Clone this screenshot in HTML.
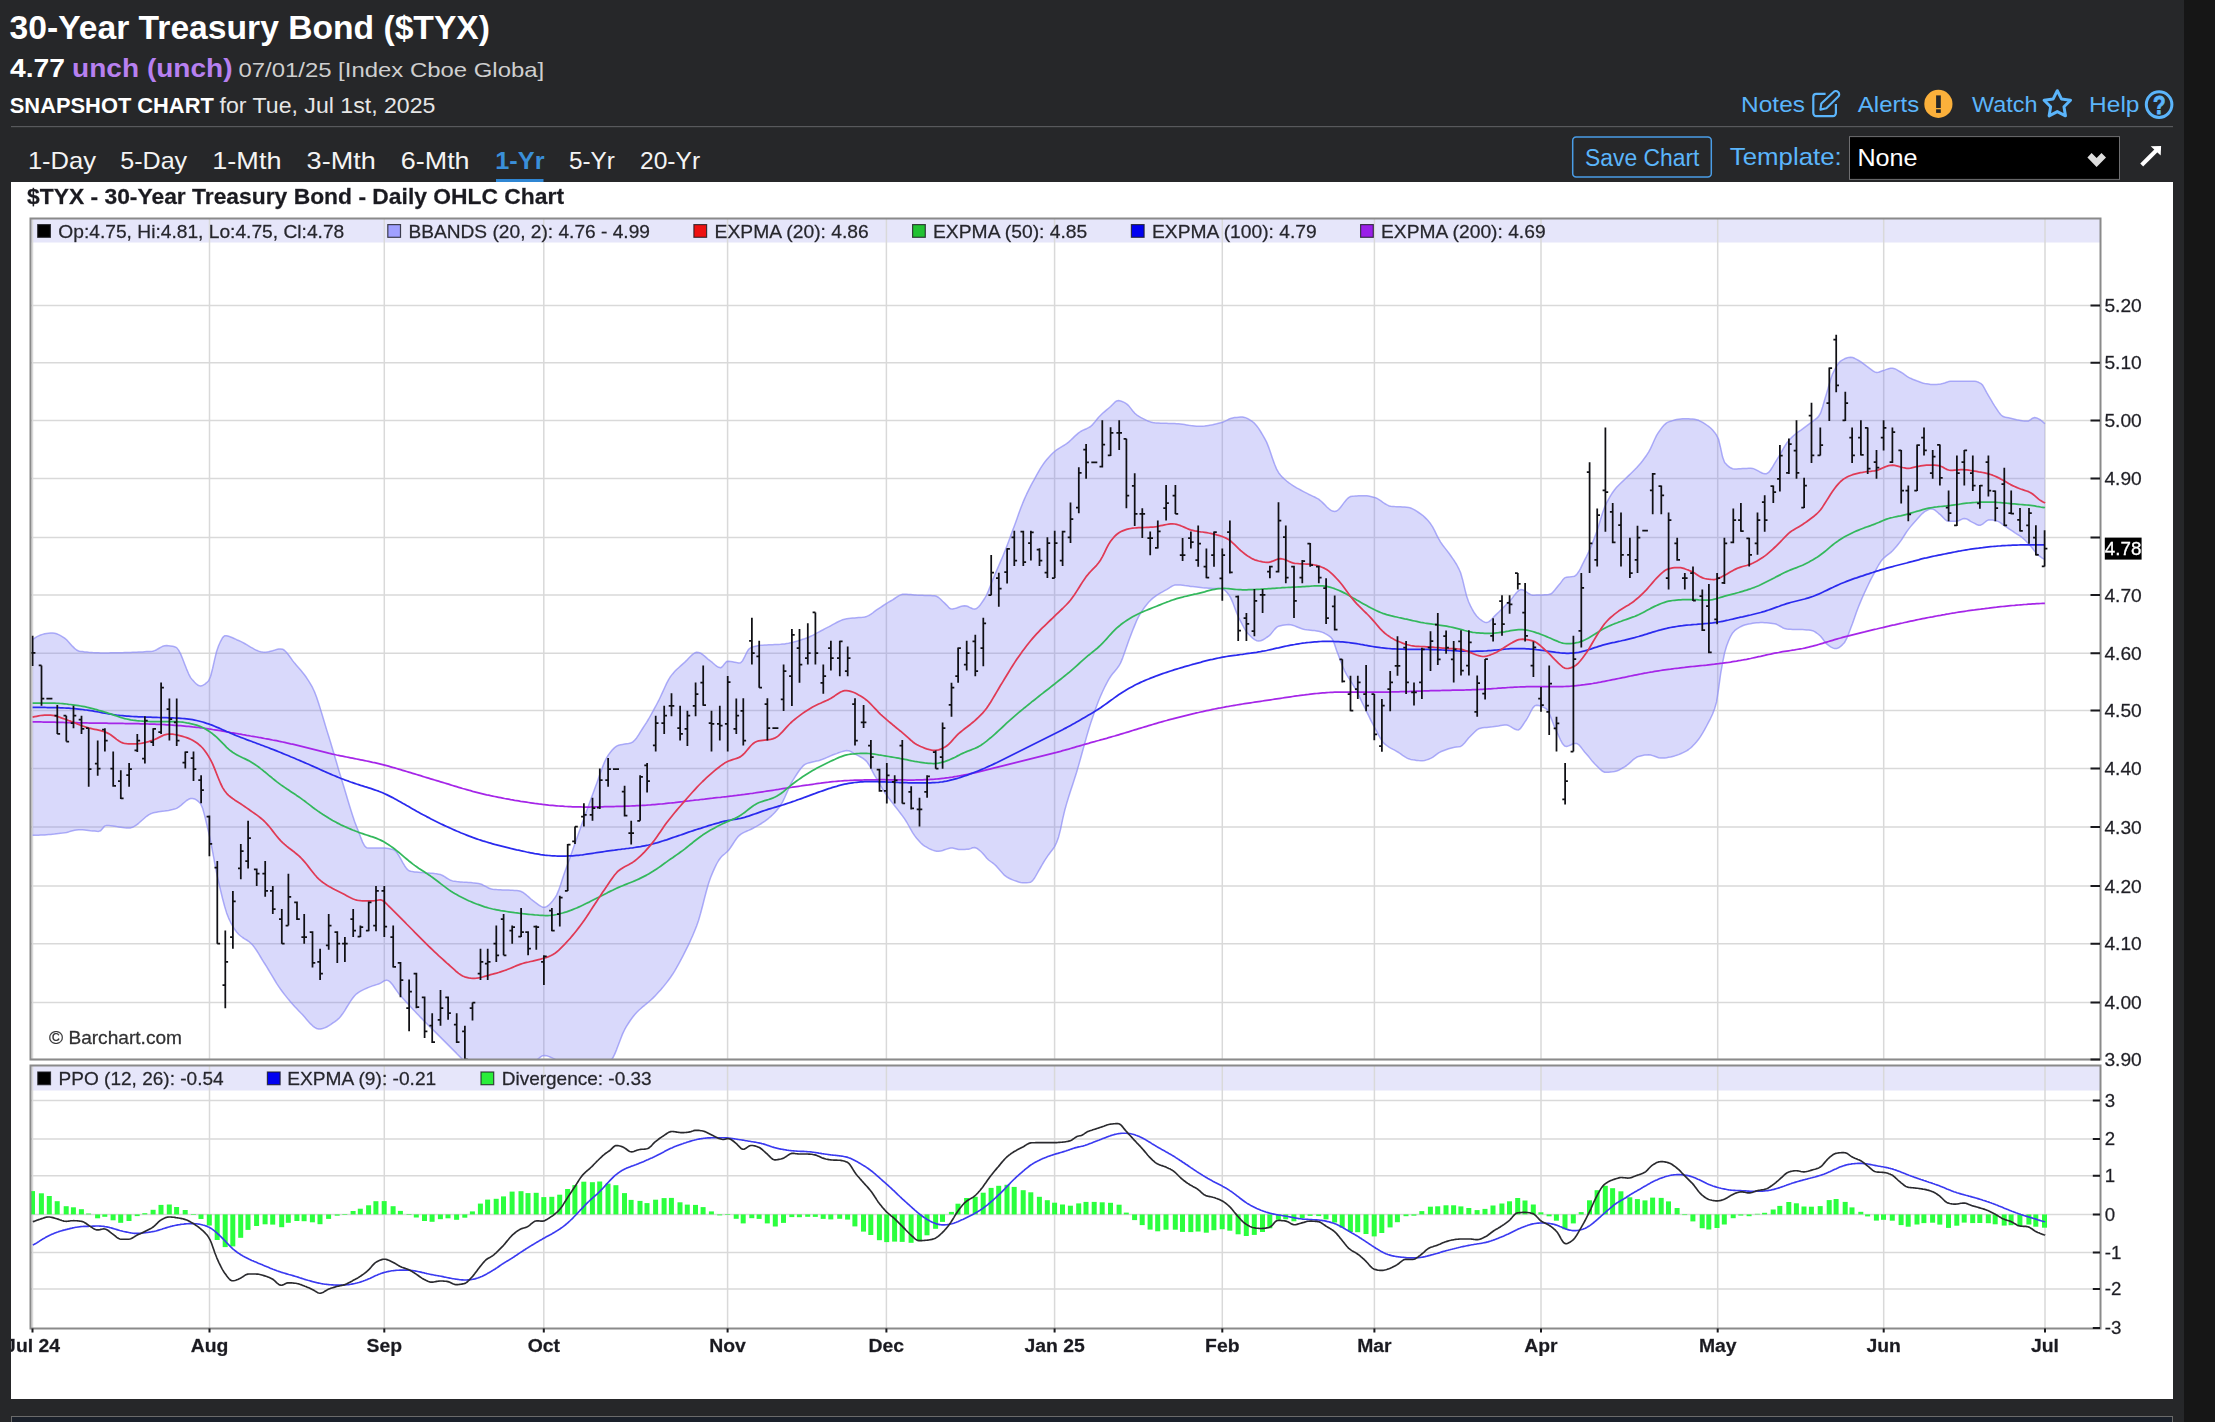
<!DOCTYPE html>
<html lang="en">
<head>
<meta charset="utf-8">
<title>30-Year Treasury Bond ($TYX) Snapshot Chart</title>
<style>
html,body{margin:0;padding:0}
body{width:2215px;height:1422px;overflow:hidden;position:relative;background:#262729;font-family:"Liberation Sans",sans-serif;color:#fff}
.strip{position:absolute;left:2184px;top:0;width:31px;height:1422px;background:#161616}
#chart{position:absolute;left:11px;top:182px;width:2162px;height:1217px;background:#fff;overflow:hidden}
.foot{position:absolute;left:11px;top:1416px;width:2162px;height:10px;background:#1a202a;border:1px solid #6b6b6b;box-sizing:border-box}
</style>
</head>
<body>
<div class="strip"></div>
<svg width="2215" height="182" viewBox="0 0 2215 182" style="position:absolute;left:0;top:0" font-family="Liberation Sans, sans-serif">
<text x="9.6" y="39.2" font-size="33.0" fill="#ffffff" font-weight="bold" textLength="480.4" lengthAdjust="spacingAndGlyphs">30-Year Treasury Bond ($TYX)</text>
<text x="10.0" y="77.0" font-size="25.7" fill="#ffffff" font-weight="bold" textLength="55.1" lengthAdjust="spacingAndGlyphs">4.77</text>
<text x="72.1" y="77.0" font-size="25.7" fill="#b780f0" font-weight="bold" textLength="160.5" lengthAdjust="spacingAndGlyphs">unch (unch)</text>
<text x="238.4" y="77.0" font-size="21.0" fill="#cfcfcf" textLength="305.8" lengthAdjust="spacingAndGlyphs">07/01/25 [Index Cboe Globa]</text>
<text x="9.8" y="112.5" font-size="21.3" fill="#ffffff" font-weight="bold" textLength="204.0" lengthAdjust="spacingAndGlyphs">SNAPSHOT CHART</text>
<text x="219.6" y="112.5" font-size="21.3" fill="#e6e6e6" textLength="215.8" lengthAdjust="spacingAndGlyphs">for Tue, Jul 1st, 2025</text>
<text x="27.9" y="169.1" font-size="23.4" fill="#f4f4f4" textLength="68.2" lengthAdjust="spacingAndGlyphs">1-Day</text>
<text x="120.2" y="169.1" font-size="23.4" fill="#f4f4f4" textLength="67.0" lengthAdjust="spacingAndGlyphs">5-Day</text>
<text x="212.3" y="169.1" font-size="23.4" fill="#f4f4f4" textLength="69.2" lengthAdjust="spacingAndGlyphs">1-Mth</text>
<text x="306.6" y="169.1" font-size="23.4" fill="#f4f4f4" textLength="69.2" lengthAdjust="spacingAndGlyphs">3-Mth</text>
<text x="400.8" y="169.1" font-size="23.4" fill="#f4f4f4" textLength="68.8" lengthAdjust="spacingAndGlyphs">6-Mth</text>
<text x="495.3" y="169.1" font-size="23.4" fill="#3a8fd9" font-weight="bold" textLength="49.2" lengthAdjust="spacingAndGlyphs">1-Yr</text>
<text x="568.9" y="169.1" font-size="23.4" fill="#f4f4f4" textLength="45.9" lengthAdjust="spacingAndGlyphs">5-Yr</text>
<text x="640.0" y="169.1" font-size="23.4" fill="#f4f4f4" textLength="60.1" lengthAdjust="spacingAndGlyphs">20-Yr</text>
<rect x="496" y="179" width="47.5" height="3" fill="#2f86d3"/>
<text x="1741.1" y="112.2" font-size="22.6" fill="#5bb5fb" textLength="63.9" lengthAdjust="spacingAndGlyphs">Notes</text>
<text x="1857.8" y="112.2" font-size="22.6" fill="#5bb5fb" textLength="61.4" lengthAdjust="spacingAndGlyphs">Alerts</text>
<text x="1972.0" y="112.2" font-size="22.6" fill="#5bb5fb" textLength="65.4" lengthAdjust="spacingAndGlyphs">Watch</text>
<text x="2089.1" y="112.2" font-size="22.6" fill="#5bb5fb" textLength="50.4" lengthAdjust="spacingAndGlyphs">Help</text>
<text x="1585.0" y="165.6" font-size="23.0" fill="#5bb5fb" textLength="114.4" lengthAdjust="spacingAndGlyphs">Save Chart</text>
<text x="1729.8" y="165.0" font-size="24.6" fill="#5bb5fb" textLength="111.9" lengthAdjust="spacingAndGlyphs">Template:</text>
<rect x="11" y="126" width="2162" height="1.2" fill="#58595c"/>
<rect x="1572.7" y="136.9" width="138.6" height="40" rx="3.5" fill="none" stroke="#4a9de6" stroke-width="1.5"/>
<rect x="1849.5" y="136.6" width="270" height="42.8" fill="#000" stroke="#6e6e70" stroke-width="1"/>
<text x="1857.4" y="166.4" font-size="23.5" fill="#ffffff" textLength="60.2" lengthAdjust="spacingAndGlyphs">None</text>
<path d="M2087.4 157.6 L2091.6 153.1 L2096.6 158.1 L2101.5 153.1 L2106 157.4 L2096.6 167 Z" fill="#dddddd"/>
<path d="M2141.7 165 L2156.5 150.2" stroke="#fff" stroke-width="4.1" fill="none" stroke-linecap="butt"/>
<path d="M2150.7 146.3 L2161.1 145.9 L2160.7 155.4 Z" fill="#fff" stroke="none"/>
<path d="M1825.6 93.9 H1816.3 a3 3 0 0 0 -3 3 V113.1 a3 3 0 0 0 3 3 H1832.9 a3 3 0 0 0 3 -3 V103.9" fill="none" stroke="#5bb5fb" stroke-width="2.2"/>
<path d="M1821.3 103.6 L1833.6 91.9 a3.1 3.1 0 0 1 4.4 0 l0.3 0.3 a3.1 3.1 0 0 1 0 4.4 L1826.4 108.3 L1820.4 109.6 Z" fill="none" stroke="#5bb5fb" stroke-width="2.1" stroke-linejoin="round"/>
<circle cx="1938.4" cy="103.9" r="14.1" fill="#fbb03b"/>
<rect x="1936.1" y="95.4" width="4.7" height="12.6" fill="#262729"/><rect x="1936.1" y="109.3" width="4.7" height="3.6" fill="#262729"/>
<path d="M2057.30 90.70 L2061.41 98.94 L2070.52 100.30 L2063.96 106.76 L2065.47 115.85 L2057.30 111.60 L2049.13 115.85 L2050.64 106.76 L2044.08 100.30 L2053.19 98.94Z" fill="none" stroke="#5bb5fb" stroke-width="3" stroke-linejoin="round"/>
<circle cx="2159.1" cy="104.6" r="12.8" fill="none" stroke="#5bb5fb" stroke-width="3"/>
<text x="2152.9" y="113.6" font-size="25.5" font-weight="bold" fill="#5bb5fb" stroke="#5bb5fb" stroke-width="0.9" stroke-linejoin="round" textLength="12.6" lengthAdjust="spacingAndGlyphs">?</text>
</svg>
<div id="chart">
<svg width="2162" height="1217" viewBox="0 0 2162 1217" style="position:absolute;left:0;top:0;filter:blur(0.6px)">
<rect x="19.5" y="36.5" width="2070.0" height="24.0" fill="#e6e6fa"/>
<rect x="19.5" y="883.5" width="2070.0" height="25.0" fill="#e6e6fa"/>
<path d="M19.5 123.4 H2089.5M19.5 180.8 H2089.5M19.5 238.5 H2089.5M19.5 296.4 H2089.5M19.5 355.4 H2089.5M19.5 413.0 H2089.5M19.5 471.2 H2089.5M19.5 528.6 H2089.5M19.5 586.5 H2089.5M19.5 645.0 H2089.5M19.5 704.0 H2089.5M19.5 761.7 H2089.5M19.5 820.4 H2089.5M19.5 877.5 H2089.5M21.5 36.5 V877.5M21.5 883.5 V1146.5M198.5 36.5 V877.5M198.5 883.5 V1146.5M373.3 36.5 V877.5M373.3 883.5 V1146.5M532.8 36.5 V877.5M532.8 883.5 V1146.5M716.6 36.5 V877.5M716.6 883.5 V1146.5M875.4 36.5 V877.5M875.4 883.5 V1146.5M1043.6 36.5 V877.5M1043.6 883.5 V1146.5M1211.3 36.5 V877.5M1211.3 883.5 V1146.5M1363.4 36.5 V877.5M1363.4 883.5 V1146.5M1530.0 36.5 V877.5M1530.0 883.5 V1146.5M1706.7 36.5 V877.5M1706.7 883.5 V1146.5M1872.7 36.5 V877.5M1872.7 883.5 V1146.5M2034.0 36.5 V877.5M2034.0 883.5 V1146.5M19.5 918.6 H2089.5M19.5 957.0 H2089.5M19.5 993.7 H2089.5M19.5 1032.4 H2089.5M19.5 1070.4 H2089.5M19.5 1107.0 H2089.5" stroke="#d9d9d9" stroke-width="1.5" fill="none"/>
<clipPath id="c1"><rect x="19.5" y="36.5" width="2070.0" height="841.0"/></clipPath>
<g clip-path="url(#c1)">
<path d="M21.6 457.7 L23.6 456.2 L25.6 454.9 L27.6 453.9 L29.6 453.0 L31.6 452.4 L33.6 451.8 L35.6 451.5 L37.6 451.2 L39.6 451.1 L41.6 451.1 L43.6 451.2 L45.6 451.8 L47.6 452.6 L49.6 453.7 L51.6 454.8 L53.6 456.1 L55.6 457.8 L57.6 459.9 L59.6 462.2 L61.6 464.4 L63.6 466.4 L65.6 468.0 L67.6 469.0 L69.6 469.4 L71.6 469.6 L73.6 469.9 L75.6 470.1 L77.6 470.3 L79.6 470.4 L81.6 470.6 L83.6 470.7 L85.6 470.8 L87.6 470.8 L89.6 470.9 L91.6 470.9 L93.6 470.9 L95.6 470.9 L97.6 470.9 L99.6 470.8 L101.6 470.8 L103.6 470.8 L105.6 470.8 L107.6 470.7 L109.6 470.7 L111.6 470.7 L113.6 470.6 L115.6 470.5 L117.6 470.5 L119.6 470.4 L121.6 470.3 L123.6 470.3 L125.6 470.2 L127.6 470.1 L129.6 470.0 L131.6 469.9 L133.6 469.7 L135.6 469.6 L137.6 469.5 L139.6 469.4 L141.6 469.2 L143.6 468.6 L145.6 467.7 L147.6 466.5 L149.6 465.3 L151.6 464.3 L153.6 463.7 L155.6 463.6 L157.6 463.8 L159.6 464.0 L161.6 464.3 L163.6 464.8 L165.6 465.6 L167.6 468.1 L169.6 471.9 L171.6 476.7 L173.6 481.9 L175.6 487.1 L177.6 491.8 L179.6 495.6 L181.6 498.1 L183.6 500.3 L185.6 502.2 L187.6 503.6 L189.6 503.9 L191.6 503.4 L193.6 502.3 L195.6 500.7 L197.6 498.8 L199.6 494.2 L201.6 486.5 L203.6 477.6 L205.6 469.4 L207.6 463.7 L209.6 459.3 L211.6 455.6 L213.6 453.7 L215.6 453.8 L217.6 454.3 L219.6 455.0 L221.6 455.8 L223.6 456.7 L225.6 457.7 L227.6 458.5 L229.6 459.4 L231.6 460.4 L233.6 461.5 L235.6 462.7 L237.6 463.9 L239.6 465.1 L241.6 466.2 L243.6 467.3 L245.6 468.3 L247.6 469.1 L249.6 469.7 L251.6 470.1 L253.6 470.2 L255.6 470.1 L257.6 469.7 L259.6 469.2 L261.6 468.7 L263.6 468.1 L265.6 467.5 L267.6 467.1 L269.6 466.9 L271.6 467.2 L273.6 468.5 L275.6 470.5 L277.6 473.0 L279.6 475.8 L281.6 478.6 L283.6 481.1 L285.6 483.4 L287.6 485.7 L289.6 488.0 L291.6 490.5 L293.6 493.0 L295.6 495.8 L297.6 498.8 L299.6 502.1 L301.6 505.7 L303.6 510.0 L305.6 515.2 L307.6 521.2 L309.6 527.6 L311.6 534.2 L313.6 541.0 L315.6 547.6 L317.6 554.0 L319.6 560.5 L321.6 567.2 L323.6 574.0 L325.6 580.8 L327.6 587.6 L329.6 594.3 L331.6 600.8 L333.6 607.3 L335.6 614.0 L337.6 620.7 L339.6 627.2 L341.6 633.5 L343.6 639.4 L345.6 644.7 L347.6 649.7 L349.6 655.1 L351.6 660.1 L353.6 663.9 L355.6 665.8 L357.6 665.9 L359.6 665.9 L361.6 665.9 L363.6 665.9 L365.6 665.9 L367.6 665.9 L369.6 665.9 L371.6 666.0 L373.6 666.1 L375.6 666.3 L377.6 666.6 L379.6 667.0 L381.6 667.4 L383.6 668.2 L385.6 670.2 L387.6 673.1 L389.6 676.6 L391.6 680.3 L393.6 683.7 L395.6 686.6 L397.6 688.5 L399.6 689.2 L401.6 689.6 L403.6 689.9 L405.6 690.1 L407.6 690.3 L409.6 690.5 L411.6 690.6 L413.6 690.8 L415.6 690.9 L417.6 691.0 L419.6 691.2 L421.6 691.3 L423.6 691.6 L425.6 691.8 L427.6 692.2 L429.6 692.6 L431.6 693.5 L433.6 694.7 L435.6 696.0 L437.6 697.2 L439.6 698.3 L441.6 698.9 L443.6 699.2 L445.6 699.5 L447.6 699.7 L449.6 699.9 L451.6 700.1 L453.6 700.2 L455.6 700.3 L457.6 700.4 L459.6 700.6 L461.6 700.8 L463.6 700.9 L465.6 701.2 L467.6 701.5 L469.6 701.9 L471.6 702.8 L473.6 703.8 L475.6 704.9 L477.6 706.0 L479.6 706.8 L481.6 707.2 L483.6 707.4 L485.6 707.6 L487.6 707.7 L489.6 707.8 L491.6 707.9 L493.6 708.0 L495.6 708.1 L497.6 708.1 L499.6 708.2 L501.6 708.3 L503.6 708.4 L505.6 708.6 L507.6 708.8 L509.6 709.3 L511.6 710.2 L513.6 711.6 L515.6 713.2 L517.6 714.9 L519.6 716.7 L521.6 718.4 L523.6 719.9 L525.6 721.3 L527.6 722.8 L529.6 724.2 L531.6 725.2 L533.6 725.3 L535.6 724.6 L537.6 723.2 L539.6 721.3 L541.6 718.9 L543.6 716.3 L545.6 713.1 L547.6 708.4 L549.6 702.7 L551.6 696.5 L553.6 690.5 L555.6 685.0 L557.6 679.5 L559.6 673.9 L561.6 668.2 L563.6 662.6 L565.6 656.9 L567.6 651.3 L569.6 645.7 L571.6 640.1 L573.6 634.6 L575.6 629.0 L577.6 623.4 L579.6 617.9 L581.6 612.5 L583.6 607.1 L585.6 601.7 L587.6 596.0 L589.6 590.3 L591.6 584.9 L593.6 579.9 L595.6 575.8 L597.6 572.6 L599.6 570.0 L601.6 567.6 L603.6 565.6 L605.6 564.1 L607.6 563.2 L609.6 562.7 L611.6 562.4 L613.6 562.1 L615.6 561.8 L617.6 561.5 L619.6 561.0 L621.6 560.1 L623.6 558.3 L625.6 555.9 L627.6 552.9 L629.6 549.7 L631.6 546.5 L633.6 543.4 L635.6 540.3 L637.6 537.0 L639.6 533.5 L641.6 529.9 L643.6 526.2 L645.6 522.5 L647.6 518.7 L649.6 514.5 L651.6 510.1 L653.6 505.7 L655.6 501.4 L657.6 497.6 L659.6 494.4 L661.6 491.9 L663.6 489.6 L665.6 487.5 L667.6 485.7 L669.6 483.9 L671.6 482.1 L673.6 480.4 L675.6 478.4 L677.6 476.2 L679.6 474.2 L681.6 472.4 L683.6 471.0 L685.6 470.3 L687.6 470.4 L689.6 471.2 L691.6 472.5 L693.6 474.1 L695.6 475.9 L697.6 477.7 L699.6 479.2 L701.6 480.7 L703.6 482.5 L705.6 484.1 L707.6 485.3 L709.6 485.8 L711.6 484.4 L713.6 481.8 L715.6 479.6 L717.6 479.2 L719.6 479.4 L721.6 479.8 L723.6 480.2 L725.6 480.6 L727.6 480.9 L729.6 480.8 L731.6 478.7 L733.6 474.9 L735.6 470.7 L737.6 467.3 L739.6 465.8 L741.6 465.0 L743.6 464.4 L745.6 463.9 L747.6 463.6 L749.6 463.3 L751.6 463.2 L753.6 463.0 L755.6 462.9 L757.6 462.8 L759.6 462.8 L761.6 462.7 L763.6 462.6 L765.6 462.5 L767.6 462.4 L769.6 462.3 L771.6 462.1 L773.6 461.9 L775.6 461.6 L777.6 461.3 L779.6 460.8 L781.6 460.4 L783.6 459.8 L785.6 459.3 L787.6 458.6 L789.6 458.0 L791.6 457.3 L793.6 456.7 L795.6 456.0 L797.6 455.2 L799.6 454.3 L801.6 453.4 L803.6 452.3 L805.6 451.2 L807.6 450.1 L809.6 449.0 L811.6 448.0 L813.6 446.9 L815.6 445.9 L817.6 444.9 L819.6 443.8 L821.6 442.7 L823.6 441.6 L825.6 440.5 L827.6 439.5 L829.6 438.6 L831.6 437.8 L833.6 437.2 L835.6 436.8 L837.6 436.5 L839.6 436.3 L841.6 436.1 L843.6 436.0 L845.6 435.8 L847.6 435.6 L849.6 435.4 L851.6 435.2 L853.6 434.9 L855.6 434.4 L857.6 433.6 L859.6 432.4 L861.6 431.0 L863.6 429.4 L865.6 427.9 L867.6 426.6 L869.6 425.3 L871.6 424.0 L873.6 422.7 L875.6 421.4 L877.6 420.2 L879.6 419.0 L881.6 417.8 L883.6 416.5 L885.6 415.2 L887.6 413.9 L889.6 412.9 L891.6 412.3 L893.6 412.2 L895.6 412.3 L897.6 412.4 L899.6 412.5 L901.6 412.7 L903.6 412.9 L905.6 413.1 L907.6 413.2 L909.6 413.3 L911.6 413.3 L913.6 413.4 L915.6 413.4 L917.6 413.5 L919.6 413.6 L921.6 413.7 L923.6 413.8 L925.6 414.3 L927.6 415.5 L929.6 417.3 L931.6 419.3 L933.6 421.1 L935.6 423.1 L937.6 425.3 L939.6 426.8 L941.6 427.0 L943.6 426.6 L945.6 426.0 L947.6 425.2 L949.6 424.5 L951.6 424.0 L953.6 423.8 L955.6 424.0 L957.6 424.8 L959.6 425.8 L961.6 426.7 L963.6 427.1 L965.6 426.5 L967.6 424.8 L969.6 422.4 L971.6 419.5 L973.6 416.5 L975.6 413.0 L977.6 408.4 L979.6 403.4 L981.6 398.1 L983.6 393.2 L985.6 388.6 L987.6 384.0 L989.6 379.4 L991.6 374.7 L993.6 369.9 L995.6 364.7 L997.6 359.4 L999.6 354.0 L1001.6 348.5 L1003.6 343.2 L1005.6 337.7 L1007.6 332.1 L1009.6 326.6 L1011.6 321.4 L1013.6 316.6 L1015.6 312.2 L1017.6 308.1 L1019.6 304.2 L1021.6 300.4 L1023.6 296.8 L1025.6 293.1 L1027.6 289.6 L1029.6 286.2 L1031.6 283.1 L1033.6 280.3 L1035.6 277.8 L1037.6 275.4 L1039.6 273.2 L1041.6 271.3 L1043.6 269.5 L1045.6 267.9 L1047.6 266.6 L1049.6 265.4 L1051.6 264.2 L1053.6 263.0 L1055.6 261.6 L1057.6 260.1 L1059.6 258.3 L1061.6 256.4 L1063.6 254.4 L1065.6 252.6 L1067.6 250.9 L1069.6 249.5 L1071.6 248.4 L1073.6 247.5 L1075.6 246.7 L1077.6 245.7 L1079.6 244.5 L1081.6 242.6 L1083.6 240.3 L1085.6 237.7 L1087.6 235.2 L1089.6 233.2 L1091.6 231.3 L1093.6 229.6 L1095.6 227.9 L1097.6 226.2 L1099.6 224.5 L1101.6 222.5 L1103.6 220.4 L1105.6 218.9 L1107.6 218.5 L1109.6 218.9 L1111.6 219.7 L1113.6 220.7 L1115.6 221.9 L1117.6 223.6 L1119.6 226.1 L1121.6 228.7 L1123.6 231.1 L1125.6 232.8 L1127.6 234.1 L1129.6 235.3 L1131.6 236.4 L1133.6 237.4 L1135.6 238.4 L1137.6 239.2 L1139.6 239.9 L1141.6 240.4 L1143.6 240.8 L1145.6 241.0 L1147.6 241.1 L1149.6 241.2 L1151.6 241.2 L1153.6 241.3 L1155.6 241.3 L1157.6 241.4 L1159.6 241.4 L1161.6 241.5 L1163.6 241.6 L1165.6 241.7 L1167.6 241.8 L1169.6 242.0 L1171.6 242.3 L1173.6 242.6 L1175.6 242.9 L1177.6 243.3 L1179.6 243.6 L1181.6 243.8 L1183.6 244.0 L1185.6 244.2 L1187.6 244.3 L1189.6 244.3 L1191.6 244.2 L1193.6 244.0 L1195.6 243.7 L1197.6 243.4 L1199.6 243.1 L1201.6 242.7 L1203.6 242.2 L1205.6 241.8 L1207.6 241.3 L1209.6 240.8 L1211.6 240.2 L1213.6 239.4 L1215.6 238.4 L1217.6 237.3 L1219.6 236.5 L1221.6 236.0 L1223.6 235.6 L1225.6 235.4 L1227.6 235.2 L1229.6 235.1 L1231.6 235.0 L1233.6 235.4 L1235.6 236.1 L1237.6 237.2 L1239.6 238.4 L1241.6 239.7 L1243.6 241.4 L1245.6 243.7 L1247.6 246.4 L1249.6 249.5 L1251.6 252.8 L1253.6 256.3 L1255.6 260.1 L1257.6 265.1 L1259.6 270.8 L1261.6 276.7 L1263.6 282.3 L1265.6 287.1 L1267.6 290.7 L1269.6 293.2 L1271.6 295.4 L1273.6 297.3 L1275.6 299.0 L1277.6 300.6 L1279.6 302.0 L1281.6 303.4 L1283.6 304.6 L1285.6 305.8 L1287.6 306.9 L1289.6 308.0 L1291.6 309.1 L1293.6 310.2 L1295.6 311.2 L1297.6 312.2 L1299.6 313.1 L1301.6 314.1 L1303.6 315.0 L1305.6 316.1 L1307.6 317.2 L1309.6 318.8 L1311.6 320.6 L1313.6 322.6 L1315.6 324.7 L1317.6 326.5 L1319.6 328.1 L1321.6 329.1 L1323.6 329.5 L1325.6 329.0 L1327.6 327.5 L1329.6 325.3 L1331.6 322.6 L1333.6 319.9 L1335.6 317.5 L1337.6 315.6 L1339.6 314.5 L1341.6 314.2 L1343.6 314.1 L1345.6 313.9 L1347.6 313.8 L1349.6 313.7 L1351.6 313.7 L1353.6 313.7 L1355.6 313.8 L1357.6 314.1 L1359.6 314.4 L1361.6 314.9 L1363.6 315.4 L1365.6 316.2 L1367.6 317.3 L1369.6 318.6 L1371.6 320.1 L1373.6 321.5 L1375.6 322.7 L1377.6 323.7 L1379.6 324.2 L1381.6 324.4 L1383.6 324.6 L1385.6 324.7 L1387.6 324.7 L1389.6 324.8 L1391.6 324.9 L1393.6 325.0 L1395.6 325.2 L1397.6 325.4 L1399.6 326.0 L1401.6 326.9 L1403.6 327.9 L1405.6 329.2 L1407.6 330.5 L1409.6 331.8 L1411.6 333.3 L1413.6 335.1 L1415.6 337.1 L1417.6 339.3 L1419.6 341.8 L1421.6 344.9 L1423.6 348.7 L1425.6 352.8 L1427.6 356.7 L1429.6 360.1 L1431.6 363.0 L1433.6 365.6 L1435.6 368.1 L1437.6 370.7 L1439.6 373.5 L1441.6 376.4 L1443.6 379.3 L1445.6 382.5 L1447.6 386.3 L1449.6 390.8 L1451.6 397.7 L1453.6 406.1 L1455.6 414.0 L1457.6 419.8 L1459.6 424.1 L1461.6 428.0 L1463.6 431.3 L1465.6 434.0 L1467.6 436.0 L1469.6 437.7 L1471.6 439.2 L1473.6 440.2 L1475.6 440.6 L1477.6 439.9 L1479.6 438.4 L1481.6 436.3 L1483.6 434.1 L1485.6 432.1 L1487.6 430.3 L1489.6 428.3 L1491.6 426.3 L1493.6 424.2 L1495.6 422.2 L1497.6 420.1 L1499.6 418.1 L1501.6 415.6 L1503.6 412.9 L1505.6 410.5 L1507.6 408.6 L1509.6 407.6 L1511.6 407.8 L1513.6 408.7 L1515.6 410.1 L1517.6 411.5 L1519.6 412.6 L1521.6 413.2 L1523.6 413.2 L1525.6 413.1 L1527.6 413.1 L1529.6 413.0 L1531.6 412.9 L1533.6 412.8 L1535.6 412.7 L1537.6 412.6 L1539.6 412.1 L1541.6 410.6 L1543.6 408.3 L1545.6 405.7 L1547.6 403.2 L1549.6 400.9 L1551.6 398.1 L1553.6 395.9 L1555.6 395.2 L1557.6 394.9 L1559.6 394.8 L1561.6 394.6 L1563.6 394.2 L1565.6 392.6 L1567.6 389.8 L1569.6 386.3 L1571.6 382.2 L1573.6 378.2 L1575.6 374.3 L1577.6 370.1 L1579.6 365.5 L1581.6 360.6 L1583.6 355.5 L1585.6 350.1 L1587.6 343.9 L1589.6 337.2 L1591.6 330.8 L1593.6 325.3 L1595.6 320.9 L1597.6 317.1 L1599.6 313.6 L1601.6 310.5 L1603.6 307.7 L1605.6 305.3 L1607.6 303.2 L1609.6 301.2 L1611.6 299.4 L1613.6 297.5 L1615.6 295.5 L1617.6 293.6 L1619.6 291.7 L1621.6 289.8 L1623.6 287.8 L1625.6 285.7 L1627.6 283.5 L1629.6 281.2 L1631.6 278.7 L1633.6 276.0 L1635.6 273.2 L1637.6 270.1 L1639.6 266.4 L1641.6 262.0 L1643.6 257.5 L1645.6 253.4 L1647.6 250.2 L1649.6 247.4 L1651.6 244.8 L1653.6 242.6 L1655.6 240.9 L1657.6 239.9 L1659.6 239.2 L1661.6 238.6 L1663.6 238.0 L1665.6 237.6 L1667.6 237.2 L1669.6 236.9 L1671.6 236.7 L1673.6 236.7 L1675.6 236.7 L1677.6 236.8 L1679.6 236.9 L1681.6 237.1 L1683.6 237.3 L1685.6 237.7 L1687.6 238.3 L1689.6 239.3 L1691.6 240.4 L1693.6 241.6 L1695.6 243.0 L1697.6 244.4 L1699.6 246.0 L1701.6 248.0 L1703.6 250.4 L1705.6 253.3 L1707.6 257.4 L1709.6 265.8 L1711.6 275.1 L1713.6 280.5 L1715.6 282.6 L1717.6 284.5 L1719.6 285.8 L1721.6 286.7 L1723.6 286.9 L1725.6 286.9 L1727.6 286.8 L1729.6 286.7 L1731.6 286.6 L1733.6 286.5 L1735.6 286.4 L1737.6 286.3 L1739.6 286.2 L1741.6 286.4 L1743.6 287.1 L1745.6 288.1 L1747.6 289.2 L1749.6 290.3 L1751.6 291.2 L1753.6 291.8 L1755.6 291.7 L1757.6 290.4 L1759.6 288.0 L1761.6 284.8 L1763.6 281.4 L1765.6 278.1 L1767.6 275.0 L1769.6 271.6 L1771.6 267.9 L1773.6 264.4 L1775.6 261.3 L1777.6 258.8 L1779.6 256.6 L1781.6 254.5 L1783.6 252.7 L1785.6 251.0 L1787.6 249.6 L1789.6 248.3 L1791.6 246.9 L1793.6 245.4 L1795.6 243.9 L1797.6 242.3 L1799.6 240.8 L1801.6 239.3 L1803.6 237.9 L1805.6 236.4 L1807.6 234.4 L1809.6 231.0 L1811.6 225.0 L1813.6 218.0 L1815.6 211.4 L1817.6 204.5 L1819.6 197.5 L1821.6 191.8 L1823.6 187.8 L1825.6 184.2 L1827.6 181.2 L1829.6 179.1 L1831.6 177.9 L1833.6 176.8 L1835.6 176.0 L1837.6 175.4 L1839.6 175.2 L1841.6 175.5 L1843.6 176.3 L1845.6 177.4 L1847.6 178.5 L1849.6 179.7 L1851.6 181.1 L1853.6 182.6 L1855.6 184.2 L1857.6 185.6 L1859.6 187.1 L1861.6 188.6 L1863.6 189.9 L1865.6 190.5 L1867.6 190.3 L1869.6 189.5 L1871.6 188.7 L1873.6 188.1 L1875.6 187.4 L1877.6 186.7 L1879.6 186.2 L1881.6 186.2 L1883.6 186.7 L1885.6 187.7 L1887.6 188.8 L1889.6 190.0 L1891.6 191.2 L1893.6 192.7 L1895.6 194.1 L1897.6 195.3 L1899.6 196.3 L1901.6 197.2 L1903.6 198.0 L1905.6 198.8 L1907.6 199.5 L1909.6 200.3 L1911.6 201.0 L1913.6 201.5 L1915.6 201.8 L1917.6 202.1 L1919.6 202.4 L1921.6 202.5 L1923.6 202.6 L1925.6 202.5 L1927.6 202.2 L1929.6 201.9 L1931.6 201.5 L1933.6 201.0 L1935.6 200.3 L1937.6 199.6 L1939.6 199.3 L1941.6 199.3 L1943.6 199.3 L1945.6 199.3 L1947.6 199.3 L1949.6 199.3 L1951.6 199.3 L1953.6 199.3 L1955.6 199.3 L1957.6 199.3 L1959.6 199.3 L1961.6 199.3 L1963.6 199.3 L1965.6 199.6 L1967.6 200.3 L1969.6 201.3 L1971.6 203.1 L1973.6 206.7 L1975.6 210.4 L1977.6 213.8 L1979.6 217.2 L1981.6 220.6 L1983.6 223.8 L1985.6 226.8 L1987.6 229.9 L1989.6 232.5 L1991.6 234.2 L1993.6 235.0 L1995.6 235.4 L1997.6 235.8 L1999.6 236.2 L2001.6 236.7 L2003.6 237.2 L2005.6 237.7 L2007.6 238.1 L2009.6 238.4 L2011.6 238.7 L2013.6 238.9 L2015.6 239.1 L2017.6 238.9 L2019.6 237.7 L2021.6 236.2 L2023.6 235.5 L2025.6 235.9 L2027.6 236.9 L2029.6 238.0 L2031.6 239.6 L2033.6 241.5 L2033.9 241.8 L2033.9 377.6 L2033.6 377.4 L2031.6 376.3 L2029.6 374.9 L2027.6 373.3 L2025.6 371.4 L2023.6 369.1 L2021.6 366.5 L2019.6 364.1 L2017.6 361.9 L2015.6 359.8 L2013.6 357.8 L2011.6 356.0 L2009.6 354.4 L2007.6 353.1 L2005.6 351.8 L2003.6 350.6 L2001.6 349.2 L1999.6 347.9 L1997.6 346.6 L1995.6 345.2 L1993.6 343.9 L1991.6 342.3 L1989.6 340.8 L1987.6 339.6 L1985.6 338.9 L1983.6 338.5 L1981.6 338.1 L1979.6 337.9 L1977.6 337.9 L1975.6 338.9 L1973.6 340.5 L1971.6 342.1 L1969.6 343.2 L1967.6 343.2 L1965.6 342.5 L1963.6 341.4 L1961.6 340.4 L1959.6 339.3 L1957.6 338.0 L1955.6 336.9 L1953.6 336.4 L1951.6 336.8 L1949.6 337.8 L1947.6 338.7 L1945.6 339.2 L1943.6 339.2 L1941.6 339.2 L1939.6 339.2 L1937.6 339.2 L1935.6 338.7 L1933.6 337.1 L1931.6 334.9 L1929.6 332.9 L1927.6 331.3 L1925.6 329.5 L1923.6 327.9 L1921.6 327.0 L1919.6 326.9 L1917.6 327.6 L1915.6 328.6 L1913.6 329.7 L1911.6 331.3 L1909.6 333.3 L1907.6 335.6 L1905.6 337.8 L1903.6 340.0 L1901.6 342.2 L1899.6 344.6 L1897.6 347.1 L1895.6 349.9 L1893.6 353.0 L1891.6 356.2 L1889.6 359.1 L1887.6 361.7 L1885.6 364.2 L1883.6 366.5 L1881.6 368.7 L1879.6 370.6 L1877.6 372.2 L1875.6 373.7 L1873.6 375.3 L1871.6 377.3 L1869.6 379.8 L1867.6 383.0 L1865.6 386.6 L1863.6 390.4 L1861.6 394.1 L1859.6 397.9 L1857.6 402.0 L1855.6 406.2 L1853.6 410.5 L1851.6 415.0 L1849.6 419.6 L1847.6 424.5 L1845.6 429.7 L1843.6 435.5 L1841.6 441.3 L1839.6 446.6 L1837.6 451.8 L1835.6 456.7 L1833.6 460.4 L1831.6 462.6 L1829.6 464.4 L1827.6 465.8 L1825.6 466.6 L1823.6 466.6 L1821.6 465.9 L1819.6 464.8 L1817.6 463.4 L1815.6 461.9 L1813.6 459.6 L1811.6 456.8 L1809.6 454.3 L1807.6 452.5 L1805.6 451.0 L1803.6 449.7 L1801.6 448.7 L1799.6 448.3 L1797.6 448.0 L1795.6 447.9 L1793.6 447.7 L1791.6 447.6 L1789.6 447.5 L1787.6 447.5 L1785.6 447.4 L1783.6 447.4 L1781.6 447.4 L1779.6 447.3 L1777.6 447.3 L1775.6 447.1 L1773.6 446.6 L1771.6 445.7 L1769.6 444.5 L1767.6 443.3 L1765.6 442.3 L1763.6 441.7 L1761.6 441.4 L1759.6 441.2 L1757.6 441.0 L1755.6 440.8 L1753.6 440.7 L1751.6 440.6 L1749.6 440.6 L1747.6 440.7 L1745.6 440.8 L1743.6 441.0 L1741.6 441.3 L1739.6 441.7 L1737.6 442.0 L1735.6 442.5 L1733.6 443.0 L1731.6 443.8 L1729.6 444.7 L1727.6 445.8 L1725.6 447.1 L1723.6 448.7 L1721.6 450.9 L1719.6 454.3 L1717.6 458.7 L1715.6 464.0 L1713.6 470.9 L1711.6 480.6 L1709.6 491.8 L1707.6 506.7 L1705.6 519.9 L1703.6 526.8 L1701.6 532.0 L1699.6 536.3 L1697.6 540.1 L1695.6 544.0 L1693.6 547.7 L1691.6 551.2 L1689.6 554.4 L1687.6 557.2 L1685.6 559.7 L1683.6 562.0 L1681.6 564.1 L1679.6 566.0 L1677.6 567.5 L1675.6 568.8 L1673.6 569.9 L1671.6 570.9 L1669.6 571.8 L1667.6 572.6 L1665.6 573.3 L1663.6 573.9 L1661.6 574.4 L1659.6 574.9 L1657.6 575.3 L1655.6 575.7 L1653.6 575.9 L1651.6 576.1 L1649.6 576.0 L1647.6 575.7 L1645.6 575.0 L1643.6 574.3 L1641.6 573.6 L1639.6 573.0 L1637.6 572.8 L1635.6 572.9 L1633.6 573.1 L1631.6 573.5 L1629.6 573.9 L1627.6 574.4 L1625.6 575.3 L1623.6 576.6 L1621.6 578.2 L1619.6 580.1 L1617.6 581.9 L1615.6 583.5 L1613.6 584.8 L1611.6 586.0 L1609.6 587.2 L1607.6 588.3 L1605.6 589.0 L1603.6 589.5 L1601.6 589.8 L1599.6 590.0 L1597.6 590.2 L1595.6 590.3 L1593.6 590.2 L1591.6 589.3 L1589.6 587.7 L1587.6 585.8 L1585.6 583.7 L1583.6 581.8 L1581.6 579.6 L1579.6 577.1 L1577.6 574.6 L1575.6 572.2 L1573.6 570.0 L1571.6 567.4 L1569.6 564.8 L1567.6 562.6 L1565.6 561.4 L1563.6 561.4 L1561.6 562.0 L1559.6 563.0 L1557.6 563.9 L1555.6 564.5 L1553.6 564.1 L1551.6 561.8 L1549.6 558.1 L1547.6 553.7 L1545.6 549.4 L1543.6 545.3 L1541.6 540.1 L1539.6 534.8 L1537.6 530.1 L1535.6 527.0 L1533.6 525.8 L1531.6 524.8 L1529.6 524.0 L1527.6 523.5 L1525.6 523.2 L1523.6 523.9 L1521.6 526.3 L1519.6 530.0 L1517.6 534.0 L1515.6 537.5 L1513.6 540.4 L1511.6 543.5 L1509.6 546.3 L1507.6 547.9 L1505.6 547.8 L1503.6 547.0 L1501.6 545.9 L1499.6 544.6 L1497.6 543.6 L1495.6 543.1 L1493.6 543.1 L1491.6 543.3 L1489.6 543.5 L1487.6 543.9 L1485.6 544.2 L1483.6 544.5 L1481.6 544.8 L1479.6 545.0 L1477.6 545.2 L1475.6 545.4 L1473.6 545.6 L1471.6 545.8 L1469.6 546.2 L1467.6 546.8 L1465.6 548.1 L1463.6 550.0 L1461.6 552.0 L1459.6 554.0 L1457.6 556.0 L1455.6 558.5 L1453.6 561.0 L1451.6 563.1 L1449.6 564.4 L1447.6 564.7 L1445.6 564.9 L1443.6 565.3 L1441.6 565.7 L1439.6 566.2 L1437.6 566.8 L1435.6 567.5 L1433.6 568.2 L1431.6 569.0 L1429.6 569.8 L1427.6 570.9 L1425.6 572.3 L1423.6 573.9 L1421.6 575.4 L1419.6 576.4 L1417.6 577.2 L1415.6 577.9 L1413.6 578.5 L1411.6 578.8 L1409.6 578.7 L1407.6 578.6 L1405.6 578.4 L1403.6 578.1 L1401.6 577.8 L1399.6 577.4 L1397.6 576.8 L1395.6 575.8 L1393.6 574.6 L1391.6 573.3 L1389.6 571.9 L1387.6 570.5 L1385.6 569.3 L1383.6 568.2 L1381.6 567.2 L1379.6 566.1 L1377.6 564.9 L1375.6 563.5 L1373.6 561.9 L1371.6 559.7 L1369.6 556.6 L1367.6 553.1 L1365.6 549.2 L1363.6 545.5 L1361.6 541.7 L1359.6 537.8 L1357.6 533.7 L1355.6 529.6 L1353.6 525.5 L1351.6 521.5 L1349.6 517.3 L1347.6 513.2 L1345.6 509.3 L1343.6 505.5 L1341.6 502.1 L1339.6 498.9 L1337.6 495.9 L1335.6 492.6 L1333.6 488.8 L1331.6 484.3 L1329.6 479.1 L1327.6 473.8 L1325.6 468.4 L1323.6 462.4 L1321.6 457.5 L1319.6 455.1 L1317.6 453.6 L1315.6 452.3 L1313.6 451.3 L1311.6 450.4 L1309.6 449.8 L1307.6 449.3 L1305.6 448.9 L1303.6 448.6 L1301.6 448.4 L1299.6 448.2 L1297.6 448.0 L1295.6 447.8 L1293.6 447.5 L1291.6 447.0 L1289.6 446.3 L1287.6 445.5 L1285.6 444.7 L1283.6 443.9 L1281.6 443.2 L1279.6 442.8 L1277.6 442.6 L1275.6 442.7 L1273.6 442.9 L1271.6 443.2 L1269.6 443.7 L1267.6 444.2 L1265.6 445.4 L1263.6 447.4 L1261.6 449.9 L1259.6 452.4 L1257.6 454.2 L1255.6 455.5 L1253.6 456.9 L1251.6 458.0 L1249.6 458.8 L1247.6 459.1 L1245.6 458.7 L1243.6 457.6 L1241.6 456.1 L1239.6 454.2 L1237.6 452.3 L1235.6 449.9 L1233.6 446.8 L1231.6 443.2 L1229.6 439.4 L1227.6 435.5 L1225.6 430.8 L1223.6 425.5 L1221.6 420.1 L1219.6 415.6 L1217.6 412.4 L1215.6 410.0 L1213.6 408.0 L1211.6 406.9 L1209.6 406.7 L1207.6 406.6 L1205.6 406.5 L1203.6 406.5 L1201.6 406.4 L1199.6 406.3 L1197.6 406.2 L1195.6 406.0 L1193.6 405.9 L1191.6 405.7 L1189.6 405.4 L1187.6 405.2 L1185.6 405.0 L1183.6 404.8 L1181.6 404.6 L1179.6 404.4 L1177.6 404.1 L1175.6 403.8 L1173.6 403.6 L1171.6 403.3 L1169.6 403.1 L1167.6 403.0 L1165.6 402.9 L1163.6 403.1 L1161.6 403.9 L1159.6 405.0 L1157.6 406.4 L1155.6 407.6 L1153.6 408.7 L1151.6 409.8 L1149.6 410.9 L1147.6 412.1 L1145.6 413.4 L1143.6 414.8 L1141.6 416.4 L1139.6 418.3 L1137.6 420.3 L1135.6 422.7 L1133.6 425.3 L1131.6 428.1 L1129.6 431.2 L1127.6 434.6 L1125.6 438.8 L1123.6 443.6 L1121.6 448.6 L1119.6 453.8 L1117.6 458.9 L1115.6 464.7 L1113.6 470.6 L1111.6 476.1 L1109.6 480.9 L1107.6 484.3 L1105.6 487.1 L1103.6 489.4 L1101.6 491.8 L1099.6 494.5 L1097.6 497.7 L1095.6 501.3 L1093.6 505.3 L1091.6 509.5 L1089.6 514.0 L1087.6 518.8 L1085.6 524.0 L1083.6 529.5 L1081.6 535.4 L1079.6 541.4 L1077.6 547.8 L1075.6 554.6 L1073.6 561.8 L1071.6 569.0 L1069.6 576.3 L1067.6 583.4 L1065.6 590.3 L1063.6 596.6 L1061.6 602.7 L1059.6 608.8 L1057.6 615.0 L1055.6 621.6 L1053.6 628.8 L1051.6 637.4 L1049.6 647.1 L1047.6 654.9 L1045.6 660.5 L1043.6 664.6 L1041.6 667.5 L1039.6 670.0 L1037.6 672.7 L1035.6 675.7 L1033.6 678.7 L1031.6 682.0 L1029.6 685.5 L1027.6 688.9 L1025.6 692.5 L1023.6 696.0 L1021.6 698.6 L1019.6 700.3 L1017.6 700.6 L1015.6 700.7 L1013.6 700.8 L1011.6 700.8 L1009.6 700.5 L1007.6 700.0 L1005.6 699.3 L1003.6 698.6 L1001.6 697.9 L999.6 697.0 L997.6 696.0 L995.6 694.8 L993.6 693.4 L991.6 691.3 L989.6 689.1 L987.6 686.7 L985.6 684.4 L983.6 682.5 L981.6 680.9 L979.6 679.5 L977.6 678.0 L975.6 676.0 L973.6 673.6 L971.6 671.2 L969.6 669.3 L967.6 667.6 L965.6 666.2 L963.6 665.5 L961.6 665.8 L959.6 666.6 L957.6 667.2 L955.6 667.3 L953.6 667.5 L951.6 667.6 L949.6 667.6 L947.6 667.5 L945.6 667.0 L943.6 666.5 L941.6 666.1 L939.6 666.1 L937.6 666.5 L935.6 667.1 L933.6 667.8 L931.6 668.5 L929.6 669.1 L927.6 669.3 L925.6 669.2 L923.6 668.8 L921.6 668.1 L919.6 667.3 L917.6 666.3 L915.6 665.2 L913.6 664.1 L911.6 662.6 L909.6 660.7 L907.6 658.5 L905.6 656.2 L903.6 653.6 L901.6 650.6 L899.6 647.1 L897.6 643.5 L895.6 640.0 L893.6 636.9 L891.6 634.1 L889.6 631.5 L887.6 628.9 L885.6 626.3 L883.6 623.7 L881.6 621.1 L879.6 618.5 L877.6 615.9 L875.6 613.1 L873.6 610.2 L871.6 607.0 L869.6 603.6 L867.6 600.2 L865.6 596.7 L863.6 593.3 L861.6 589.6 L859.6 585.7 L857.6 582.2 L855.6 579.4 L853.6 577.6 L851.6 576.2 L849.6 575.0 L847.6 573.9 L845.6 572.9 L843.6 571.8 L841.6 570.6 L839.6 569.4 L837.6 568.7 L835.6 568.6 L833.6 568.9 L831.6 569.4 L829.6 570.1 L827.6 570.8 L825.6 571.6 L823.6 572.3 L821.6 573.0 L819.6 573.9 L817.6 574.8 L815.6 575.6 L813.6 576.5 L811.6 577.3 L809.6 578.0 L807.6 578.7 L805.6 579.1 L803.6 579.6 L801.6 579.9 L799.6 580.4 L797.6 580.9 L795.6 581.6 L793.6 582.6 L791.6 584.4 L789.6 586.7 L787.6 589.5 L785.6 592.5 L783.6 595.6 L781.6 598.8 L779.6 602.4 L777.6 606.6 L775.6 611.2 L773.6 615.7 L771.6 619.9 L769.6 623.4 L767.6 626.1 L765.6 628.5 L763.6 630.7 L761.6 632.7 L759.6 634.6 L757.6 636.3 L755.6 637.8 L753.6 639.3 L751.6 640.7 L749.6 642.0 L747.6 643.2 L745.6 644.3 L743.6 645.4 L741.6 646.5 L739.6 647.5 L737.6 648.4 L735.6 649.2 L733.6 650.1 L731.6 651.2 L729.6 652.4 L727.6 654.1 L725.6 656.5 L723.6 659.4 L721.6 662.5 L719.6 665.5 L717.6 668.2 L715.6 670.3 L713.6 672.0 L711.6 673.6 L709.6 675.7 L707.6 678.5 L705.6 682.0 L703.6 686.1 L701.6 690.6 L699.6 695.5 L697.6 701.3 L695.6 708.2 L693.6 715.8 L691.6 723.7 L689.6 731.3 L687.6 738.2 L685.6 743.9 L683.6 749.0 L681.6 753.8 L679.6 758.3 L677.6 762.6 L675.6 766.7 L673.6 770.7 L671.6 774.6 L669.6 778.4 L667.6 782.1 L665.6 785.7 L663.6 789.1 L661.6 792.3 L659.6 795.2 L657.6 798.0 L655.6 800.6 L653.6 803.1 L651.6 805.6 L649.6 807.9 L647.6 810.1 L645.6 812.3 L643.6 814.4 L641.6 816.4 L639.6 818.2 L637.6 820.0 L635.6 821.6 L633.6 823.3 L631.6 824.9 L629.6 826.7 L627.6 828.5 L625.6 830.5 L623.6 832.7 L621.6 835.2 L619.6 838.0 L617.6 841.0 L615.6 844.2 L613.6 847.7 L611.6 851.9 L609.6 856.9 L607.6 862.2 L605.6 867.6 L603.6 872.4 L601.6 876.3 L599.6 879.1 L597.6 881.5 L595.6 883.8 L593.6 886.0 L591.6 888.0 L589.6 889.8 L587.6 891.4 L585.6 892.6 L583.6 893.4 L581.6 893.9 L579.6 893.9 L577.6 893.8 L575.6 893.5 L573.6 893.1 L571.6 892.7 L569.6 892.1 L567.6 891.4 L565.6 890.7 L563.6 889.9 L561.6 889.1 L559.6 888.3 L557.6 887.4 L555.6 886.3 L553.6 884.9 L551.6 883.1 L549.6 881.4 L547.6 879.7 L545.6 878.2 L543.6 877.1 L541.6 876.1 L539.6 875.2 L537.6 874.4 L535.6 873.8 L533.6 873.5 L531.6 873.7 L529.6 874.9 L527.6 876.6 L525.6 878.3 L523.6 879.5 L521.6 880.7 L519.6 881.8 L517.6 882.9 L515.6 884.0 L513.6 885.0 L511.6 885.9 L509.6 886.7 L507.6 887.4 L505.6 888.1 L503.6 888.7 L501.6 889.3 L499.6 890.0 L497.6 890.6 L495.6 891.1 L493.6 891.7 L491.6 892.2 L489.6 892.6 L487.6 893.0 L485.6 893.4 L483.6 893.6 L481.6 893.8 L479.6 893.9 L477.6 893.9 L475.6 893.7 L473.6 893.2 L471.6 892.4 L469.6 891.4 L467.6 890.2 L465.6 888.9 L463.6 887.4 L461.6 885.9 L459.6 884.3 L457.6 882.8 L455.6 881.2 L453.6 879.6 L451.6 877.7 L449.6 875.6 L447.6 873.5 L445.6 871.4 L443.6 869.4 L441.6 867.4 L439.6 865.4 L437.6 863.4 L435.6 861.4 L433.6 859.4 L431.6 857.4 L429.6 855.4 L427.6 853.4 L425.6 851.4 L423.6 849.4 L421.6 847.4 L419.6 845.4 L417.6 843.5 L415.6 841.5 L413.6 839.5 L411.6 837.4 L409.6 835.4 L407.6 833.3 L405.6 831.2 L403.6 829.1 L401.6 826.9 L399.6 824.8 L397.6 822.6 L395.6 820.4 L393.6 818.2 L391.6 816.0 L389.6 813.8 L387.6 811.4 L385.6 808.6 L383.6 805.7 L381.6 802.8 L379.6 800.4 L377.6 798.7 L375.6 798.1 L373.6 798.7 L371.6 799.9 L369.6 801.1 L367.6 802.0 L365.6 802.6 L363.6 803.3 L361.6 803.9 L359.6 804.6 L357.6 805.4 L355.6 806.3 L353.6 807.1 L351.6 808.1 L349.6 809.2 L347.6 810.4 L345.6 811.8 L343.6 813.7 L341.6 816.2 L339.6 819.1 L337.6 822.3 L335.6 825.5 L333.6 828.8 L331.6 831.8 L329.6 834.5 L327.6 836.7 L325.6 838.3 L323.6 839.8 L321.6 841.2 L319.6 842.6 L317.6 843.8 L315.6 845.0 L313.6 845.9 L311.6 846.5 L309.6 846.9 L307.6 847.0 L305.6 846.5 L303.6 845.4 L301.6 843.8 L299.6 841.9 L297.6 839.7 L295.6 837.4 L293.6 835.1 L291.6 832.8 L289.6 830.8 L287.6 828.7 L285.6 826.6 L283.6 824.5 L281.6 822.2 L279.6 819.9 L277.6 817.6 L275.6 815.1 L273.6 812.6 L271.6 810.0 L269.6 807.3 L267.6 804.4 L265.6 801.3 L263.6 798.0 L261.6 794.7 L259.6 791.3 L257.6 788.0 L255.6 784.7 L253.6 781.5 L251.6 778.3 L249.6 775.0 L247.6 771.7 L245.6 768.5 L243.6 765.6 L241.6 763.0 L239.6 761.0 L237.6 759.3 L235.6 758.0 L233.6 756.8 L231.6 755.5 L229.6 754.0 L227.6 752.3 L225.6 750.0 L223.6 747.3 L221.6 744.0 L219.6 740.3 L217.6 736.1 L215.6 730.9 L213.6 724.3 L211.6 716.7 L209.6 708.5 L207.6 700.0 L205.6 690.8 L203.6 680.4 L201.6 669.6 L199.6 659.2 L197.6 650.0 L195.6 641.7 L193.6 633.4 L191.6 626.3 L189.6 621.8 L187.6 619.7 L185.6 618.1 L183.6 616.9 L181.6 616.4 L179.6 616.5 L177.6 617.3 L175.6 618.5 L173.6 620.2 L171.6 621.9 L169.6 623.7 L167.6 625.2 L165.6 626.4 L163.6 627.1 L161.6 627.6 L159.6 628.0 L157.6 628.4 L155.6 628.7 L153.6 629.0 L151.6 629.2 L149.6 629.5 L147.6 629.8 L145.6 630.2 L143.6 630.6 L141.6 631.1 L139.6 631.8 L137.6 632.9 L135.6 634.3 L133.6 636.0 L131.6 637.7 L129.6 639.5 L127.6 641.3 L125.6 642.9 L123.6 644.2 L121.6 645.3 L119.6 645.9 L117.6 646.1 L115.6 646.0 L113.6 645.8 L111.6 645.5 L109.6 645.2 L107.6 644.9 L105.6 644.6 L103.6 644.2 L101.6 643.9 L99.6 643.7 L97.6 643.5 L95.6 643.4 L93.6 644.1 L91.6 646.5 L89.6 648.8 L87.6 649.4 L85.6 649.3 L83.6 649.1 L81.6 648.9 L79.6 648.7 L77.6 648.4 L75.6 648.2 L73.6 648.0 L71.6 647.8 L69.6 647.7 L67.6 647.7 L65.6 647.9 L63.6 648.3 L61.6 648.8 L59.6 649.3 L57.6 649.9 L55.6 650.4 L53.6 650.8 L51.6 651.1 L49.6 651.3 L47.6 651.5 L45.6 651.7 L43.6 652.0 L41.6 652.2 L39.6 652.4 L37.6 652.5 L35.6 652.7 L33.6 652.9 L31.6 653.0 L29.6 653.1 L27.6 653.2 L25.6 653.3 L23.6 653.3 L21.6 653.3Z" fill="#7878f0" fill-opacity="0.28" stroke="none"/>
<path d="M21.6 457.7 L23.6 456.2 L25.6 454.9 L27.6 453.9 L29.6 453.0 L31.6 452.4 L33.6 451.8 L35.6 451.5 L37.6 451.2 L39.6 451.1 L41.6 451.1 L43.6 451.2 L45.6 451.8 L47.6 452.6 L49.6 453.7 L51.6 454.8 L53.6 456.1 L55.6 457.8 L57.6 459.9 L59.6 462.2 L61.6 464.4 L63.6 466.4 L65.6 468.0 L67.6 469.0 L69.6 469.4 L71.6 469.6 L73.6 469.9 L75.6 470.1 L77.6 470.3 L79.6 470.4 L81.6 470.6 L83.6 470.7 L85.6 470.8 L87.6 470.8 L89.6 470.9 L91.6 470.9 L93.6 470.9 L95.6 470.9 L97.6 470.9 L99.6 470.8 L101.6 470.8 L103.6 470.8 L105.6 470.8 L107.6 470.7 L109.6 470.7 L111.6 470.7 L113.6 470.6 L115.6 470.5 L117.6 470.5 L119.6 470.4 L121.6 470.3 L123.6 470.3 L125.6 470.2 L127.6 470.1 L129.6 470.0 L131.6 469.9 L133.6 469.7 L135.6 469.6 L137.6 469.5 L139.6 469.4 L141.6 469.2 L143.6 468.6 L145.6 467.7 L147.6 466.5 L149.6 465.3 L151.6 464.3 L153.6 463.7 L155.6 463.6 L157.6 463.8 L159.6 464.0 L161.6 464.3 L163.6 464.8 L165.6 465.6 L167.6 468.1 L169.6 471.9 L171.6 476.7 L173.6 481.9 L175.6 487.1 L177.6 491.8 L179.6 495.6 L181.6 498.1 L183.6 500.3 L185.6 502.2 L187.6 503.6 L189.6 503.9 L191.6 503.4 L193.6 502.3 L195.6 500.7 L197.6 498.8 L199.6 494.2 L201.6 486.5 L203.6 477.6 L205.6 469.4 L207.6 463.7 L209.6 459.3 L211.6 455.6 L213.6 453.7 L215.6 453.8 L217.6 454.3 L219.6 455.0 L221.6 455.8 L223.6 456.7 L225.6 457.7 L227.6 458.5 L229.6 459.4 L231.6 460.4 L233.6 461.5 L235.6 462.7 L237.6 463.9 L239.6 465.1 L241.6 466.2 L243.6 467.3 L245.6 468.3 L247.6 469.1 L249.6 469.7 L251.6 470.1 L253.6 470.2 L255.6 470.1 L257.6 469.7 L259.6 469.2 L261.6 468.7 L263.6 468.1 L265.6 467.5 L267.6 467.1 L269.6 466.9 L271.6 467.2 L273.6 468.5 L275.6 470.5 L277.6 473.0 L279.6 475.8 L281.6 478.6 L283.6 481.1 L285.6 483.4 L287.6 485.7 L289.6 488.0 L291.6 490.5 L293.6 493.0 L295.6 495.8 L297.6 498.8 L299.6 502.1 L301.6 505.7 L303.6 510.0 L305.6 515.2 L307.6 521.2 L309.6 527.6 L311.6 534.2 L313.6 541.0 L315.6 547.6 L317.6 554.0 L319.6 560.5 L321.6 567.2 L323.6 574.0 L325.6 580.8 L327.6 587.6 L329.6 594.3 L331.6 600.8 L333.6 607.3 L335.6 614.0 L337.6 620.7 L339.6 627.2 L341.6 633.5 L343.6 639.4 L345.6 644.7 L347.6 649.7 L349.6 655.1 L351.6 660.1 L353.6 663.9 L355.6 665.8 L357.6 665.9 L359.6 665.9 L361.6 665.9 L363.6 665.9 L365.6 665.9 L367.6 665.9 L369.6 665.9 L371.6 666.0 L373.6 666.1 L375.6 666.3 L377.6 666.6 L379.6 667.0 L381.6 667.4 L383.6 668.2 L385.6 670.2 L387.6 673.1 L389.6 676.6 L391.6 680.3 L393.6 683.7 L395.6 686.6 L397.6 688.5 L399.6 689.2 L401.6 689.6 L403.6 689.9 L405.6 690.1 L407.6 690.3 L409.6 690.5 L411.6 690.6 L413.6 690.8 L415.6 690.9 L417.6 691.0 L419.6 691.2 L421.6 691.3 L423.6 691.6 L425.6 691.8 L427.6 692.2 L429.6 692.6 L431.6 693.5 L433.6 694.7 L435.6 696.0 L437.6 697.2 L439.6 698.3 L441.6 698.9 L443.6 699.2 L445.6 699.5 L447.6 699.7 L449.6 699.9 L451.6 700.1 L453.6 700.2 L455.6 700.3 L457.6 700.4 L459.6 700.6 L461.6 700.8 L463.6 700.9 L465.6 701.2 L467.6 701.5 L469.6 701.9 L471.6 702.8 L473.6 703.8 L475.6 704.9 L477.6 706.0 L479.6 706.8 L481.6 707.2 L483.6 707.4 L485.6 707.6 L487.6 707.7 L489.6 707.8 L491.6 707.9 L493.6 708.0 L495.6 708.1 L497.6 708.1 L499.6 708.2 L501.6 708.3 L503.6 708.4 L505.6 708.6 L507.6 708.8 L509.6 709.3 L511.6 710.2 L513.6 711.6 L515.6 713.2 L517.6 714.9 L519.6 716.7 L521.6 718.4 L523.6 719.9 L525.6 721.3 L527.6 722.8 L529.6 724.2 L531.6 725.2 L533.6 725.3 L535.6 724.6 L537.6 723.2 L539.6 721.3 L541.6 718.9 L543.6 716.3 L545.6 713.1 L547.6 708.4 L549.6 702.7 L551.6 696.5 L553.6 690.5 L555.6 685.0 L557.6 679.5 L559.6 673.9 L561.6 668.2 L563.6 662.6 L565.6 656.9 L567.6 651.3 L569.6 645.7 L571.6 640.1 L573.6 634.6 L575.6 629.0 L577.6 623.4 L579.6 617.9 L581.6 612.5 L583.6 607.1 L585.6 601.7 L587.6 596.0 L589.6 590.3 L591.6 584.9 L593.6 579.9 L595.6 575.8 L597.6 572.6 L599.6 570.0 L601.6 567.6 L603.6 565.6 L605.6 564.1 L607.6 563.2 L609.6 562.7 L611.6 562.4 L613.6 562.1 L615.6 561.8 L617.6 561.5 L619.6 561.0 L621.6 560.1 L623.6 558.3 L625.6 555.9 L627.6 552.9 L629.6 549.7 L631.6 546.5 L633.6 543.4 L635.6 540.3 L637.6 537.0 L639.6 533.5 L641.6 529.9 L643.6 526.2 L645.6 522.5 L647.6 518.7 L649.6 514.5 L651.6 510.1 L653.6 505.7 L655.6 501.4 L657.6 497.6 L659.6 494.4 L661.6 491.9 L663.6 489.6 L665.6 487.5 L667.6 485.7 L669.6 483.9 L671.6 482.1 L673.6 480.4 L675.6 478.4 L677.6 476.2 L679.6 474.2 L681.6 472.4 L683.6 471.0 L685.6 470.3 L687.6 470.4 L689.6 471.2 L691.6 472.5 L693.6 474.1 L695.6 475.9 L697.6 477.7 L699.6 479.2 L701.6 480.7 L703.6 482.5 L705.6 484.1 L707.6 485.3 L709.6 485.8 L711.6 484.4 L713.6 481.8 L715.6 479.6 L717.6 479.2 L719.6 479.4 L721.6 479.8 L723.6 480.2 L725.6 480.6 L727.6 480.9 L729.6 480.8 L731.6 478.7 L733.6 474.9 L735.6 470.7 L737.6 467.3 L739.6 465.8 L741.6 465.0 L743.6 464.4 L745.6 463.9 L747.6 463.6 L749.6 463.3 L751.6 463.2 L753.6 463.0 L755.6 462.9 L757.6 462.8 L759.6 462.8 L761.6 462.7 L763.6 462.6 L765.6 462.5 L767.6 462.4 L769.6 462.3 L771.6 462.1 L773.6 461.9 L775.6 461.6 L777.6 461.3 L779.6 460.8 L781.6 460.4 L783.6 459.8 L785.6 459.3 L787.6 458.6 L789.6 458.0 L791.6 457.3 L793.6 456.7 L795.6 456.0 L797.6 455.2 L799.6 454.3 L801.6 453.4 L803.6 452.3 L805.6 451.2 L807.6 450.1 L809.6 449.0 L811.6 448.0 L813.6 446.9 L815.6 445.9 L817.6 444.9 L819.6 443.8 L821.6 442.7 L823.6 441.6 L825.6 440.5 L827.6 439.5 L829.6 438.6 L831.6 437.8 L833.6 437.2 L835.6 436.8 L837.6 436.5 L839.6 436.3 L841.6 436.1 L843.6 436.0 L845.6 435.8 L847.6 435.6 L849.6 435.4 L851.6 435.2 L853.6 434.9 L855.6 434.4 L857.6 433.6 L859.6 432.4 L861.6 431.0 L863.6 429.4 L865.6 427.9 L867.6 426.6 L869.6 425.3 L871.6 424.0 L873.6 422.7 L875.6 421.4 L877.6 420.2 L879.6 419.0 L881.6 417.8 L883.6 416.5 L885.6 415.2 L887.6 413.9 L889.6 412.9 L891.6 412.3 L893.6 412.2 L895.6 412.3 L897.6 412.4 L899.6 412.5 L901.6 412.7 L903.6 412.9 L905.6 413.1 L907.6 413.2 L909.6 413.3 L911.6 413.3 L913.6 413.4 L915.6 413.4 L917.6 413.5 L919.6 413.6 L921.6 413.7 L923.6 413.8 L925.6 414.3 L927.6 415.5 L929.6 417.3 L931.6 419.3 L933.6 421.1 L935.6 423.1 L937.6 425.3 L939.6 426.8 L941.6 427.0 L943.6 426.6 L945.6 426.0 L947.6 425.2 L949.6 424.5 L951.6 424.0 L953.6 423.8 L955.6 424.0 L957.6 424.8 L959.6 425.8 L961.6 426.7 L963.6 427.1 L965.6 426.5 L967.6 424.8 L969.6 422.4 L971.6 419.5 L973.6 416.5 L975.6 413.0 L977.6 408.4 L979.6 403.4 L981.6 398.1 L983.6 393.2 L985.6 388.6 L987.6 384.0 L989.6 379.4 L991.6 374.7 L993.6 369.9 L995.6 364.7 L997.6 359.4 L999.6 354.0 L1001.6 348.5 L1003.6 343.2 L1005.6 337.7 L1007.6 332.1 L1009.6 326.6 L1011.6 321.4 L1013.6 316.6 L1015.6 312.2 L1017.6 308.1 L1019.6 304.2 L1021.6 300.4 L1023.6 296.8 L1025.6 293.1 L1027.6 289.6 L1029.6 286.2 L1031.6 283.1 L1033.6 280.3 L1035.6 277.8 L1037.6 275.4 L1039.6 273.2 L1041.6 271.3 L1043.6 269.5 L1045.6 267.9 L1047.6 266.6 L1049.6 265.4 L1051.6 264.2 L1053.6 263.0 L1055.6 261.6 L1057.6 260.1 L1059.6 258.3 L1061.6 256.4 L1063.6 254.4 L1065.6 252.6 L1067.6 250.9 L1069.6 249.5 L1071.6 248.4 L1073.6 247.5 L1075.6 246.7 L1077.6 245.7 L1079.6 244.5 L1081.6 242.6 L1083.6 240.3 L1085.6 237.7 L1087.6 235.2 L1089.6 233.2 L1091.6 231.3 L1093.6 229.6 L1095.6 227.9 L1097.6 226.2 L1099.6 224.5 L1101.6 222.5 L1103.6 220.4 L1105.6 218.9 L1107.6 218.5 L1109.6 218.9 L1111.6 219.7 L1113.6 220.7 L1115.6 221.9 L1117.6 223.6 L1119.6 226.1 L1121.6 228.7 L1123.6 231.1 L1125.6 232.8 L1127.6 234.1 L1129.6 235.3 L1131.6 236.4 L1133.6 237.4 L1135.6 238.4 L1137.6 239.2 L1139.6 239.9 L1141.6 240.4 L1143.6 240.8 L1145.6 241.0 L1147.6 241.1 L1149.6 241.2 L1151.6 241.2 L1153.6 241.3 L1155.6 241.3 L1157.6 241.4 L1159.6 241.4 L1161.6 241.5 L1163.6 241.6 L1165.6 241.7 L1167.6 241.8 L1169.6 242.0 L1171.6 242.3 L1173.6 242.6 L1175.6 242.9 L1177.6 243.3 L1179.6 243.6 L1181.6 243.8 L1183.6 244.0 L1185.6 244.2 L1187.6 244.3 L1189.6 244.3 L1191.6 244.2 L1193.6 244.0 L1195.6 243.7 L1197.6 243.4 L1199.6 243.1 L1201.6 242.7 L1203.6 242.2 L1205.6 241.8 L1207.6 241.3 L1209.6 240.8 L1211.6 240.2 L1213.6 239.4 L1215.6 238.4 L1217.6 237.3 L1219.6 236.5 L1221.6 236.0 L1223.6 235.6 L1225.6 235.4 L1227.6 235.2 L1229.6 235.1 L1231.6 235.0 L1233.6 235.4 L1235.6 236.1 L1237.6 237.2 L1239.6 238.4 L1241.6 239.7 L1243.6 241.4 L1245.6 243.7 L1247.6 246.4 L1249.6 249.5 L1251.6 252.8 L1253.6 256.3 L1255.6 260.1 L1257.6 265.1 L1259.6 270.8 L1261.6 276.7 L1263.6 282.3 L1265.6 287.1 L1267.6 290.7 L1269.6 293.2 L1271.6 295.4 L1273.6 297.3 L1275.6 299.0 L1277.6 300.6 L1279.6 302.0 L1281.6 303.4 L1283.6 304.6 L1285.6 305.8 L1287.6 306.9 L1289.6 308.0 L1291.6 309.1 L1293.6 310.2 L1295.6 311.2 L1297.6 312.2 L1299.6 313.1 L1301.6 314.1 L1303.6 315.0 L1305.6 316.1 L1307.6 317.2 L1309.6 318.8 L1311.6 320.6 L1313.6 322.6 L1315.6 324.7 L1317.6 326.5 L1319.6 328.1 L1321.6 329.1 L1323.6 329.5 L1325.6 329.0 L1327.6 327.5 L1329.6 325.3 L1331.6 322.6 L1333.6 319.9 L1335.6 317.5 L1337.6 315.6 L1339.6 314.5 L1341.6 314.2 L1343.6 314.1 L1345.6 313.9 L1347.6 313.8 L1349.6 313.7 L1351.6 313.7 L1353.6 313.7 L1355.6 313.8 L1357.6 314.1 L1359.6 314.4 L1361.6 314.9 L1363.6 315.4 L1365.6 316.2 L1367.6 317.3 L1369.6 318.6 L1371.6 320.1 L1373.6 321.5 L1375.6 322.7 L1377.6 323.7 L1379.6 324.2 L1381.6 324.4 L1383.6 324.6 L1385.6 324.7 L1387.6 324.7 L1389.6 324.8 L1391.6 324.9 L1393.6 325.0 L1395.6 325.2 L1397.6 325.4 L1399.6 326.0 L1401.6 326.9 L1403.6 327.9 L1405.6 329.2 L1407.6 330.5 L1409.6 331.8 L1411.6 333.3 L1413.6 335.1 L1415.6 337.1 L1417.6 339.3 L1419.6 341.8 L1421.6 344.9 L1423.6 348.7 L1425.6 352.8 L1427.6 356.7 L1429.6 360.1 L1431.6 363.0 L1433.6 365.6 L1435.6 368.1 L1437.6 370.7 L1439.6 373.5 L1441.6 376.4 L1443.6 379.3 L1445.6 382.5 L1447.6 386.3 L1449.6 390.8 L1451.6 397.7 L1453.6 406.1 L1455.6 414.0 L1457.6 419.8 L1459.6 424.1 L1461.6 428.0 L1463.6 431.3 L1465.6 434.0 L1467.6 436.0 L1469.6 437.7 L1471.6 439.2 L1473.6 440.2 L1475.6 440.6 L1477.6 439.9 L1479.6 438.4 L1481.6 436.3 L1483.6 434.1 L1485.6 432.1 L1487.6 430.3 L1489.6 428.3 L1491.6 426.3 L1493.6 424.2 L1495.6 422.2 L1497.6 420.1 L1499.6 418.1 L1501.6 415.6 L1503.6 412.9 L1505.6 410.5 L1507.6 408.6 L1509.6 407.6 L1511.6 407.8 L1513.6 408.7 L1515.6 410.1 L1517.6 411.5 L1519.6 412.6 L1521.6 413.2 L1523.6 413.2 L1525.6 413.1 L1527.6 413.1 L1529.6 413.0 L1531.6 412.9 L1533.6 412.8 L1535.6 412.7 L1537.6 412.6 L1539.6 412.1 L1541.6 410.6 L1543.6 408.3 L1545.6 405.7 L1547.6 403.2 L1549.6 400.9 L1551.6 398.1 L1553.6 395.9 L1555.6 395.2 L1557.6 394.9 L1559.6 394.8 L1561.6 394.6 L1563.6 394.2 L1565.6 392.6 L1567.6 389.8 L1569.6 386.3 L1571.6 382.2 L1573.6 378.2 L1575.6 374.3 L1577.6 370.1 L1579.6 365.5 L1581.6 360.6 L1583.6 355.5 L1585.6 350.1 L1587.6 343.9 L1589.6 337.2 L1591.6 330.8 L1593.6 325.3 L1595.6 320.9 L1597.6 317.1 L1599.6 313.6 L1601.6 310.5 L1603.6 307.7 L1605.6 305.3 L1607.6 303.2 L1609.6 301.2 L1611.6 299.4 L1613.6 297.5 L1615.6 295.5 L1617.6 293.6 L1619.6 291.7 L1621.6 289.8 L1623.6 287.8 L1625.6 285.7 L1627.6 283.5 L1629.6 281.2 L1631.6 278.7 L1633.6 276.0 L1635.6 273.2 L1637.6 270.1 L1639.6 266.4 L1641.6 262.0 L1643.6 257.5 L1645.6 253.4 L1647.6 250.2 L1649.6 247.4 L1651.6 244.8 L1653.6 242.6 L1655.6 240.9 L1657.6 239.9 L1659.6 239.2 L1661.6 238.6 L1663.6 238.0 L1665.6 237.6 L1667.6 237.2 L1669.6 236.9 L1671.6 236.7 L1673.6 236.7 L1675.6 236.7 L1677.6 236.8 L1679.6 236.9 L1681.6 237.1 L1683.6 237.3 L1685.6 237.7 L1687.6 238.3 L1689.6 239.3 L1691.6 240.4 L1693.6 241.6 L1695.6 243.0 L1697.6 244.4 L1699.6 246.0 L1701.6 248.0 L1703.6 250.4 L1705.6 253.3 L1707.6 257.4 L1709.6 265.8 L1711.6 275.1 L1713.6 280.5 L1715.6 282.6 L1717.6 284.5 L1719.6 285.8 L1721.6 286.7 L1723.6 286.9 L1725.6 286.9 L1727.6 286.8 L1729.6 286.7 L1731.6 286.6 L1733.6 286.5 L1735.6 286.4 L1737.6 286.3 L1739.6 286.2 L1741.6 286.4 L1743.6 287.1 L1745.6 288.1 L1747.6 289.2 L1749.6 290.3 L1751.6 291.2 L1753.6 291.8 L1755.6 291.7 L1757.6 290.4 L1759.6 288.0 L1761.6 284.8 L1763.6 281.4 L1765.6 278.1 L1767.6 275.0 L1769.6 271.6 L1771.6 267.9 L1773.6 264.4 L1775.6 261.3 L1777.6 258.8 L1779.6 256.6 L1781.6 254.5 L1783.6 252.7 L1785.6 251.0 L1787.6 249.6 L1789.6 248.3 L1791.6 246.9 L1793.6 245.4 L1795.6 243.9 L1797.6 242.3 L1799.6 240.8 L1801.6 239.3 L1803.6 237.9 L1805.6 236.4 L1807.6 234.4 L1809.6 231.0 L1811.6 225.0 L1813.6 218.0 L1815.6 211.4 L1817.6 204.5 L1819.6 197.5 L1821.6 191.8 L1823.6 187.8 L1825.6 184.2 L1827.6 181.2 L1829.6 179.1 L1831.6 177.9 L1833.6 176.8 L1835.6 176.0 L1837.6 175.4 L1839.6 175.2 L1841.6 175.5 L1843.6 176.3 L1845.6 177.4 L1847.6 178.5 L1849.6 179.7 L1851.6 181.1 L1853.6 182.6 L1855.6 184.2 L1857.6 185.6 L1859.6 187.1 L1861.6 188.6 L1863.6 189.9 L1865.6 190.5 L1867.6 190.3 L1869.6 189.5 L1871.6 188.7 L1873.6 188.1 L1875.6 187.4 L1877.6 186.7 L1879.6 186.2 L1881.6 186.2 L1883.6 186.7 L1885.6 187.7 L1887.6 188.8 L1889.6 190.0 L1891.6 191.2 L1893.6 192.7 L1895.6 194.1 L1897.6 195.3 L1899.6 196.3 L1901.6 197.2 L1903.6 198.0 L1905.6 198.8 L1907.6 199.5 L1909.6 200.3 L1911.6 201.0 L1913.6 201.5 L1915.6 201.8 L1917.6 202.1 L1919.6 202.4 L1921.6 202.5 L1923.6 202.6 L1925.6 202.5 L1927.6 202.2 L1929.6 201.9 L1931.6 201.5 L1933.6 201.0 L1935.6 200.3 L1937.6 199.6 L1939.6 199.3 L1941.6 199.3 L1943.6 199.3 L1945.6 199.3 L1947.6 199.3 L1949.6 199.3 L1951.6 199.3 L1953.6 199.3 L1955.6 199.3 L1957.6 199.3 L1959.6 199.3 L1961.6 199.3 L1963.6 199.3 L1965.6 199.6 L1967.6 200.3 L1969.6 201.3 L1971.6 203.1 L1973.6 206.7 L1975.6 210.4 L1977.6 213.8 L1979.6 217.2 L1981.6 220.6 L1983.6 223.8 L1985.6 226.8 L1987.6 229.9 L1989.6 232.5 L1991.6 234.2 L1993.6 235.0 L1995.6 235.4 L1997.6 235.8 L1999.6 236.2 L2001.6 236.7 L2003.6 237.2 L2005.6 237.7 L2007.6 238.1 L2009.6 238.4 L2011.6 238.7 L2013.6 238.9 L2015.6 239.1 L2017.6 238.9 L2019.6 237.7 L2021.6 236.2 L2023.6 235.5 L2025.6 235.9 L2027.6 236.9 L2029.6 238.0 L2031.6 239.6 L2033.6 241.5 L2033.9 241.8" fill="none" stroke="#8c8cf5" stroke-opacity="0.7" stroke-width="1.5" stroke-linejoin="round"/>
<path d="M21.6 653.3 L23.6 653.3 L25.6 653.3 L27.6 653.2 L29.6 653.1 L31.6 653.0 L33.6 652.9 L35.6 652.7 L37.6 652.5 L39.6 652.4 L41.6 652.2 L43.6 652.0 L45.6 651.7 L47.6 651.5 L49.6 651.3 L51.6 651.1 L53.6 650.8 L55.6 650.4 L57.6 649.9 L59.6 649.3 L61.6 648.8 L63.6 648.3 L65.6 647.9 L67.6 647.7 L69.6 647.7 L71.6 647.8 L73.6 648.0 L75.6 648.2 L77.6 648.4 L79.6 648.7 L81.6 648.9 L83.6 649.1 L85.6 649.3 L87.6 649.4 L89.6 648.8 L91.6 646.5 L93.6 644.1 L95.6 643.4 L97.6 643.5 L99.6 643.7 L101.6 643.9 L103.6 644.2 L105.6 644.6 L107.6 644.9 L109.6 645.2 L111.6 645.5 L113.6 645.8 L115.6 646.0 L117.6 646.1 L119.6 645.9 L121.6 645.3 L123.6 644.2 L125.6 642.9 L127.6 641.3 L129.6 639.5 L131.6 637.7 L133.6 636.0 L135.6 634.3 L137.6 632.9 L139.6 631.8 L141.6 631.1 L143.6 630.6 L145.6 630.2 L147.6 629.8 L149.6 629.5 L151.6 629.2 L153.6 629.0 L155.6 628.7 L157.6 628.4 L159.6 628.0 L161.6 627.6 L163.6 627.1 L165.6 626.4 L167.6 625.2 L169.6 623.7 L171.6 621.9 L173.6 620.2 L175.6 618.5 L177.6 617.3 L179.6 616.5 L181.6 616.4 L183.6 616.9 L185.6 618.1 L187.6 619.7 L189.6 621.8 L191.6 626.3 L193.6 633.4 L195.6 641.7 L197.6 650.0 L199.6 659.2 L201.6 669.6 L203.6 680.4 L205.6 690.8 L207.6 700.0 L209.6 708.5 L211.6 716.7 L213.6 724.3 L215.6 730.9 L217.6 736.1 L219.6 740.3 L221.6 744.0 L223.6 747.3 L225.6 750.0 L227.6 752.3 L229.6 754.0 L231.6 755.5 L233.6 756.8 L235.6 758.0 L237.6 759.3 L239.6 761.0 L241.6 763.0 L243.6 765.6 L245.6 768.5 L247.6 771.7 L249.6 775.0 L251.6 778.3 L253.6 781.5 L255.6 784.7 L257.6 788.0 L259.6 791.3 L261.6 794.7 L263.6 798.0 L265.6 801.3 L267.6 804.4 L269.6 807.3 L271.6 810.0 L273.6 812.6 L275.6 815.1 L277.6 817.6 L279.6 819.9 L281.6 822.2 L283.6 824.5 L285.6 826.6 L287.6 828.7 L289.6 830.8 L291.6 832.8 L293.6 835.1 L295.6 837.4 L297.6 839.7 L299.6 841.9 L301.6 843.8 L303.6 845.4 L305.6 846.5 L307.6 847.0 L309.6 846.9 L311.6 846.5 L313.6 845.9 L315.6 845.0 L317.6 843.8 L319.6 842.6 L321.6 841.2 L323.6 839.8 L325.6 838.3 L327.6 836.7 L329.6 834.5 L331.6 831.8 L333.6 828.8 L335.6 825.5 L337.6 822.3 L339.6 819.1 L341.6 816.2 L343.6 813.7 L345.6 811.8 L347.6 810.4 L349.6 809.2 L351.6 808.1 L353.6 807.1 L355.6 806.3 L357.6 805.4 L359.6 804.6 L361.6 803.9 L363.6 803.3 L365.6 802.6 L367.6 802.0 L369.6 801.1 L371.6 799.9 L373.6 798.7 L375.6 798.1 L377.6 798.7 L379.6 800.4 L381.6 802.8 L383.6 805.7 L385.6 808.6 L387.6 811.4 L389.6 813.8 L391.6 816.0 L393.6 818.2 L395.6 820.4 L397.6 822.6 L399.6 824.8 L401.6 826.9 L403.6 829.1 L405.6 831.2 L407.6 833.3 L409.6 835.4 L411.6 837.4 L413.6 839.5 L415.6 841.5 L417.6 843.5 L419.6 845.4 L421.6 847.4 L423.6 849.4 L425.6 851.4 L427.6 853.4 L429.6 855.4 L431.6 857.4 L433.6 859.4 L435.6 861.4 L437.6 863.4 L439.6 865.4 L441.6 867.4 L443.6 869.4 L445.6 871.4 L447.6 873.5 L449.6 875.6 L451.6 877.7 L453.6 879.6 L455.6 881.2 L457.6 882.8 L459.6 884.3 L461.6 885.9 L463.6 887.4 L465.6 888.9 L467.6 890.2 L469.6 891.4 L471.6 892.4 L473.6 893.2 L475.6 893.7 L477.6 893.9 L479.6 893.9 L481.6 893.8 L483.6 893.6 L485.6 893.4 L487.6 893.0 L489.6 892.6 L491.6 892.2 L493.6 891.7 L495.6 891.1 L497.6 890.6 L499.6 890.0 L501.6 889.3 L503.6 888.7 L505.6 888.1 L507.6 887.4 L509.6 886.7 L511.6 885.9 L513.6 885.0 L515.6 884.0 L517.6 882.9 L519.6 881.8 L521.6 880.7 L523.6 879.5 L525.6 878.3 L527.6 876.6 L529.6 874.9 L531.6 873.7 L533.6 873.5 L535.6 873.8 L537.6 874.4 L539.6 875.2 L541.6 876.1 L543.6 877.1 L545.6 878.2 L547.6 879.7 L549.6 881.4 L551.6 883.1 L553.6 884.9 L555.6 886.3 L557.6 887.4 L559.6 888.3 L561.6 889.1 L563.6 889.9 L565.6 890.7 L567.6 891.4 L569.6 892.1 L571.6 892.7 L573.6 893.1 L575.6 893.5 L577.6 893.8 L579.6 893.9 L581.6 893.9 L583.6 893.4 L585.6 892.6 L587.6 891.4 L589.6 889.8 L591.6 888.0 L593.6 886.0 L595.6 883.8 L597.6 881.5 L599.6 879.1 L601.6 876.3 L603.6 872.4 L605.6 867.6 L607.6 862.2 L609.6 856.9 L611.6 851.9 L613.6 847.7 L615.6 844.2 L617.6 841.0 L619.6 838.0 L621.6 835.2 L623.6 832.7 L625.6 830.5 L627.6 828.5 L629.6 826.7 L631.6 824.9 L633.6 823.3 L635.6 821.6 L637.6 820.0 L639.6 818.2 L641.6 816.4 L643.6 814.4 L645.6 812.3 L647.6 810.1 L649.6 807.9 L651.6 805.6 L653.6 803.1 L655.6 800.6 L657.6 798.0 L659.6 795.2 L661.6 792.3 L663.6 789.1 L665.6 785.7 L667.6 782.1 L669.6 778.4 L671.6 774.6 L673.6 770.7 L675.6 766.7 L677.6 762.6 L679.6 758.3 L681.6 753.8 L683.6 749.0 L685.6 743.9 L687.6 738.2 L689.6 731.3 L691.6 723.7 L693.6 715.8 L695.6 708.2 L697.6 701.3 L699.6 695.5 L701.6 690.6 L703.6 686.1 L705.6 682.0 L707.6 678.5 L709.6 675.7 L711.6 673.6 L713.6 672.0 L715.6 670.3 L717.6 668.2 L719.6 665.5 L721.6 662.5 L723.6 659.4 L725.6 656.5 L727.6 654.1 L729.6 652.4 L731.6 651.2 L733.6 650.1 L735.6 649.2 L737.6 648.4 L739.6 647.5 L741.6 646.5 L743.6 645.4 L745.6 644.3 L747.6 643.2 L749.6 642.0 L751.6 640.7 L753.6 639.3 L755.6 637.8 L757.6 636.3 L759.6 634.6 L761.6 632.7 L763.6 630.7 L765.6 628.5 L767.6 626.1 L769.6 623.4 L771.6 619.9 L773.6 615.7 L775.6 611.2 L777.6 606.6 L779.6 602.4 L781.6 598.8 L783.6 595.6 L785.6 592.5 L787.6 589.5 L789.6 586.7 L791.6 584.4 L793.6 582.6 L795.6 581.6 L797.6 580.9 L799.6 580.4 L801.6 579.9 L803.6 579.6 L805.6 579.1 L807.6 578.7 L809.6 578.0 L811.6 577.3 L813.6 576.5 L815.6 575.6 L817.6 574.8 L819.6 573.9 L821.6 573.0 L823.6 572.3 L825.6 571.6 L827.6 570.8 L829.6 570.1 L831.6 569.4 L833.6 568.9 L835.6 568.6 L837.6 568.7 L839.6 569.4 L841.6 570.6 L843.6 571.8 L845.6 572.9 L847.6 573.9 L849.6 575.0 L851.6 576.2 L853.6 577.6 L855.6 579.4 L857.6 582.2 L859.6 585.7 L861.6 589.6 L863.6 593.3 L865.6 596.7 L867.6 600.2 L869.6 603.6 L871.6 607.0 L873.6 610.2 L875.6 613.1 L877.6 615.9 L879.6 618.5 L881.6 621.1 L883.6 623.7 L885.6 626.3 L887.6 628.9 L889.6 631.5 L891.6 634.1 L893.6 636.9 L895.6 640.0 L897.6 643.5 L899.6 647.1 L901.6 650.6 L903.6 653.6 L905.6 656.2 L907.6 658.5 L909.6 660.7 L911.6 662.6 L913.6 664.1 L915.6 665.2 L917.6 666.3 L919.6 667.3 L921.6 668.1 L923.6 668.8 L925.6 669.2 L927.6 669.3 L929.6 669.1 L931.6 668.5 L933.6 667.8 L935.6 667.1 L937.6 666.5 L939.6 666.1 L941.6 666.1 L943.6 666.5 L945.6 667.0 L947.6 667.5 L949.6 667.6 L951.6 667.6 L953.6 667.5 L955.6 667.3 L957.6 667.2 L959.6 666.6 L961.6 665.8 L963.6 665.5 L965.6 666.2 L967.6 667.6 L969.6 669.3 L971.6 671.2 L973.6 673.6 L975.6 676.0 L977.6 678.0 L979.6 679.5 L981.6 680.9 L983.6 682.5 L985.6 684.4 L987.6 686.7 L989.6 689.1 L991.6 691.3 L993.6 693.4 L995.6 694.8 L997.6 696.0 L999.6 697.0 L1001.6 697.9 L1003.6 698.6 L1005.6 699.3 L1007.6 700.0 L1009.6 700.5 L1011.6 700.8 L1013.6 700.8 L1015.6 700.7 L1017.6 700.6 L1019.6 700.3 L1021.6 698.6 L1023.6 696.0 L1025.6 692.5 L1027.6 688.9 L1029.6 685.5 L1031.6 682.0 L1033.6 678.7 L1035.6 675.7 L1037.6 672.7 L1039.6 670.0 L1041.6 667.5 L1043.6 664.6 L1045.6 660.5 L1047.6 654.9 L1049.6 647.1 L1051.6 637.4 L1053.6 628.8 L1055.6 621.6 L1057.6 615.0 L1059.6 608.8 L1061.6 602.7 L1063.6 596.6 L1065.6 590.3 L1067.6 583.4 L1069.6 576.3 L1071.6 569.0 L1073.6 561.8 L1075.6 554.6 L1077.6 547.8 L1079.6 541.4 L1081.6 535.4 L1083.6 529.5 L1085.6 524.0 L1087.6 518.8 L1089.6 514.0 L1091.6 509.5 L1093.6 505.3 L1095.6 501.3 L1097.6 497.7 L1099.6 494.5 L1101.6 491.8 L1103.6 489.4 L1105.6 487.1 L1107.6 484.3 L1109.6 480.9 L1111.6 476.1 L1113.6 470.6 L1115.6 464.7 L1117.6 458.9 L1119.6 453.8 L1121.6 448.6 L1123.6 443.6 L1125.6 438.8 L1127.6 434.6 L1129.6 431.2 L1131.6 428.1 L1133.6 425.3 L1135.6 422.7 L1137.6 420.3 L1139.6 418.3 L1141.6 416.4 L1143.6 414.8 L1145.6 413.4 L1147.6 412.1 L1149.6 410.9 L1151.6 409.8 L1153.6 408.7 L1155.6 407.6 L1157.6 406.4 L1159.6 405.0 L1161.6 403.9 L1163.6 403.1 L1165.6 402.9 L1167.6 403.0 L1169.6 403.1 L1171.6 403.3 L1173.6 403.6 L1175.6 403.8 L1177.6 404.1 L1179.6 404.4 L1181.6 404.6 L1183.6 404.8 L1185.6 405.0 L1187.6 405.2 L1189.6 405.4 L1191.6 405.7 L1193.6 405.9 L1195.6 406.0 L1197.6 406.2 L1199.6 406.3 L1201.6 406.4 L1203.6 406.5 L1205.6 406.5 L1207.6 406.6 L1209.6 406.7 L1211.6 406.9 L1213.6 408.0 L1215.6 410.0 L1217.6 412.4 L1219.6 415.6 L1221.6 420.1 L1223.6 425.5 L1225.6 430.8 L1227.6 435.5 L1229.6 439.4 L1231.6 443.2 L1233.6 446.8 L1235.6 449.9 L1237.6 452.3 L1239.6 454.2 L1241.6 456.1 L1243.6 457.6 L1245.6 458.7 L1247.6 459.1 L1249.6 458.8 L1251.6 458.0 L1253.6 456.9 L1255.6 455.5 L1257.6 454.2 L1259.6 452.4 L1261.6 449.9 L1263.6 447.4 L1265.6 445.4 L1267.6 444.2 L1269.6 443.7 L1271.6 443.2 L1273.6 442.9 L1275.6 442.7 L1277.6 442.6 L1279.6 442.8 L1281.6 443.2 L1283.6 443.9 L1285.6 444.7 L1287.6 445.5 L1289.6 446.3 L1291.6 447.0 L1293.6 447.5 L1295.6 447.8 L1297.6 448.0 L1299.6 448.2 L1301.6 448.4 L1303.6 448.6 L1305.6 448.9 L1307.6 449.3 L1309.6 449.8 L1311.6 450.4 L1313.6 451.3 L1315.6 452.3 L1317.6 453.6 L1319.6 455.1 L1321.6 457.5 L1323.6 462.4 L1325.6 468.4 L1327.6 473.8 L1329.6 479.1 L1331.6 484.3 L1333.6 488.8 L1335.6 492.6 L1337.6 495.9 L1339.6 498.9 L1341.6 502.1 L1343.6 505.5 L1345.6 509.3 L1347.6 513.2 L1349.6 517.3 L1351.6 521.5 L1353.6 525.5 L1355.6 529.6 L1357.6 533.7 L1359.6 537.8 L1361.6 541.7 L1363.6 545.5 L1365.6 549.2 L1367.6 553.1 L1369.6 556.6 L1371.6 559.7 L1373.6 561.9 L1375.6 563.5 L1377.6 564.9 L1379.6 566.1 L1381.6 567.2 L1383.6 568.2 L1385.6 569.3 L1387.6 570.5 L1389.6 571.9 L1391.6 573.3 L1393.6 574.6 L1395.6 575.8 L1397.6 576.8 L1399.6 577.4 L1401.6 577.8 L1403.6 578.1 L1405.6 578.4 L1407.6 578.6 L1409.6 578.7 L1411.6 578.8 L1413.6 578.5 L1415.6 577.9 L1417.6 577.2 L1419.6 576.4 L1421.6 575.4 L1423.6 573.9 L1425.6 572.3 L1427.6 570.9 L1429.6 569.8 L1431.6 569.0 L1433.6 568.2 L1435.6 567.5 L1437.6 566.8 L1439.6 566.2 L1441.6 565.7 L1443.6 565.3 L1445.6 564.9 L1447.6 564.7 L1449.6 564.4 L1451.6 563.1 L1453.6 561.0 L1455.6 558.5 L1457.6 556.0 L1459.6 554.0 L1461.6 552.0 L1463.6 550.0 L1465.6 548.1 L1467.6 546.8 L1469.6 546.2 L1471.6 545.8 L1473.6 545.6 L1475.6 545.4 L1477.6 545.2 L1479.6 545.0 L1481.6 544.8 L1483.6 544.5 L1485.6 544.2 L1487.6 543.9 L1489.6 543.5 L1491.6 543.3 L1493.6 543.1 L1495.6 543.1 L1497.6 543.6 L1499.6 544.6 L1501.6 545.9 L1503.6 547.0 L1505.6 547.8 L1507.6 547.9 L1509.6 546.3 L1511.6 543.5 L1513.6 540.4 L1515.6 537.5 L1517.6 534.0 L1519.6 530.0 L1521.6 526.3 L1523.6 523.9 L1525.6 523.2 L1527.6 523.5 L1529.6 524.0 L1531.6 524.8 L1533.6 525.8 L1535.6 527.0 L1537.6 530.1 L1539.6 534.8 L1541.6 540.1 L1543.6 545.3 L1545.6 549.4 L1547.6 553.7 L1549.6 558.1 L1551.6 561.8 L1553.6 564.1 L1555.6 564.5 L1557.6 563.9 L1559.6 563.0 L1561.6 562.0 L1563.6 561.4 L1565.6 561.4 L1567.6 562.6 L1569.6 564.8 L1571.6 567.4 L1573.6 570.0 L1575.6 572.2 L1577.6 574.6 L1579.6 577.1 L1581.6 579.6 L1583.6 581.8 L1585.6 583.7 L1587.6 585.8 L1589.6 587.7 L1591.6 589.3 L1593.6 590.2 L1595.6 590.3 L1597.6 590.2 L1599.6 590.0 L1601.6 589.8 L1603.6 589.5 L1605.6 589.0 L1607.6 588.3 L1609.6 587.2 L1611.6 586.0 L1613.6 584.8 L1615.6 583.5 L1617.6 581.9 L1619.6 580.1 L1621.6 578.2 L1623.6 576.6 L1625.6 575.3 L1627.6 574.4 L1629.6 573.9 L1631.6 573.5 L1633.6 573.1 L1635.6 572.9 L1637.6 572.8 L1639.6 573.0 L1641.6 573.6 L1643.6 574.3 L1645.6 575.0 L1647.6 575.7 L1649.6 576.0 L1651.6 576.1 L1653.6 575.9 L1655.6 575.7 L1657.6 575.3 L1659.6 574.9 L1661.6 574.4 L1663.6 573.9 L1665.6 573.3 L1667.6 572.6 L1669.6 571.8 L1671.6 570.9 L1673.6 569.9 L1675.6 568.8 L1677.6 567.5 L1679.6 566.0 L1681.6 564.1 L1683.6 562.0 L1685.6 559.7 L1687.6 557.2 L1689.6 554.4 L1691.6 551.2 L1693.6 547.7 L1695.6 544.0 L1697.6 540.1 L1699.6 536.3 L1701.6 532.0 L1703.6 526.8 L1705.6 519.9 L1707.6 506.7 L1709.6 491.8 L1711.6 480.6 L1713.6 470.9 L1715.6 464.0 L1717.6 458.7 L1719.6 454.3 L1721.6 450.9 L1723.6 448.7 L1725.6 447.1 L1727.6 445.8 L1729.6 444.7 L1731.6 443.8 L1733.6 443.0 L1735.6 442.5 L1737.6 442.0 L1739.6 441.7 L1741.6 441.3 L1743.6 441.0 L1745.6 440.8 L1747.6 440.7 L1749.6 440.6 L1751.6 440.6 L1753.6 440.7 L1755.6 440.8 L1757.6 441.0 L1759.6 441.2 L1761.6 441.4 L1763.6 441.7 L1765.6 442.3 L1767.6 443.3 L1769.6 444.5 L1771.6 445.7 L1773.6 446.6 L1775.6 447.1 L1777.6 447.3 L1779.6 447.3 L1781.6 447.4 L1783.6 447.4 L1785.6 447.4 L1787.6 447.5 L1789.6 447.5 L1791.6 447.6 L1793.6 447.7 L1795.6 447.9 L1797.6 448.0 L1799.6 448.3 L1801.6 448.7 L1803.6 449.7 L1805.6 451.0 L1807.6 452.5 L1809.6 454.3 L1811.6 456.8 L1813.6 459.6 L1815.6 461.9 L1817.6 463.4 L1819.6 464.8 L1821.6 465.9 L1823.6 466.6 L1825.6 466.6 L1827.6 465.8 L1829.6 464.4 L1831.6 462.6 L1833.6 460.4 L1835.6 456.7 L1837.6 451.8 L1839.6 446.6 L1841.6 441.3 L1843.6 435.5 L1845.6 429.7 L1847.6 424.5 L1849.6 419.6 L1851.6 415.0 L1853.6 410.5 L1855.6 406.2 L1857.6 402.0 L1859.6 397.9 L1861.6 394.1 L1863.6 390.4 L1865.6 386.6 L1867.6 383.0 L1869.6 379.8 L1871.6 377.3 L1873.6 375.3 L1875.6 373.7 L1877.6 372.2 L1879.6 370.6 L1881.6 368.7 L1883.6 366.5 L1885.6 364.2 L1887.6 361.7 L1889.6 359.1 L1891.6 356.2 L1893.6 353.0 L1895.6 349.9 L1897.6 347.1 L1899.6 344.6 L1901.6 342.2 L1903.6 340.0 L1905.6 337.8 L1907.6 335.6 L1909.6 333.3 L1911.6 331.3 L1913.6 329.7 L1915.6 328.6 L1917.6 327.6 L1919.6 326.9 L1921.6 327.0 L1923.6 327.9 L1925.6 329.5 L1927.6 331.3 L1929.6 332.9 L1931.6 334.9 L1933.6 337.1 L1935.6 338.7 L1937.6 339.2 L1939.6 339.2 L1941.6 339.2 L1943.6 339.2 L1945.6 339.2 L1947.6 338.7 L1949.6 337.8 L1951.6 336.8 L1953.6 336.4 L1955.6 336.9 L1957.6 338.0 L1959.6 339.3 L1961.6 340.4 L1963.6 341.4 L1965.6 342.5 L1967.6 343.2 L1969.6 343.2 L1971.6 342.1 L1973.6 340.5 L1975.6 338.9 L1977.6 337.9 L1979.6 337.9 L1981.6 338.1 L1983.6 338.5 L1985.6 338.9 L1987.6 339.6 L1989.6 340.8 L1991.6 342.3 L1993.6 343.9 L1995.6 345.2 L1997.6 346.6 L1999.6 347.9 L2001.6 349.2 L2003.6 350.6 L2005.6 351.8 L2007.6 353.1 L2009.6 354.4 L2011.6 356.0 L2013.6 357.8 L2015.6 359.8 L2017.6 361.9 L2019.6 364.1 L2021.6 366.5 L2023.6 369.1 L2025.6 371.4 L2027.6 373.3 L2029.6 374.9 L2031.6 376.3 L2033.6 377.4 L2033.9 377.6" fill="none" stroke="#8c8cf5" stroke-opacity="0.7" stroke-width="1.5" stroke-linejoin="round"/>
<path d="M21.6 539.8 L23.6 539.8 L25.6 539.8 L27.6 539.9 L29.6 539.9 L31.6 540.0 L33.6 540.0 L35.6 540.0 L37.6 540.1 L39.6 540.1 L41.6 540.2 L43.6 540.2 L45.6 540.3 L47.6 540.3 L49.6 540.4 L51.6 540.4 L53.6 540.5 L55.6 540.5 L57.6 540.6 L59.6 540.6 L61.6 540.7 L63.6 540.7 L65.6 540.7 L67.6 540.8 L69.6 540.8 L71.6 540.9 L73.6 540.9 L75.6 540.9 L77.6 541.0 L79.6 541.0 L81.6 541.0 L83.6 541.1 L85.6 541.1 L87.6 541.1 L89.6 541.2 L91.6 541.2 L93.6 541.2 L95.6 541.2 L97.6 541.3 L99.6 541.3 L101.6 541.3 L103.6 541.3 L105.6 541.4 L107.6 541.4 L109.6 541.4 L111.6 541.4 L113.6 541.5 L115.6 541.5 L117.6 541.5 L119.6 541.6 L121.6 541.6 L123.6 541.6 L125.6 541.7 L127.6 541.7 L129.6 541.8 L131.6 541.8 L133.6 541.9 L135.6 541.9 L137.6 542.0 L139.6 542.0 L141.6 542.1 L143.6 542.2 L145.6 542.3 L147.6 542.3 L149.6 542.4 L151.6 542.5 L153.6 542.6 L155.6 542.8 L157.6 542.9 L159.6 543.0 L161.6 543.1 L163.6 543.3 L165.6 543.4 L167.6 543.6 L169.6 543.7 L171.6 543.9 L173.6 544.1 L175.6 544.3 L177.6 544.4 L179.6 544.6 L181.6 544.9 L183.6 545.1 L185.6 545.3 L187.6 545.5 L189.6 545.8 L191.6 546.0 L193.6 546.3 L195.6 546.6 L197.6 546.9 L199.6 547.1 L201.6 547.5 L203.6 547.8 L205.6 548.1 L207.6 548.4 L209.6 548.7 L211.6 549.1 L213.6 549.4 L215.6 549.8 L217.6 550.1 L219.6 550.5 L221.6 550.8 L223.6 551.2 L225.6 551.5 L227.6 551.9 L229.6 552.2 L231.6 552.6 L233.6 552.9 L235.6 553.3 L237.6 553.6 L239.6 554.0 L241.6 554.3 L243.6 554.7 L245.6 555.0 L247.6 555.4 L249.6 555.7 L251.6 556.1 L253.6 556.5 L255.6 556.8 L257.6 557.2 L259.6 557.6 L261.6 558.0 L263.6 558.3 L265.6 558.7 L267.6 559.2 L269.6 559.6 L271.6 560.0 L273.6 560.4 L275.6 560.9 L277.6 561.3 L279.6 561.8 L281.6 562.2 L283.6 562.7 L285.6 563.2 L287.6 563.7 L289.6 564.2 L291.6 564.7 L293.6 565.2 L295.6 565.7 L297.6 566.2 L299.6 566.7 L301.6 567.2 L303.6 567.7 L305.6 568.2 L307.6 568.7 L309.6 569.2 L311.6 569.7 L313.6 570.2 L315.6 570.7 L317.6 571.2 L319.6 571.6 L321.6 572.1 L323.6 572.5 L325.6 573.0 L327.6 573.4 L329.6 573.8 L331.6 574.2 L333.6 574.6 L335.6 575.0 L337.6 575.4 L339.6 575.8 L341.6 576.2 L343.6 576.6 L345.6 577.0 L347.6 577.4 L349.6 577.8 L351.6 578.2 L353.6 578.6 L355.6 579.0 L357.6 579.4 L359.6 579.8 L361.6 580.3 L363.6 580.7 L365.6 581.2 L367.6 581.7 L369.6 582.2 L371.6 582.7 L373.6 583.2 L375.6 583.7 L377.6 584.2 L379.6 584.8 L381.6 585.4 L383.6 585.9 L385.6 586.5 L387.6 587.1 L389.6 587.7 L391.6 588.3 L393.6 588.9 L395.6 589.5 L397.6 590.1 L399.6 590.7 L401.6 591.3 L403.6 591.9 L405.6 592.5 L407.6 593.1 L409.6 593.7 L411.6 594.4 L413.6 595.0 L415.6 595.6 L417.6 596.2 L419.6 596.8 L421.6 597.4 L423.6 598.0 L425.6 598.6 L427.6 599.2 L429.6 599.8 L431.6 600.4 L433.6 601.0 L435.6 601.6 L437.6 602.2 L439.6 602.9 L441.6 603.5 L443.6 604.1 L445.6 604.7 L447.6 605.3 L449.6 605.9 L451.6 606.5 L453.6 607.0 L455.6 607.6 L457.6 608.2 L459.6 608.7 L461.6 609.3 L463.6 609.8 L465.6 610.3 L467.6 610.8 L469.6 611.3 L471.6 611.8 L473.6 612.3 L475.6 612.8 L477.6 613.2 L479.6 613.7 L481.6 614.1 L483.6 614.5 L485.6 614.9 L487.6 615.3 L489.6 615.7 L491.6 616.1 L493.6 616.5 L495.6 616.8 L497.6 617.2 L499.6 617.6 L501.6 617.9 L503.6 618.3 L505.6 618.6 L507.6 618.9 L509.6 619.3 L511.6 619.6 L513.6 619.9 L515.6 620.2 L517.6 620.5 L519.6 620.8 L521.6 621.1 L523.6 621.4 L525.6 621.6 L527.6 621.9 L529.6 622.1 L531.6 622.4 L533.6 622.6 L535.6 622.8 L537.6 623.1 L539.6 623.3 L541.6 623.4 L543.6 623.6 L545.6 623.8 L547.6 624.0 L549.6 624.1 L551.6 624.2 L553.6 624.4 L555.6 624.5 L557.6 624.6 L559.6 624.7 L561.6 624.8 L563.6 624.8 L565.6 624.9 L567.6 624.9 L569.6 624.9 L571.6 625.0 L573.6 625.0 L575.6 625.0 L577.6 625.0 L579.6 625.0 L581.6 624.9 L583.6 624.9 L585.6 624.9 L587.6 624.9 L589.6 624.8 L591.6 624.8 L593.6 624.7 L595.6 624.7 L597.6 624.6 L599.6 624.6 L601.6 624.5 L603.6 624.5 L605.6 624.4 L607.6 624.4 L609.6 624.3 L611.6 624.3 L613.6 624.2 L615.6 624.1 L617.6 624.1 L619.6 624.0 L621.6 623.9 L623.6 623.8 L625.6 623.7 L627.6 623.6 L629.6 623.5 L631.6 623.4 L633.6 623.3 L635.6 623.2 L637.6 623.0 L639.6 622.9 L641.6 622.7 L643.6 622.6 L645.6 622.4 L647.6 622.2 L649.6 622.0 L651.6 621.9 L653.6 621.7 L655.6 621.4 L657.6 621.2 L659.6 621.0 L661.6 620.8 L663.6 620.6 L665.6 620.3 L667.6 620.1 L669.6 619.9 L671.6 619.7 L673.6 619.4 L675.6 619.2 L677.6 619.0 L679.6 618.7 L681.6 618.5 L683.6 618.2 L685.6 618.0 L687.6 617.8 L689.6 617.5 L691.6 617.3 L693.6 617.1 L695.6 616.8 L697.6 616.6 L699.6 616.4 L701.6 616.2 L703.6 615.9 L705.6 615.7 L707.6 615.5 L709.6 615.3 L711.6 615.0 L713.6 614.8 L715.6 614.6 L717.6 614.3 L719.6 614.1 L721.6 613.9 L723.6 613.6 L725.6 613.4 L727.6 613.1 L729.6 612.9 L731.6 612.6 L733.6 612.4 L735.6 612.1 L737.6 611.8 L739.6 611.5 L741.6 611.3 L743.6 611.0 L745.6 610.7 L747.6 610.4 L749.6 610.1 L751.6 609.8 L753.6 609.5 L755.6 609.2 L757.6 608.9 L759.6 608.6 L761.6 608.3 L763.6 608.0 L765.6 607.7 L767.6 607.4 L769.6 607.0 L771.6 606.7 L773.6 606.4 L775.6 606.1 L777.6 605.8 L779.6 605.5 L781.6 605.2 L783.6 604.9 L785.6 604.6 L787.6 604.3 L789.6 604.0 L791.6 603.7 L793.6 603.4 L795.6 603.1 L797.6 602.9 L799.6 602.6 L801.6 602.3 L803.6 602.0 L805.6 601.7 L807.6 601.4 L809.6 601.2 L811.6 600.9 L813.6 600.6 L815.6 600.4 L817.6 600.2 L819.6 599.9 L821.6 599.7 L823.6 599.5 L825.6 599.3 L827.6 599.1 L829.6 599.0 L831.6 598.8 L833.6 598.7 L835.6 598.6 L837.6 598.5 L839.6 598.4 L841.6 598.3 L843.6 598.2 L845.6 598.1 L847.6 598.1 L849.6 598.0 L851.6 598.0 L853.6 597.9 L855.6 597.9 L857.6 597.8 L859.6 597.8 L861.6 597.8 L863.6 597.8 L865.6 597.8 L867.6 597.7 L869.6 597.7 L871.6 597.7 L873.6 597.7 L875.6 597.8 L877.6 597.8 L879.6 597.8 L881.6 597.8 L883.6 597.8 L885.6 597.8 L887.6 597.9 L889.6 597.9 L891.6 597.9 L893.6 597.9 L895.6 598.0 L897.6 598.0 L899.6 598.0 L901.6 598.0 L903.6 598.0 L905.6 597.9 L907.6 597.9 L909.6 597.9 L911.6 597.8 L913.6 597.7 L915.6 597.7 L917.6 597.6 L919.6 597.4 L921.6 597.3 L923.6 597.2 L925.6 597.0 L927.6 596.8 L929.6 596.6 L931.6 596.4 L933.6 596.2 L935.6 595.9 L937.6 595.7 L939.6 595.4 L941.6 595.1 L943.6 594.7 L945.6 594.4 L947.6 594.0 L949.6 593.7 L951.6 593.3 L953.6 592.9 L955.6 592.5 L957.6 592.1 L959.6 591.6 L961.6 591.2 L963.6 590.8 L965.6 590.3 L967.6 589.8 L969.6 589.4 L971.6 588.9 L973.6 588.4 L975.6 587.9 L977.6 587.4 L979.6 586.9 L981.6 586.4 L983.6 585.9 L985.6 585.4 L987.6 584.9 L989.6 584.4 L991.6 583.9 L993.6 583.4 L995.6 582.9 L997.6 582.4 L999.6 581.9 L1001.6 581.4 L1003.6 580.9 L1005.6 580.4 L1007.6 579.9 L1009.6 579.4 L1011.6 578.9 L1013.6 578.4 L1015.6 577.9 L1017.6 577.4 L1019.6 576.9 L1021.6 576.4 L1023.6 575.9 L1025.6 575.4 L1027.6 574.9 L1029.6 574.4 L1031.6 573.9 L1033.6 573.4 L1035.6 572.9 L1037.6 572.4 L1039.6 571.9 L1041.6 571.4 L1043.6 570.9 L1045.6 570.4 L1047.6 569.8 L1049.6 569.3 L1051.6 568.7 L1053.6 568.2 L1055.6 567.6 L1057.6 567.1 L1059.6 566.5 L1061.6 565.9 L1063.6 565.3 L1065.6 564.7 L1067.6 564.2 L1069.6 563.6 L1071.6 563.0 L1073.6 562.4 L1075.6 561.8 L1077.6 561.3 L1079.6 560.7 L1081.6 560.1 L1083.6 559.6 L1085.6 559.0 L1087.6 558.5 L1089.6 557.9 L1091.6 557.4 L1093.6 556.8 L1095.6 556.3 L1097.6 555.7 L1099.6 555.1 L1101.6 554.5 L1103.6 554.0 L1105.6 553.4 L1107.6 552.8 L1109.6 552.2 L1111.6 551.6 L1113.6 551.0 L1115.6 550.4 L1117.6 549.8 L1119.6 549.2 L1121.6 548.5 L1123.6 547.9 L1125.6 547.3 L1127.6 546.7 L1129.6 546.1 L1131.6 545.5 L1133.6 544.9 L1135.6 544.3 L1137.6 543.7 L1139.6 543.1 L1141.6 542.5 L1143.6 541.9 L1145.6 541.3 L1147.6 540.7 L1149.6 540.2 L1151.6 539.6 L1153.6 539.0 L1155.6 538.5 L1157.6 537.9 L1159.6 537.4 L1161.6 536.9 L1163.6 536.3 L1165.6 535.8 L1167.6 535.3 L1169.6 534.8 L1171.6 534.3 L1173.6 533.8 L1175.6 533.3 L1177.6 532.8 L1179.6 532.3 L1181.6 531.8 L1183.6 531.4 L1185.6 530.9 L1187.6 530.5 L1189.6 530.0 L1191.6 529.6 L1193.6 529.1 L1195.6 528.7 L1197.6 528.3 L1199.6 527.9 L1201.6 527.4 L1203.6 527.0 L1205.6 526.6 L1207.6 526.2 L1209.6 525.9 L1211.6 525.5 L1213.6 525.1 L1215.6 524.7 L1217.6 524.4 L1219.6 524.0 L1221.6 523.7 L1223.6 523.3 L1225.6 523.0 L1227.6 522.7 L1229.6 522.3 L1231.6 522.0 L1233.6 521.7 L1235.6 521.4 L1237.6 521.1 L1239.6 520.8 L1241.6 520.5 L1243.6 520.2 L1245.6 519.9 L1247.6 519.6 L1249.6 519.3 L1251.6 519.0 L1253.6 518.7 L1255.6 518.4 L1257.6 518.1 L1259.6 517.8 L1261.6 517.5 L1263.6 517.2 L1265.6 516.9 L1267.6 516.6 L1269.6 516.3 L1271.6 516.0 L1273.6 515.7 L1275.6 515.4 L1277.6 515.1 L1279.6 514.8 L1281.6 514.5 L1283.6 514.2 L1285.6 513.9 L1287.6 513.7 L1289.6 513.4 L1291.6 513.1 L1293.6 512.9 L1295.6 512.6 L1297.6 512.4 L1299.6 512.1 L1301.6 511.9 L1303.6 511.7 L1305.6 511.5 L1307.6 511.3 L1309.6 511.1 L1311.6 510.9 L1313.6 510.8 L1315.6 510.6 L1317.6 510.5 L1319.6 510.4 L1321.6 510.3 L1323.6 510.2 L1325.6 510.1 L1327.6 510.1 L1329.6 510.0 L1331.6 510.0 L1333.6 510.0 L1335.6 510.0 L1337.6 510.0 L1339.6 510.0 L1341.6 510.0 L1343.6 510.0 L1345.6 510.0 L1347.6 510.0 L1349.6 510.0 L1351.6 510.1 L1353.6 510.1 L1355.6 510.1 L1357.6 510.1 L1359.6 510.1 L1361.6 510.1 L1363.6 510.1 L1365.6 510.1 L1367.6 510.1 L1369.6 510.1 L1371.6 510.1 L1373.6 510.1 L1375.6 510.1 L1377.6 510.0 L1379.6 510.0 L1381.6 509.9 L1383.6 509.9 L1385.6 509.8 L1387.6 509.8 L1389.6 509.7 L1391.6 509.7 L1393.6 509.6 L1395.6 509.5 L1397.6 509.5 L1399.6 509.4 L1401.6 509.3 L1403.6 509.3 L1405.6 509.2 L1407.6 509.1 L1409.6 509.1 L1411.6 509.0 L1413.6 508.9 L1415.6 508.9 L1417.6 508.8 L1419.6 508.7 L1421.6 508.7 L1423.6 508.6 L1425.6 508.6 L1427.6 508.5 L1429.6 508.5 L1431.6 508.4 L1433.6 508.4 L1435.6 508.3 L1437.6 508.3 L1439.6 508.3 L1441.6 508.2 L1443.6 508.2 L1445.6 508.2 L1447.6 508.1 L1449.6 508.1 L1451.6 508.0 L1453.6 508.0 L1455.6 507.9 L1457.6 507.9 L1459.6 507.8 L1461.6 507.7 L1463.6 507.7 L1465.6 507.6 L1467.6 507.5 L1469.6 507.4 L1471.6 507.3 L1473.6 507.1 L1475.6 507.0 L1477.6 506.9 L1479.6 506.8 L1481.6 506.6 L1483.6 506.5 L1485.6 506.4 L1487.6 506.2 L1489.6 506.1 L1491.6 505.9 L1493.6 505.8 L1495.6 505.7 L1497.6 505.5 L1499.6 505.4 L1501.6 505.3 L1503.6 505.2 L1505.6 505.1 L1507.6 505.0 L1509.6 504.9 L1511.6 504.8 L1513.6 504.8 L1515.6 504.7 L1517.6 504.7 L1519.6 504.7 L1521.6 504.7 L1523.6 504.7 L1525.6 504.7 L1527.6 504.7 L1529.6 504.7 L1531.6 504.7 L1533.6 504.7 L1535.6 504.7 L1537.6 504.7 L1539.6 504.7 L1541.6 504.7 L1543.6 504.7 L1545.6 504.7 L1547.6 504.7 L1549.6 504.6 L1551.6 504.6 L1553.6 504.5 L1555.6 504.4 L1557.6 504.3 L1559.6 504.2 L1561.6 504.0 L1563.6 503.8 L1565.6 503.6 L1567.6 503.4 L1569.6 503.2 L1571.6 502.9 L1573.6 502.7 L1575.6 502.4 L1577.6 502.1 L1579.6 501.8 L1581.6 501.5 L1583.6 501.1 L1585.6 500.8 L1587.6 500.4 L1589.6 500.1 L1591.6 499.7 L1593.6 499.3 L1595.6 498.9 L1597.6 498.5 L1599.6 498.1 L1601.6 497.7 L1603.6 497.3 L1605.6 496.9 L1607.6 496.5 L1609.6 496.1 L1611.6 495.7 L1613.6 495.3 L1615.6 494.9 L1617.6 494.4 L1619.6 494.0 L1621.6 493.6 L1623.6 493.2 L1625.6 492.8 L1627.6 492.4 L1629.6 492.0 L1631.6 491.6 L1633.6 491.2 L1635.6 490.9 L1637.6 490.5 L1639.6 490.1 L1641.6 489.8 L1643.6 489.4 L1645.6 489.1 L1647.6 488.8 L1649.6 488.5 L1651.6 488.2 L1653.6 487.9 L1655.6 487.6 L1657.6 487.3 L1659.6 487.1 L1661.6 486.8 L1663.6 486.5 L1665.6 486.3 L1667.6 486.1 L1669.6 485.8 L1671.6 485.6 L1673.6 485.4 L1675.6 485.1 L1677.6 484.9 L1679.6 484.7 L1681.6 484.5 L1683.6 484.3 L1685.6 484.1 L1687.6 483.9 L1689.6 483.7 L1691.6 483.5 L1693.6 483.3 L1695.6 483.1 L1697.6 482.8 L1699.6 482.6 L1701.6 482.4 L1703.6 482.2 L1705.6 481.9 L1707.6 481.7 L1709.6 481.4 L1711.6 481.2 L1713.6 480.9 L1715.6 480.6 L1717.6 480.4 L1719.6 480.1 L1721.6 479.7 L1723.6 479.4 L1725.6 479.1 L1727.6 478.7 L1729.6 478.4 L1731.6 478.0 L1733.6 477.6 L1735.6 477.3 L1737.6 476.9 L1739.6 476.5 L1741.6 476.0 L1743.6 475.6 L1745.6 475.2 L1747.6 474.7 L1749.6 474.3 L1751.6 473.8 L1753.6 473.4 L1755.6 472.9 L1757.6 472.5 L1759.6 472.1 L1761.6 471.6 L1763.6 471.2 L1765.6 470.8 L1767.6 470.5 L1769.6 470.1 L1771.6 469.7 L1773.6 469.4 L1775.6 469.1 L1777.6 468.8 L1779.6 468.5 L1781.6 468.2 L1783.6 467.9 L1785.6 467.5 L1787.6 467.2 L1789.6 466.8 L1791.6 466.5 L1793.6 466.1 L1795.6 465.6 L1797.6 465.2 L1799.6 464.7 L1801.6 464.2 L1803.6 463.6 L1805.6 463.1 L1807.6 462.5 L1809.6 461.9 L1811.6 461.3 L1813.6 460.7 L1815.6 460.1 L1817.6 459.5 L1819.6 458.9 L1821.6 458.3 L1823.6 457.7 L1825.6 457.1 L1827.6 456.5 L1829.6 456.0 L1831.6 455.4 L1833.6 454.9 L1835.6 454.4 L1837.6 453.9 L1839.6 453.3 L1841.6 452.8 L1843.6 452.3 L1845.6 451.8 L1847.6 451.3 L1849.6 450.8 L1851.6 450.3 L1853.6 449.9 L1855.6 449.4 L1857.6 448.9 L1859.6 448.4 L1861.6 447.9 L1863.6 447.4 L1865.6 447.0 L1867.6 446.5 L1869.6 446.0 L1871.6 445.6 L1873.6 445.1 L1875.6 444.6 L1877.6 444.2 L1879.6 443.7 L1881.6 443.2 L1883.6 442.8 L1885.6 442.3 L1887.6 441.9 L1889.6 441.4 L1891.6 441.0 L1893.6 440.5 L1895.6 440.1 L1897.6 439.6 L1899.6 439.2 L1901.6 438.8 L1903.6 438.4 L1905.6 437.9 L1907.6 437.5 L1909.6 437.1 L1911.6 436.7 L1913.6 436.3 L1915.6 435.9 L1917.6 435.5 L1919.6 435.1 L1921.6 434.8 L1923.6 434.4 L1925.6 434.0 L1927.6 433.6 L1929.6 433.3 L1931.6 432.9 L1933.6 432.6 L1935.6 432.2 L1937.6 431.9 L1939.6 431.5 L1941.6 431.2 L1943.6 430.9 L1945.6 430.5 L1947.6 430.2 L1949.6 429.9 L1951.6 429.6 L1953.6 429.3 L1955.6 429.0 L1957.6 428.7 L1959.6 428.4 L1961.6 428.1 L1963.6 427.9 L1965.6 427.6 L1967.6 427.3 L1969.6 427.1 L1971.6 426.8 L1973.6 426.6 L1975.6 426.3 L1977.6 426.1 L1979.6 425.8 L1981.6 425.6 L1983.6 425.4 L1985.6 425.2 L1987.6 424.9 L1989.6 424.7 L1991.6 424.5 L1993.6 424.3 L1995.6 424.1 L1997.6 423.9 L1999.6 423.7 L2001.6 423.5 L2003.6 423.4 L2005.6 423.2 L2007.6 423.0 L2009.6 422.8 L2011.6 422.7 L2013.6 422.5 L2015.6 422.4 L2017.6 422.2 L2019.6 422.1 L2021.6 421.9 L2023.6 421.8 L2025.6 421.7 L2027.6 421.6 L2029.6 421.5 L2031.6 421.4 L2033.6 421.3 L2033.9 421.3" fill="none" stroke="#a526e8" stroke-width="1.75" stroke-linejoin="round"/>
<path d="M21.6 525.4 L23.6 525.4 L25.6 525.4 L27.6 525.4 L29.6 525.4 L31.6 525.4 L33.6 525.4 L35.6 525.5 L37.6 525.5 L39.6 525.5 L41.6 525.5 L43.6 525.6 L45.6 525.6 L47.6 525.7 L49.6 525.8 L51.6 525.9 L53.6 526.0 L55.6 526.1 L57.6 526.2 L59.6 526.4 L61.6 526.5 L63.6 526.7 L65.6 526.9 L67.6 527.1 L69.6 527.3 L71.6 527.5 L73.6 527.8 L75.6 528.0 L77.6 528.3 L79.6 528.6 L81.6 528.9 L83.6 529.3 L85.6 529.6 L87.6 530.0 L89.6 530.4 L91.6 530.8 L93.6 531.1 L95.6 531.5 L97.6 531.9 L99.6 532.2 L101.6 532.5 L103.6 532.8 L105.6 533.1 L107.6 533.3 L109.6 533.5 L111.6 533.7 L113.6 533.9 L115.6 534.1 L117.6 534.2 L119.6 534.3 L121.6 534.5 L123.6 534.6 L125.6 534.7 L127.6 534.8 L129.6 534.9 L131.6 534.9 L133.6 535.0 L135.6 535.1 L137.6 535.2 L139.6 535.2 L141.6 535.3 L143.6 535.4 L145.6 535.4 L147.6 535.5 L149.6 535.6 L151.6 535.6 L153.6 535.7 L155.6 535.7 L157.6 535.8 L159.6 535.8 L161.6 535.9 L163.6 536.0 L165.6 536.1 L167.6 536.2 L169.6 536.3 L171.6 536.5 L173.6 536.7 L175.6 536.9 L177.6 537.1 L179.6 537.4 L181.6 537.7 L183.6 538.1 L185.6 538.5 L187.6 539.0 L189.6 539.5 L191.6 540.0 L193.6 540.6 L195.6 541.3 L197.6 541.9 L199.6 542.7 L201.6 543.4 L203.6 544.2 L205.6 545.1 L207.6 545.9 L209.6 546.8 L211.6 547.7 L213.6 548.6 L215.6 549.5 L217.6 550.3 L219.6 551.2 L221.6 552.0 L223.6 552.9 L225.6 553.7 L227.6 554.5 L229.6 555.3 L231.6 556.0 L233.6 556.8 L235.6 557.6 L237.6 558.3 L239.6 559.0 L241.6 559.8 L243.6 560.5 L245.6 561.3 L247.6 562.0 L249.6 562.8 L251.6 563.5 L253.6 564.3 L255.6 565.0 L257.6 565.8 L259.6 566.6 L261.6 567.3 L263.6 568.1 L265.6 568.9 L267.6 569.7 L269.6 570.5 L271.6 571.4 L273.6 572.2 L275.6 573.0 L277.6 573.8 L279.6 574.7 L281.6 575.5 L283.6 576.3 L285.6 577.2 L287.6 578.0 L289.6 578.9 L291.6 579.7 L293.6 580.6 L295.6 581.5 L297.6 582.3 L299.6 583.2 L301.6 584.1 L303.6 585.0 L305.6 585.9 L307.6 586.8 L309.6 587.7 L311.6 588.6 L313.6 589.5 L315.6 590.4 L317.6 591.2 L319.6 592.1 L321.6 593.0 L323.6 593.8 L325.6 594.6 L327.6 595.5 L329.6 596.3 L331.6 597.0 L333.6 597.8 L335.6 598.5 L337.6 599.2 L339.6 600.0 L341.6 600.6 L343.6 601.3 L345.6 602.0 L347.6 602.6 L349.6 603.3 L351.6 603.9 L353.6 604.6 L355.6 605.2 L357.6 605.8 L359.6 606.4 L361.6 607.1 L363.6 607.8 L365.6 608.5 L367.6 609.2 L369.6 610.0 L371.6 610.8 L373.6 611.7 L375.6 612.6 L377.6 613.6 L379.6 614.6 L381.6 615.6 L383.6 616.7 L385.6 617.8 L387.6 618.9 L389.6 620.0 L391.6 621.2 L393.6 622.3 L395.6 623.5 L397.6 624.6 L399.6 625.8 L401.6 626.9 L403.6 628.0 L405.6 629.2 L407.6 630.3 L409.6 631.4 L411.6 632.5 L413.6 633.5 L415.6 634.6 L417.6 635.6 L419.6 636.7 L421.6 637.7 L423.6 638.7 L425.6 639.7 L427.6 640.7 L429.6 641.7 L431.6 642.6 L433.6 643.6 L435.6 644.5 L437.6 645.4 L439.6 646.3 L441.6 647.2 L443.6 648.1 L445.6 649.0 L447.6 649.8 L449.6 650.7 L451.6 651.5 L453.6 652.3 L455.6 653.1 L457.6 653.9 L459.6 654.6 L461.6 655.4 L463.6 656.1 L465.6 656.8 L467.6 657.5 L469.6 658.1 L471.6 658.8 L473.6 659.4 L475.6 660.0 L477.6 660.7 L479.6 661.2 L481.6 661.8 L483.6 662.4 L485.6 662.9 L487.6 663.4 L489.6 663.9 L491.6 664.4 L493.6 664.9 L495.6 665.4 L497.6 665.9 L499.6 666.4 L501.6 666.8 L503.6 667.3 L505.6 667.8 L507.6 668.2 L509.6 668.7 L511.6 669.1 L513.6 669.5 L515.6 670.0 L517.6 670.4 L519.6 670.8 L521.6 671.2 L523.6 671.6 L525.6 671.9 L527.6 672.2 L529.6 672.6 L531.6 672.8 L533.6 673.1 L535.6 673.3 L537.6 673.5 L539.6 673.7 L541.6 673.8 L543.6 673.9 L545.6 674.0 L547.6 674.0 L549.6 674.0 L551.6 674.1 L553.6 674.0 L555.6 674.0 L557.6 673.9 L559.6 673.9 L561.6 673.8 L563.6 673.6 L565.6 673.4 L567.6 673.3 L569.6 673.0 L571.6 672.8 L573.6 672.5 L575.6 672.2 L577.6 671.9 L579.6 671.6 L581.6 671.3 L583.6 671.0 L585.6 670.7 L587.6 670.4 L589.6 670.1 L591.6 669.8 L593.6 669.5 L595.6 669.2 L597.6 668.9 L599.6 668.6 L601.6 668.3 L603.6 668.1 L605.6 667.8 L607.6 667.5 L609.6 667.3 L611.6 667.0 L613.6 666.8 L615.6 666.5 L617.6 666.3 L619.6 666.0 L621.6 665.8 L623.6 665.5 L625.6 665.2 L627.6 664.9 L629.6 664.6 L631.6 664.2 L633.6 663.8 L635.6 663.4 L637.6 663.0 L639.6 662.5 L641.6 662.0 L643.6 661.4 L645.6 660.9 L647.6 660.3 L649.6 659.7 L651.6 659.0 L653.6 658.4 L655.6 657.8 L657.6 657.1 L659.6 656.4 L661.6 655.7 L663.6 655.0 L665.6 654.3 L667.6 653.6 L669.6 653.0 L671.6 652.3 L673.6 651.6 L675.6 650.9 L677.6 650.2 L679.6 649.5 L681.6 648.9 L683.6 648.2 L685.6 647.5 L687.6 646.9 L689.6 646.3 L691.6 645.6 L693.6 645.0 L695.6 644.4 L697.6 643.7 L699.6 643.1 L701.6 642.5 L703.6 641.9 L705.6 641.3 L707.6 640.8 L709.6 640.2 L711.6 639.7 L713.6 639.2 L715.6 638.8 L717.6 638.4 L719.6 638.1 L721.6 637.7 L723.6 637.4 L725.6 637.1 L727.6 636.7 L729.6 636.3 L731.6 635.8 L733.6 635.3 L735.6 634.7 L737.6 634.1 L739.6 633.4 L741.6 632.7 L743.6 632.0 L745.6 631.3 L747.6 630.6 L749.6 629.9 L751.6 629.2 L753.6 628.5 L755.6 627.9 L757.6 627.2 L759.6 626.6 L761.6 626.0 L763.6 625.4 L765.6 624.8 L767.6 624.2 L769.6 623.6 L771.6 623.0 L773.6 622.3 L775.6 621.7 L777.6 621.0 L779.6 620.4 L781.6 619.7 L783.6 619.0 L785.6 618.2 L787.6 617.5 L789.6 616.8 L791.6 616.1 L793.6 615.3 L795.6 614.6 L797.6 613.9 L799.6 613.1 L801.6 612.4 L803.6 611.7 L805.6 610.9 L807.6 610.2 L809.6 609.5 L811.6 608.8 L813.6 608.1 L815.6 607.4 L817.6 606.7 L819.6 606.1 L821.6 605.4 L823.6 604.8 L825.6 604.3 L827.6 603.7 L829.6 603.2 L831.6 602.7 L833.6 602.2 L835.6 601.8 L837.6 601.4 L839.6 601.1 L841.6 600.8 L843.6 600.5 L845.6 600.3 L847.6 600.1 L849.6 599.9 L851.6 599.8 L853.6 599.7 L855.6 599.6 L857.6 599.6 L859.6 599.5 L861.6 599.6 L863.6 599.6 L865.6 599.6 L867.6 599.7 L869.6 599.8 L871.6 599.8 L873.6 599.9 L875.6 600.0 L877.6 600.1 L879.6 600.2 L881.6 600.2 L883.6 600.3 L885.6 600.4 L887.6 600.5 L889.6 600.5 L891.6 600.6 L893.6 600.7 L895.6 600.7 L897.6 600.8 L899.6 600.8 L901.6 600.8 L903.6 600.9 L905.6 600.9 L907.6 600.9 L909.6 600.9 L911.6 600.9 L913.6 600.9 L915.6 600.9 L917.6 600.8 L919.6 600.8 L921.6 600.7 L923.6 600.6 L925.6 600.5 L927.6 600.3 L929.6 600.0 L931.6 599.8 L933.6 599.4 L935.6 599.1 L937.6 598.7 L939.6 598.2 L941.6 597.7 L943.6 597.1 L945.6 596.6 L947.6 596.0 L949.6 595.3 L951.6 594.7 L953.6 594.0 L955.6 593.3 L957.6 592.6 L959.6 591.8 L961.6 591.1 L963.6 590.3 L965.6 589.5 L967.6 588.7 L969.6 587.9 L971.6 587.0 L973.6 586.2 L975.6 585.3 L977.6 584.4 L979.6 583.5 L981.6 582.6 L983.6 581.6 L985.6 580.7 L987.6 579.7 L989.6 578.7 L991.6 577.7 L993.6 576.7 L995.6 575.7 L997.6 574.7 L999.6 573.7 L1001.6 572.7 L1003.6 571.7 L1005.6 570.7 L1007.6 569.7 L1009.6 568.7 L1011.6 567.7 L1013.6 566.7 L1015.6 565.7 L1017.6 564.7 L1019.6 563.7 L1021.6 562.7 L1023.6 561.7 L1025.6 560.7 L1027.6 559.7 L1029.6 558.7 L1031.6 557.7 L1033.6 556.7 L1035.6 555.7 L1037.6 554.7 L1039.6 553.7 L1041.6 552.7 L1043.6 551.7 L1045.6 550.7 L1047.6 549.7 L1049.6 548.7 L1051.6 547.7 L1053.6 546.6 L1055.6 545.6 L1057.6 544.5 L1059.6 543.4 L1061.6 542.3 L1063.6 541.2 L1065.6 540.0 L1067.6 538.9 L1069.6 537.8 L1071.6 536.6 L1073.6 535.4 L1075.6 534.3 L1077.6 533.1 L1079.6 531.9 L1081.6 530.8 L1083.6 529.5 L1085.6 528.3 L1087.6 527.0 L1089.6 525.7 L1091.6 524.3 L1093.6 522.9 L1095.6 521.5 L1097.6 520.0 L1099.6 518.5 L1101.6 517.1 L1103.6 515.6 L1105.6 514.2 L1107.6 512.8 L1109.6 511.5 L1111.6 510.2 L1113.6 509.0 L1115.6 507.7 L1117.6 506.6 L1119.6 505.5 L1121.6 504.4 L1123.6 503.3 L1125.6 502.3 L1127.6 501.4 L1129.6 500.4 L1131.6 499.5 L1133.6 498.6 L1135.6 497.8 L1137.6 497.0 L1139.6 496.1 L1141.6 495.4 L1143.6 494.6 L1145.6 493.8 L1147.6 493.1 L1149.6 492.4 L1151.6 491.7 L1153.6 491.0 L1155.6 490.3 L1157.6 489.7 L1159.6 489.0 L1161.6 488.4 L1163.6 487.7 L1165.6 487.1 L1167.6 486.5 L1169.6 485.9 L1171.6 485.3 L1173.6 484.7 L1175.6 484.1 L1177.6 483.6 L1179.6 483.0 L1181.6 482.4 L1183.6 481.9 L1185.6 481.3 L1187.6 480.8 L1189.6 480.3 L1191.6 479.7 L1193.6 479.2 L1195.6 478.7 L1197.6 478.2 L1199.6 477.7 L1201.6 477.3 L1203.6 476.8 L1205.6 476.4 L1207.6 476.0 L1209.6 475.6 L1211.6 475.2 L1213.6 474.8 L1215.6 474.5 L1217.6 474.2 L1219.6 473.9 L1221.6 473.6 L1223.6 473.3 L1225.6 473.1 L1227.6 472.8 L1229.6 472.5 L1231.6 472.3 L1233.6 472.0 L1235.6 471.7 L1237.6 471.4 L1239.6 471.2 L1241.6 470.9 L1243.6 470.6 L1245.6 470.3 L1247.6 469.9 L1249.6 469.6 L1251.6 469.2 L1253.6 468.9 L1255.6 468.5 L1257.6 468.0 L1259.6 467.6 L1261.6 467.2 L1263.6 466.7 L1265.6 466.2 L1267.6 465.8 L1269.6 465.3 L1271.6 464.8 L1273.6 464.4 L1275.6 464.0 L1277.6 463.6 L1279.6 463.2 L1281.6 462.8 L1283.6 462.5 L1285.6 462.1 L1287.6 461.8 L1289.6 461.5 L1291.6 461.2 L1293.6 461.0 L1295.6 460.7 L1297.6 460.5 L1299.6 460.3 L1301.6 460.1 L1303.6 459.9 L1305.6 459.8 L1307.6 459.6 L1309.6 459.5 L1311.6 459.4 L1313.6 459.4 L1315.6 459.4 L1317.6 459.4 L1319.6 459.4 L1321.6 459.4 L1323.6 459.5 L1325.6 459.5 L1327.6 459.6 L1329.6 459.8 L1331.6 459.9 L1333.6 460.1 L1335.6 460.3 L1337.6 460.5 L1339.6 460.8 L1341.6 461.1 L1343.6 461.4 L1345.6 461.7 L1347.6 462.0 L1349.6 462.4 L1351.6 462.7 L1353.6 463.1 L1355.6 463.4 L1357.6 463.8 L1359.6 464.2 L1361.6 464.5 L1363.6 464.8 L1365.6 465.1 L1367.6 465.4 L1369.6 465.7 L1371.6 465.9 L1373.6 466.1 L1375.6 466.3 L1377.6 466.5 L1379.6 466.7 L1381.6 466.8 L1383.6 466.9 L1385.6 467.0 L1387.6 467.1 L1389.6 467.2 L1391.6 467.2 L1393.6 467.3 L1395.6 467.3 L1397.6 467.3 L1399.6 467.3 L1401.6 467.4 L1403.6 467.4 L1405.6 467.4 L1407.6 467.4 L1409.6 467.4 L1411.6 467.4 L1413.6 467.4 L1415.6 467.4 L1417.6 467.5 L1419.6 467.5 L1421.6 467.5 L1423.6 467.6 L1425.6 467.7 L1427.6 467.8 L1429.6 467.9 L1431.6 468.0 L1433.6 468.1 L1435.6 468.2 L1437.6 468.3 L1439.6 468.5 L1441.6 468.6 L1443.6 468.7 L1445.6 468.8 L1447.6 469.0 L1449.6 469.0 L1451.6 469.1 L1453.6 469.2 L1455.6 469.2 L1457.6 469.3 L1459.6 469.3 L1461.6 469.3 L1463.6 469.3 L1465.6 469.2 L1467.6 469.2 L1469.6 469.1 L1471.6 469.1 L1473.6 469.0 L1475.6 468.9 L1477.6 468.7 L1479.6 468.6 L1481.6 468.4 L1483.6 468.2 L1485.6 468.0 L1487.6 467.8 L1489.6 467.6 L1491.6 467.4 L1493.6 467.2 L1495.6 467.0 L1497.6 466.8 L1499.6 466.7 L1501.6 466.6 L1503.6 466.5 L1505.6 466.5 L1507.6 466.5 L1509.6 466.5 L1511.6 466.6 L1513.6 466.7 L1515.6 466.8 L1517.6 466.9 L1519.6 467.1 L1521.6 467.2 L1523.6 467.4 L1525.6 467.7 L1527.6 467.9 L1529.6 468.2 L1531.6 468.4 L1533.6 468.7 L1535.6 469.0 L1537.6 469.3 L1539.6 469.6 L1541.6 469.9 L1543.6 470.2 L1545.6 470.5 L1547.6 470.7 L1549.6 471.0 L1551.6 471.1 L1553.6 471.2 L1555.6 471.3 L1557.6 471.3 L1559.6 471.2 L1561.6 471.1 L1563.6 470.9 L1565.6 470.6 L1567.6 470.3 L1569.6 469.9 L1571.6 469.4 L1573.6 468.9 L1575.6 468.3 L1577.6 467.7 L1579.6 467.1 L1581.6 466.4 L1583.6 465.7 L1585.6 465.1 L1587.6 464.4 L1589.6 463.8 L1591.6 463.2 L1593.6 462.7 L1595.6 462.2 L1597.6 461.7 L1599.6 461.2 L1601.6 460.7 L1603.6 460.3 L1605.6 459.8 L1607.6 459.4 L1609.6 459.0 L1611.6 458.5 L1613.6 458.1 L1615.6 457.6 L1617.6 457.1 L1619.6 456.6 L1621.6 456.1 L1623.6 455.6 L1625.6 455.0 L1627.6 454.5 L1629.6 453.9 L1631.6 453.3 L1633.6 452.7 L1635.6 452.1 L1637.6 451.4 L1639.6 450.8 L1641.6 450.2 L1643.6 449.6 L1645.6 449.0 L1647.6 448.4 L1649.6 447.9 L1651.6 447.3 L1653.6 446.8 L1655.6 446.4 L1657.6 445.9 L1659.6 445.5 L1661.6 445.1 L1663.6 444.8 L1665.6 444.5 L1667.6 444.2 L1669.6 443.9 L1671.6 443.7 L1673.6 443.4 L1675.6 443.2 L1677.6 443.0 L1679.6 442.9 L1681.6 442.7 L1683.6 442.5 L1685.6 442.4 L1687.6 442.2 L1689.6 442.0 L1691.6 441.9 L1693.6 441.7 L1695.6 441.5 L1697.6 441.3 L1699.6 441.1 L1701.6 440.9 L1703.6 440.6 L1705.6 440.3 L1707.6 440.0 L1709.6 439.7 L1711.6 439.3 L1713.6 438.9 L1715.6 438.4 L1717.6 438.0 L1719.6 437.5 L1721.6 437.1 L1723.6 436.6 L1725.6 436.1 L1727.6 435.7 L1729.6 435.2 L1731.6 434.8 L1733.6 434.3 L1735.6 433.9 L1737.6 433.4 L1739.6 433.0 L1741.6 432.5 L1743.6 432.0 L1745.6 431.5 L1747.6 431.0 L1749.6 430.5 L1751.6 429.9 L1753.6 429.3 L1755.6 428.6 L1757.6 428.0 L1759.6 427.3 L1761.6 426.6 L1763.6 425.9 L1765.6 425.2 L1767.6 424.5 L1769.6 423.7 L1771.6 423.0 L1773.6 422.4 L1775.6 421.7 L1777.6 421.1 L1779.6 420.5 L1781.6 420.0 L1783.6 419.5 L1785.6 419.0 L1787.6 418.5 L1789.6 418.0 L1791.6 417.5 L1793.6 417.0 L1795.6 416.4 L1797.6 415.8 L1799.6 415.2 L1801.6 414.5 L1803.6 413.7 L1805.6 412.9 L1807.6 412.1 L1809.6 411.2 L1811.6 410.3 L1813.6 409.3 L1815.6 408.4 L1817.6 407.4 L1819.6 406.4 L1821.6 405.5 L1823.6 404.5 L1825.6 403.6 L1827.6 402.7 L1829.6 401.8 L1831.6 401.0 L1833.6 400.2 L1835.6 399.4 L1837.6 398.6 L1839.6 397.9 L1841.6 397.1 L1843.6 396.4 L1845.6 395.8 L1847.6 395.1 L1849.6 394.4 L1851.6 393.8 L1853.6 393.1 L1855.6 392.4 L1857.6 391.8 L1859.6 391.1 L1861.6 390.5 L1863.6 389.8 L1865.6 389.2 L1867.6 388.6 L1869.6 387.9 L1871.6 387.3 L1873.6 386.8 L1875.6 386.2 L1877.6 385.6 L1879.6 385.1 L1881.6 384.6 L1883.6 384.0 L1885.6 383.5 L1887.6 383.0 L1889.6 382.5 L1891.6 382.0 L1893.6 381.5 L1895.6 381.0 L1897.6 380.4 L1899.6 379.9 L1901.6 379.4 L1903.6 378.8 L1905.6 378.3 L1907.6 377.8 L1909.6 377.2 L1911.6 376.7 L1913.6 376.2 L1915.6 375.8 L1917.6 375.3 L1919.6 374.8 L1921.6 374.4 L1923.6 374.0 L1925.6 373.6 L1927.6 373.2 L1929.6 372.8 L1931.6 372.4 L1933.6 372.0 L1935.6 371.6 L1937.6 371.2 L1939.6 370.8 L1941.6 370.4 L1943.6 370.0 L1945.6 369.6 L1947.6 369.2 L1949.6 368.9 L1951.6 368.5 L1953.6 368.2 L1955.6 367.8 L1957.6 367.5 L1959.6 367.2 L1961.6 366.9 L1963.6 366.6 L1965.6 366.3 L1967.6 366.1 L1969.6 365.8 L1971.6 365.6 L1973.6 365.3 L1975.6 365.1 L1977.6 364.9 L1979.6 364.7 L1981.6 364.5 L1983.6 364.3 L1985.6 364.2 L1987.6 364.0 L1989.6 363.9 L1991.6 363.7 L1993.6 363.6 L1995.6 363.5 L1997.6 363.4 L1999.6 363.3 L2001.6 363.2 L2003.6 363.1 L2005.6 363.1 L2007.6 363.0 L2009.6 362.9 L2011.6 362.9 L2013.6 362.9 L2015.6 362.8 L2017.6 362.8 L2019.6 362.8 L2021.6 362.8 L2023.6 362.8 L2025.6 362.8 L2027.6 362.8 L2029.6 362.8 L2031.6 362.8 L2033.6 362.8 L2033.9 362.8" fill="none" stroke="#2a2aee" stroke-width="1.75" stroke-linejoin="round"/>
<path d="M21.6 521.1 L23.6 521.1 L25.6 521.1 L27.6 521.1 L29.6 521.1 L31.6 521.1 L33.6 521.1 L35.6 521.1 L37.6 521.1 L39.6 521.1 L41.6 521.2 L43.6 521.2 L45.6 521.3 L47.6 521.4 L49.6 521.5 L51.6 521.6 L53.6 521.8 L55.6 522.0 L57.6 522.3 L59.6 522.5 L61.6 522.8 L63.6 523.1 L65.6 523.4 L67.6 523.7 L69.6 524.0 L71.6 524.3 L73.6 524.7 L75.6 525.2 L77.6 525.6 L79.6 526.1 L81.6 526.6 L83.6 527.2 L85.6 527.7 L87.6 528.3 L89.6 528.8 L91.6 529.4 L93.6 530.0 L95.6 530.6 L97.6 531.3 L99.6 531.9 L101.6 532.6 L103.6 533.3 L105.6 534.0 L107.6 534.7 L109.6 535.4 L111.6 536.0 L113.6 536.6 L115.6 537.0 L117.6 537.4 L119.6 537.8 L121.6 538.1 L123.6 538.3 L125.6 538.6 L127.6 538.8 L129.6 539.0 L131.6 539.1 L133.6 539.3 L135.6 539.4 L137.6 539.5 L139.6 539.6 L141.6 539.6 L143.6 539.6 L145.6 539.6 L147.6 539.6 L149.6 539.6 L151.6 539.6 L153.6 539.6 L155.6 539.6 L157.6 539.6 L159.6 539.6 L161.6 539.7 L163.6 539.7 L165.6 539.8 L167.6 539.9 L169.6 540.0 L171.6 540.2 L173.6 540.5 L175.6 540.9 L177.6 541.2 L179.6 541.7 L181.6 542.1 L183.6 542.6 L185.6 543.2 L187.6 543.9 L189.6 544.6 L191.6 545.5 L193.6 546.5 L195.6 547.7 L197.6 549.0 L199.6 550.4 L201.6 551.8 L203.6 553.5 L205.6 555.2 L207.6 557.1 L209.6 559.1 L211.6 561.2 L213.6 563.2 L215.6 565.3 L217.6 567.1 L219.6 568.8 L221.6 570.3 L223.6 571.6 L225.6 572.7 L227.6 573.8 L229.6 574.7 L231.6 575.7 L233.6 576.6 L235.6 577.6 L237.6 578.6 L239.6 579.7 L241.6 580.9 L243.6 582.2 L245.6 583.6 L247.6 585.0 L249.6 586.6 L251.6 588.1 L253.6 589.8 L255.6 591.4 L257.6 593.1 L259.6 594.7 L261.6 596.4 L263.6 598.0 L265.6 599.6 L267.6 601.1 L269.6 602.6 L271.6 604.0 L273.6 605.4 L275.6 606.8 L277.6 608.1 L279.6 609.4 L281.6 610.7 L283.6 612.0 L285.6 613.4 L287.6 614.7 L289.6 616.1 L291.6 617.6 L293.6 619.0 L295.6 620.6 L297.6 622.1 L299.6 623.6 L301.6 625.2 L303.6 626.7 L305.6 628.1 L307.6 629.6 L309.6 630.9 L311.6 632.3 L313.6 633.6 L315.6 634.8 L317.6 636.1 L319.6 637.2 L321.6 638.4 L323.6 639.5 L325.6 640.6 L327.6 641.6 L329.6 642.7 L331.6 643.6 L333.6 644.5 L335.6 645.4 L337.6 646.3 L339.6 647.1 L341.6 648.0 L343.6 648.7 L345.6 649.5 L347.6 650.3 L349.6 651.0 L351.6 651.7 L353.6 652.4 L355.6 653.0 L357.6 653.6 L359.6 654.3 L361.6 654.9 L363.6 655.6 L365.6 656.4 L367.6 657.2 L369.6 658.1 L371.6 659.1 L373.6 660.2 L375.6 661.5 L377.6 662.7 L379.6 664.1 L381.6 665.5 L383.6 667.0 L385.6 668.6 L387.6 670.2 L389.6 671.9 L391.6 673.6 L393.6 675.3 L395.6 677.0 L397.6 678.7 L399.6 680.3 L401.6 681.9 L403.6 683.4 L405.6 684.8 L407.6 686.2 L409.6 687.5 L411.6 688.8 L413.6 690.1 L415.6 691.4 L417.6 692.8 L419.6 694.1 L421.6 695.5 L423.6 697.0 L425.6 698.5 L427.6 700.0 L429.6 701.6 L431.6 703.1 L433.6 704.6 L435.6 706.1 L437.6 707.6 L439.6 709.0 L441.6 710.3 L443.6 711.5 L445.6 712.6 L447.6 713.8 L449.6 714.8 L451.6 715.8 L453.6 716.8 L455.6 717.8 L457.6 718.7 L459.6 719.5 L461.6 720.4 L463.6 721.2 L465.6 722.0 L467.6 722.7 L469.6 723.4 L471.6 724.1 L473.6 724.8 L475.6 725.4 L477.6 726.0 L479.6 726.5 L481.6 727.0 L483.6 727.4 L485.6 727.8 L487.6 728.2 L489.6 728.6 L491.6 728.9 L493.6 729.2 L495.6 729.5 L497.6 729.8 L499.6 730.1 L501.6 730.4 L503.6 730.7 L505.6 730.9 L507.6 731.2 L509.6 731.4 L511.6 731.7 L513.6 731.9 L515.6 732.1 L517.6 732.3 L519.6 732.5 L521.6 732.7 L523.6 732.9 L525.6 733.0 L527.6 733.2 L529.6 733.3 L531.6 733.4 L533.6 733.5 L535.6 733.5 L537.6 733.5 L539.6 733.4 L541.6 733.1 L543.6 732.9 L545.6 732.5 L547.6 732.0 L549.6 731.5 L551.6 731.0 L553.6 730.4 L555.6 729.8 L557.6 729.1 L559.6 728.4 L561.6 727.6 L563.6 726.8 L565.6 726.0 L567.6 725.1 L569.6 724.2 L571.6 723.3 L573.6 722.3 L575.6 721.3 L577.6 720.4 L579.6 719.3 L581.6 718.3 L583.6 717.3 L585.6 716.3 L587.6 715.3 L589.6 714.2 L591.6 713.2 L593.6 712.2 L595.6 711.2 L597.6 710.1 L599.6 709.1 L601.6 708.2 L603.6 707.2 L605.6 706.3 L607.6 705.4 L609.6 704.5 L611.6 703.7 L613.6 702.9 L615.6 702.1 L617.6 701.3 L619.6 700.5 L621.6 699.7 L623.6 698.9 L625.6 698.0 L627.6 697.1 L629.6 696.1 L631.6 695.1 L633.6 694.1 L635.6 693.1 L637.6 692.0 L639.6 690.8 L641.6 689.6 L643.6 688.3 L645.6 687.0 L647.6 685.6 L649.6 684.2 L651.6 682.7 L653.6 681.3 L655.6 679.9 L657.6 678.4 L659.6 677.0 L661.6 675.7 L663.6 674.3 L665.6 672.9 L667.6 671.5 L669.6 670.0 L671.6 668.6 L673.6 667.1 L675.6 665.5 L677.6 663.9 L679.6 662.3 L681.6 660.7 L683.6 659.0 L685.6 657.5 L687.6 656.0 L689.6 654.5 L691.6 653.1 L693.6 651.8 L695.6 650.5 L697.6 649.3 L699.6 648.1 L701.6 647.0 L703.6 645.9 L705.6 644.8 L707.6 643.8 L709.6 642.8 L711.6 641.8 L713.6 640.9 L715.6 640.0 L717.6 639.1 L719.6 638.2 L721.6 637.4 L723.6 636.5 L725.6 635.5 L727.6 634.4 L729.6 633.3 L731.6 631.9 L733.6 630.5 L735.6 628.9 L737.6 627.3 L739.6 625.7 L741.6 624.3 L743.6 622.9 L745.6 621.8 L747.6 620.8 L749.6 620.0 L751.6 619.3 L753.6 618.7 L755.6 618.1 L757.6 617.5 L759.6 616.8 L761.6 616.1 L763.6 615.3 L765.6 614.3 L767.6 613.1 L769.6 611.8 L771.6 610.3 L773.6 608.6 L775.6 606.9 L777.6 605.3 L779.6 603.6 L781.6 602.0 L783.6 600.5 L785.6 599.0 L787.6 597.6 L789.6 596.2 L791.6 594.8 L793.6 593.5 L795.6 592.2 L797.6 590.9 L799.6 589.7 L801.6 588.5 L803.6 587.4 L805.6 586.3 L807.6 585.2 L809.6 584.2 L811.6 583.2 L813.6 582.2 L815.6 581.2 L817.6 580.3 L819.6 579.3 L821.6 578.4 L823.6 577.5 L825.6 576.5 L827.6 575.6 L829.6 574.8 L831.6 574.1 L833.6 573.4 L835.6 572.9 L837.6 572.5 L839.6 572.2 L841.6 572.0 L843.6 571.8 L845.6 571.6 L847.6 571.5 L849.6 571.4 L851.6 571.3 L853.6 571.3 L855.6 571.3 L857.6 571.5 L859.6 571.6 L861.6 571.9 L863.6 572.2 L865.6 572.5 L867.6 572.9 L869.6 573.2 L871.6 573.5 L873.6 573.8 L875.6 574.2 L877.6 574.5 L879.6 574.8 L881.6 575.2 L883.6 575.5 L885.6 575.8 L887.6 576.2 L889.6 576.6 L891.6 576.9 L893.6 577.3 L895.6 577.7 L897.6 578.2 L899.6 578.6 L901.6 579.0 L903.6 579.4 L905.6 579.7 L907.6 580.0 L909.6 580.3 L911.6 580.6 L913.6 580.9 L915.6 581.1 L917.6 581.3 L919.6 581.4 L921.6 581.5 L923.6 581.5 L925.6 581.3 L927.6 581.1 L929.6 580.7 L931.6 580.2 L933.6 579.6 L935.6 578.9 L937.6 578.2 L939.6 577.3 L941.6 576.4 L943.6 575.5 L945.6 574.4 L947.6 573.4 L949.6 572.3 L951.6 571.4 L953.6 570.5 L955.6 569.6 L957.6 568.8 L959.6 568.1 L961.6 567.3 L963.6 566.5 L965.6 565.6 L967.6 564.6 L969.6 563.4 L971.6 562.1 L973.6 560.6 L975.6 559.1 L977.6 557.4 L979.6 555.8 L981.6 554.1 L983.6 552.3 L985.6 550.5 L987.6 548.7 L989.6 546.8 L991.6 545.0 L993.6 543.1 L995.6 541.2 L997.6 539.4 L999.6 537.6 L1001.6 535.8 L1003.6 534.1 L1005.6 532.4 L1007.6 530.7 L1009.6 529.0 L1011.6 527.4 L1013.6 525.7 L1015.6 524.1 L1017.6 522.5 L1019.6 520.9 L1021.6 519.2 L1023.6 517.7 L1025.6 516.1 L1027.6 514.5 L1029.6 512.9 L1031.6 511.4 L1033.6 509.8 L1035.6 508.2 L1037.6 506.7 L1039.6 505.1 L1041.6 503.5 L1043.6 502.0 L1045.6 500.4 L1047.6 498.8 L1049.6 497.2 L1051.6 495.6 L1053.6 494.0 L1055.6 492.4 L1057.6 490.8 L1059.6 489.1 L1061.6 487.3 L1063.6 485.6 L1065.6 483.8 L1067.6 482.0 L1069.6 480.1 L1071.6 478.3 L1073.6 476.6 L1075.6 474.9 L1077.6 473.2 L1079.6 471.6 L1081.6 470.0 L1083.6 468.4 L1085.6 466.8 L1087.6 465.0 L1089.6 463.2 L1091.6 461.2 L1093.6 459.0 L1095.6 456.8 L1097.6 454.5 L1099.6 452.3 L1101.6 450.1 L1103.6 448.1 L1105.6 446.2 L1107.6 444.5 L1109.6 442.8 L1111.6 441.3 L1113.6 439.9 L1115.6 438.5 L1117.6 437.2 L1119.6 436.0 L1121.6 434.8 L1123.6 433.7 L1125.6 432.7 L1127.6 431.7 L1129.6 430.8 L1131.6 429.9 L1133.6 429.0 L1135.6 428.2 L1137.6 427.4 L1139.6 426.6 L1141.6 425.8 L1143.6 425.0 L1145.6 424.2 L1147.6 423.4 L1149.6 422.6 L1151.6 421.8 L1153.6 421.0 L1155.6 420.2 L1157.6 419.5 L1159.6 418.7 L1161.6 418.0 L1163.6 417.3 L1165.6 416.7 L1167.6 416.1 L1169.6 415.6 L1171.6 415.1 L1173.6 414.5 L1175.6 414.1 L1177.6 413.6 L1179.6 413.1 L1181.6 412.7 L1183.6 412.2 L1185.6 411.8 L1187.6 411.3 L1189.6 410.8 L1191.6 410.3 L1193.6 409.8 L1195.6 409.2 L1197.6 408.7 L1199.6 408.2 L1201.6 407.7 L1203.6 407.3 L1205.6 406.9 L1207.6 406.7 L1209.6 406.5 L1211.6 406.4 L1213.6 406.4 L1215.6 406.5 L1217.6 406.7 L1219.6 406.9 L1221.6 407.1 L1223.6 407.3 L1225.6 407.5 L1227.6 407.6 L1229.6 407.7 L1231.6 407.8 L1233.6 407.8 L1235.6 407.8 L1237.6 407.7 L1239.6 407.7 L1241.6 407.6 L1243.6 407.5 L1245.6 407.4 L1247.6 407.3 L1249.6 407.2 L1251.6 407.0 L1253.6 406.9 L1255.6 406.8 L1257.6 406.7 L1259.6 406.6 L1261.6 406.4 L1263.6 406.3 L1265.6 406.1 L1267.6 406.0 L1269.6 405.9 L1271.6 405.7 L1273.6 405.6 L1275.6 405.5 L1277.6 405.4 L1279.6 405.3 L1281.6 405.2 L1283.6 405.1 L1285.6 405.0 L1287.6 404.9 L1289.6 404.8 L1291.6 404.7 L1293.6 404.6 L1295.6 404.4 L1297.6 404.3 L1299.6 404.2 L1301.6 404.0 L1303.6 403.9 L1305.6 403.8 L1307.6 403.8 L1309.6 403.8 L1311.6 403.9 L1313.6 404.1 L1315.6 404.4 L1317.6 404.9 L1319.6 405.4 L1321.6 406.0 L1323.6 406.7 L1325.6 407.5 L1327.6 408.3 L1329.6 409.1 L1331.6 410.1 L1333.6 411.1 L1335.6 412.2 L1337.6 413.3 L1339.6 414.5 L1341.6 415.7 L1343.6 416.8 L1345.6 418.0 L1347.6 419.1 L1349.6 420.3 L1351.6 421.4 L1353.6 422.5 L1355.6 423.6 L1357.6 424.7 L1359.6 425.8 L1361.6 426.8 L1363.6 427.8 L1365.6 428.7 L1367.6 429.6 L1369.6 430.5 L1371.6 431.3 L1373.6 431.9 L1375.6 432.6 L1377.6 433.1 L1379.6 433.7 L1381.6 434.1 L1383.6 434.6 L1385.6 435.0 L1387.6 435.5 L1389.6 435.9 L1391.6 436.3 L1393.6 436.8 L1395.6 437.2 L1397.6 437.7 L1399.6 438.1 L1401.6 438.6 L1403.6 439.0 L1405.6 439.4 L1407.6 439.9 L1409.6 440.3 L1411.6 440.6 L1413.6 441.0 L1415.6 441.3 L1417.6 441.6 L1419.6 441.9 L1421.6 442.2 L1423.6 442.4 L1425.6 442.7 L1427.6 443.0 L1429.6 443.3 L1431.6 443.6 L1433.6 443.9 L1435.6 444.2 L1437.6 444.6 L1439.6 445.0 L1441.6 445.4 L1443.6 445.9 L1445.6 446.4 L1447.6 446.9 L1449.6 447.4 L1451.6 447.9 L1453.6 448.5 L1455.6 449.0 L1457.6 449.5 L1459.6 449.9 L1461.6 450.3 L1463.6 450.5 L1465.6 450.8 L1467.6 450.9 L1469.6 451.1 L1471.6 451.2 L1473.6 451.3 L1475.6 451.4 L1477.6 451.4 L1479.6 451.4 L1481.6 451.3 L1483.6 451.1 L1485.6 450.9 L1487.6 450.7 L1489.6 450.4 L1491.6 450.1 L1493.6 449.8 L1495.6 449.4 L1497.6 449.1 L1499.6 448.7 L1501.6 448.4 L1503.6 448.1 L1505.6 447.8 L1507.6 447.6 L1509.6 447.5 L1511.6 447.6 L1513.6 447.8 L1515.6 448.1 L1517.6 448.5 L1519.6 449.0 L1521.6 449.5 L1523.6 450.1 L1525.6 450.8 L1527.6 451.4 L1529.6 452.2 L1531.6 453.0 L1533.6 453.8 L1535.6 454.6 L1537.6 455.5 L1539.6 456.3 L1541.6 457.2 L1543.6 458.1 L1545.6 458.9 L1547.6 459.8 L1549.6 460.5 L1551.6 461.1 L1553.6 461.5 L1555.6 461.7 L1557.6 461.7 L1559.6 461.6 L1561.6 461.4 L1563.6 461.1 L1565.6 460.7 L1567.6 460.3 L1569.6 459.6 L1571.6 458.9 L1573.6 458.0 L1575.6 457.0 L1577.6 455.9 L1579.6 454.7 L1581.6 453.5 L1583.6 452.3 L1585.6 451.0 L1587.6 449.8 L1589.6 448.5 L1591.6 447.3 L1593.6 446.2 L1595.6 445.2 L1597.6 444.2 L1599.6 443.4 L1601.6 442.5 L1603.6 441.7 L1605.6 441.0 L1607.6 440.2 L1609.6 439.5 L1611.6 438.7 L1613.6 438.0 L1615.6 437.3 L1617.6 436.6 L1619.6 435.9 L1621.6 435.2 L1623.6 434.5 L1625.6 433.6 L1627.6 432.8 L1629.6 431.8 L1631.6 430.8 L1633.6 429.7 L1635.6 428.6 L1637.6 427.5 L1639.6 426.4 L1641.6 425.4 L1643.6 424.4 L1645.6 423.5 L1647.6 422.6 L1649.6 421.8 L1651.6 421.0 L1653.6 420.3 L1655.6 419.7 L1657.6 419.2 L1659.6 418.8 L1661.6 418.5 L1663.6 418.3 L1665.6 418.1 L1667.6 417.9 L1669.6 417.8 L1671.6 417.7 L1673.6 417.6 L1675.6 417.6 L1677.6 417.5 L1679.6 417.5 L1681.6 417.6 L1683.6 417.6 L1685.6 417.7 L1687.6 417.9 L1689.6 418.0 L1691.6 418.1 L1693.6 418.2 L1695.6 418.2 L1697.6 418.1 L1699.6 417.9 L1701.6 417.6 L1703.6 417.1 L1705.6 416.6 L1707.6 416.0 L1709.6 415.4 L1711.6 414.8 L1713.6 414.2 L1715.6 413.6 L1717.6 413.1 L1719.6 412.6 L1721.6 412.1 L1723.6 411.6 L1725.6 411.0 L1727.6 410.5 L1729.6 409.9 L1731.6 409.3 L1733.6 408.7 L1735.6 408.1 L1737.6 407.4 L1739.6 406.8 L1741.6 406.0 L1743.6 405.3 L1745.6 404.5 L1747.6 403.7 L1749.6 402.8 L1751.6 401.8 L1753.6 400.8 L1755.6 399.8 L1757.6 398.8 L1759.6 397.8 L1761.6 396.7 L1763.6 395.7 L1765.6 394.6 L1767.6 393.6 L1769.6 392.6 L1771.6 391.5 L1773.6 390.5 L1775.6 389.6 L1777.6 388.7 L1779.6 387.9 L1781.6 387.1 L1783.6 386.3 L1785.6 385.6 L1787.6 384.8 L1789.6 384.0 L1791.6 383.2 L1793.6 382.2 L1795.6 381.2 L1797.6 380.2 L1799.6 379.1 L1801.6 378.0 L1803.6 376.8 L1805.6 375.6 L1807.6 374.2 L1809.6 372.8 L1811.6 371.3 L1813.6 369.7 L1815.6 368.1 L1817.6 366.3 L1819.6 364.6 L1821.6 363.0 L1823.6 361.4 L1825.6 360.0 L1827.6 358.6 L1829.6 357.3 L1831.6 356.0 L1833.6 354.8 L1835.6 353.7 L1837.6 352.7 L1839.6 351.7 L1841.6 350.7 L1843.6 349.8 L1845.6 348.9 L1847.6 348.1 L1849.6 347.3 L1851.6 346.5 L1853.6 345.7 L1855.6 345.0 L1857.6 344.3 L1859.6 343.6 L1861.6 342.8 L1863.6 342.1 L1865.6 341.3 L1867.6 340.5 L1869.6 339.6 L1871.6 338.7 L1873.6 337.9 L1875.6 337.1 L1877.6 336.5 L1879.6 335.9 L1881.6 335.5 L1883.6 335.0 L1885.6 334.6 L1887.6 334.2 L1889.6 333.8 L1891.6 333.3 L1893.6 332.8 L1895.6 332.3 L1897.6 331.8 L1899.6 331.2 L1901.6 330.6 L1903.6 330.0 L1905.6 329.4 L1907.6 328.9 L1909.6 328.3 L1911.6 327.7 L1913.6 327.2 L1915.6 326.7 L1917.6 326.2 L1919.6 325.8 L1921.6 325.5 L1923.6 325.2 L1925.6 325.0 L1927.6 324.7 L1929.6 324.5 L1931.6 324.3 L1933.6 324.1 L1935.6 323.9 L1937.6 323.6 L1939.6 323.4 L1941.6 323.1 L1943.6 322.8 L1945.6 322.5 L1947.6 322.3 L1949.6 322.0 L1951.6 321.7 L1953.6 321.4 L1955.6 321.2 L1957.6 321.0 L1959.6 320.8 L1961.6 320.6 L1963.6 320.5 L1965.6 320.4 L1967.6 320.3 L1969.6 320.2 L1971.6 320.1 L1973.6 320.1 L1975.6 320.0 L1977.6 320.0 L1979.6 320.1 L1981.6 320.1 L1983.6 320.2 L1985.6 320.3 L1987.6 320.5 L1989.6 320.6 L1991.6 320.8 L1993.6 321.0 L1995.6 321.2 L1997.6 321.3 L1999.6 321.6 L2001.6 321.8 L2003.6 321.9 L2005.6 322.1 L2007.6 322.3 L2009.6 322.5 L2011.6 322.6 L2013.6 322.8 L2015.6 323.0 L2017.6 323.2 L2019.6 323.4 L2021.6 323.6 L2023.6 323.9 L2025.6 324.3 L2027.6 324.6 L2029.6 325.0 L2031.6 325.3 L2033.6 325.6 L2033.9 325.8" fill="none" stroke="#33b85c" stroke-width="1.75" stroke-linejoin="round"/>
<path d="M21.6 535.1 L23.6 534.7 L25.6 534.3 L27.6 533.9 L29.6 533.5 L31.6 533.3 L33.6 533.2 L35.6 533.1 L37.6 533.1 L39.6 533.1 L41.6 533.3 L43.6 533.7 L45.6 534.3 L47.6 534.9 L49.6 535.6 L51.6 536.3 L53.6 537.0 L55.6 537.7 L57.6 538.5 L59.6 539.2 L61.6 540.0 L63.6 540.8 L65.6 541.6 L67.6 542.5 L69.6 543.3 L71.6 544.0 L73.6 544.7 L75.6 545.3 L77.6 545.9 L79.6 546.4 L81.6 546.9 L83.6 547.3 L85.6 547.7 L87.6 548.2 L89.6 548.7 L91.6 549.2 L93.6 549.8 L95.6 550.6 L97.6 551.6 L99.6 552.8 L101.6 554.3 L103.6 555.8 L105.6 557.4 L107.6 558.8 L109.6 560.0 L111.6 560.9 L113.6 561.5 L115.6 561.7 L117.6 561.8 L119.6 561.8 L121.6 561.8 L123.6 561.8 L125.6 561.8 L127.6 561.7 L129.6 561.5 L131.6 561.1 L133.6 560.7 L135.6 560.1 L137.6 559.6 L139.6 558.9 L141.6 558.3 L143.6 557.5 L145.6 556.6 L147.6 555.6 L149.6 554.6 L151.6 553.6 L153.6 552.8 L155.6 552.3 L157.6 552.0 L159.6 552.0 L161.6 552.2 L163.6 552.5 L165.6 552.8 L167.6 553.3 L169.6 553.8 L171.6 554.4 L173.6 555.0 L175.6 555.6 L177.6 556.4 L179.6 557.3 L181.6 558.3 L183.6 559.5 L185.6 560.8 L187.6 562.3 L189.6 564.0 L191.6 566.0 L193.6 568.5 L195.6 571.3 L197.6 574.4 L199.6 577.9 L201.6 581.9 L203.6 586.6 L205.6 591.7 L207.6 596.7 L209.6 601.5 L211.6 605.6 L213.6 608.8 L215.6 611.3 L217.6 613.3 L219.6 615.0 L221.6 616.5 L223.6 617.9 L225.6 619.2 L227.6 620.5 L229.6 621.7 L231.6 623.1 L233.6 624.5 L235.6 625.9 L237.6 627.3 L239.6 628.7 L241.6 630.1 L243.6 631.5 L245.6 632.9 L247.6 634.4 L249.6 636.0 L251.6 637.7 L253.6 639.5 L255.6 641.6 L257.6 643.8 L259.6 646.3 L261.6 648.9 L263.6 651.5 L265.6 654.0 L267.6 656.4 L269.6 658.6 L271.6 660.6 L273.6 662.4 L275.6 664.1 L277.6 665.7 L279.6 667.2 L281.6 668.8 L283.6 670.3 L285.6 672.0 L287.6 673.7 L289.6 675.5 L291.6 677.6 L293.6 679.9 L295.6 682.3 L297.6 684.9 L299.6 687.5 L301.6 690.0 L303.6 692.5 L305.6 694.8 L307.6 696.8 L309.6 698.6 L311.6 700.2 L313.6 701.6 L315.6 703.0 L317.6 704.2 L319.6 705.3 L321.6 706.4 L323.6 707.5 L325.6 708.5 L327.6 709.5 L329.6 710.5 L331.6 711.5 L333.6 712.6 L335.6 713.7 L337.6 714.8 L339.6 715.8 L341.6 716.7 L343.6 717.5 L345.6 718.1 L347.6 718.5 L349.6 718.7 L351.6 718.8 L353.6 718.8 L355.6 718.8 L357.6 718.8 L359.6 718.8 L361.6 718.8 L363.6 718.7 L365.6 718.5 L367.6 718.0 L369.6 717.8 L371.6 718.5 L373.6 720.0 L375.6 721.9 L377.6 724.0 L379.6 725.9 L381.6 727.9 L383.6 729.8 L385.6 731.8 L387.6 733.8 L389.6 735.8 L391.6 737.9 L393.6 739.9 L395.6 742.0 L397.6 744.0 L399.6 746.0 L401.6 748.0 L403.6 750.1 L405.6 752.1 L407.6 754.1 L409.6 756.1 L411.6 758.1 L413.6 760.1 L415.6 762.1 L417.6 764.1 L419.6 766.0 L421.6 767.9 L423.6 769.8 L425.6 771.7 L427.6 773.6 L429.6 775.4 L431.6 777.2 L433.6 779.0 L435.6 780.8 L437.6 782.5 L439.6 784.3 L441.6 786.1 L443.6 787.9 L445.6 789.8 L447.6 791.4 L449.6 792.8 L451.6 794.0 L453.6 794.8 L455.6 795.3 L457.6 795.8 L459.6 796.1 L461.6 796.3 L463.6 796.3 L465.6 796.2 L467.6 795.9 L469.6 795.5 L471.6 795.0 L473.6 794.4 L475.6 793.8 L477.6 793.3 L479.6 792.7 L481.6 792.2 L483.6 791.6 L485.6 791.1 L487.6 790.5 L489.6 789.8 L491.6 789.2 L493.6 788.5 L495.6 787.8 L497.6 787.0 L499.6 786.2 L501.6 785.4 L503.6 784.5 L505.6 783.6 L507.6 782.9 L509.6 782.1 L511.6 781.5 L513.6 780.9 L515.6 780.4 L517.6 780.0 L519.6 779.5 L521.6 779.1 L523.6 778.6 L525.6 778.1 L527.6 777.6 L529.6 777.1 L531.6 776.5 L533.6 776.0 L535.6 775.3 L537.6 774.6 L539.6 773.8 L541.6 772.8 L543.6 771.6 L545.6 770.0 L547.6 768.3 L549.6 766.3 L551.6 764.3 L553.6 762.3 L555.6 760.2 L557.6 758.0 L559.6 755.8 L561.6 753.4 L563.6 751.0 L565.6 748.5 L567.6 745.9 L569.6 743.3 L571.6 740.6 L573.6 737.7 L575.6 734.8 L577.6 731.7 L579.6 728.6 L581.6 725.6 L583.6 722.5 L585.6 719.5 L587.6 716.4 L589.6 713.4 L591.6 710.3 L593.6 707.4 L595.6 704.4 L597.6 701.5 L599.6 698.6 L601.6 695.7 L603.6 693.0 L605.6 690.7 L607.6 688.7 L609.6 687.2 L611.6 685.9 L613.6 684.7 L615.6 683.7 L617.6 682.7 L619.6 681.6 L621.6 680.4 L623.6 679.0 L625.6 677.4 L627.6 675.7 L629.6 673.8 L631.6 671.9 L633.6 669.8 L635.6 667.6 L637.6 665.4 L639.6 663.1 L641.6 660.6 L643.6 658.0 L645.6 655.2 L647.6 652.3 L649.6 649.4 L651.6 646.5 L653.6 643.6 L655.6 640.8 L657.6 638.2 L659.6 635.7 L661.6 633.2 L663.6 630.8 L665.6 628.4 L667.6 626.0 L669.6 623.7 L671.6 621.4 L673.6 619.1 L675.6 616.8 L677.6 614.5 L679.6 612.2 L681.6 610.0 L683.6 607.8 L685.6 605.6 L687.6 603.5 L689.6 601.5 L691.6 599.5 L693.6 597.6 L695.6 595.7 L697.6 593.9 L699.6 592.1 L701.6 590.3 L703.6 588.6 L705.6 587.0 L707.6 585.5 L709.6 583.9 L711.6 582.5 L713.6 581.1 L715.6 580.0 L717.6 579.0 L719.6 578.3 L721.6 577.6 L723.6 577.0 L725.6 576.4 L727.6 575.6 L729.6 574.6 L731.6 573.0 L733.6 571.1 L735.6 568.8 L737.6 566.4 L739.6 564.0 L741.6 562.0 L743.6 560.5 L745.6 559.5 L747.6 558.9 L749.6 558.6 L751.6 558.3 L753.6 558.1 L755.6 557.9 L757.6 557.7 L759.6 557.4 L761.6 556.9 L763.6 556.2 L765.6 555.1 L767.6 553.6 L769.6 551.7 L771.6 549.6 L773.6 547.4 L775.6 545.2 L777.6 543.0 L779.6 541.0 L781.6 539.1 L783.6 537.5 L785.6 535.9 L787.6 534.4 L789.6 532.9 L791.6 531.4 L793.6 530.0 L795.6 528.7 L797.6 527.4 L799.6 526.2 L801.6 525.0 L803.6 524.0 L805.6 523.0 L807.6 522.0 L809.6 521.2 L811.6 520.3 L813.6 519.4 L815.6 518.5 L817.6 517.6 L819.6 516.5 L821.6 515.2 L823.6 513.9 L825.6 512.5 L827.6 511.2 L829.6 510.0 L831.6 509.2 L833.6 508.7 L835.6 508.6 L837.6 508.8 L839.6 509.3 L841.6 510.0 L843.6 510.8 L845.6 511.8 L847.6 512.9 L849.6 514.0 L851.6 515.2 L853.6 516.6 L855.6 518.2 L857.6 519.9 L859.6 521.9 L861.6 524.0 L863.6 526.1 L865.6 528.2 L867.6 530.3 L869.6 532.3 L871.6 534.2 L873.6 535.9 L875.6 537.7 L877.6 539.4 L879.6 541.0 L881.6 542.7 L883.6 544.3 L885.6 546.0 L887.6 547.6 L889.6 549.2 L891.6 550.9 L893.6 552.6 L895.6 554.4 L897.6 556.2 L899.6 558.0 L901.6 559.7 L903.6 561.2 L905.6 562.4 L907.6 563.5 L909.6 564.5 L911.6 565.3 L913.6 566.1 L915.6 566.8 L917.6 567.4 L919.6 567.9 L921.6 568.3 L923.6 568.4 L925.6 568.2 L927.6 567.8 L929.6 567.2 L931.6 566.3 L933.6 565.3 L935.6 564.0 L937.6 562.3 L939.6 560.3 L941.6 558.1 L943.6 555.8 L945.6 553.7 L947.6 551.7 L949.6 550.0 L951.6 548.4 L953.6 546.8 L955.6 545.3 L957.6 543.7 L959.6 542.2 L961.6 540.5 L963.6 538.8 L965.6 537.0 L967.6 535.2 L969.6 533.2 L971.6 531.1 L973.6 528.7 L975.6 526.2 L977.6 523.3 L979.6 520.2 L981.6 516.9 L983.6 513.5 L985.6 510.1 L987.6 506.7 L989.6 503.3 L991.6 500.1 L993.6 496.8 L995.6 493.5 L997.6 490.2 L999.6 486.9 L1001.6 483.7 L1003.6 480.6 L1005.6 477.6 L1007.6 474.7 L1009.6 471.9 L1011.6 469.1 L1013.6 466.4 L1015.6 463.8 L1017.6 461.2 L1019.6 458.8 L1021.6 456.4 L1023.6 454.1 L1025.6 451.9 L1027.6 449.8 L1029.6 447.7 L1031.6 445.7 L1033.6 443.8 L1035.6 441.9 L1037.6 439.9 L1039.6 438.0 L1041.6 436.1 L1043.6 434.1 L1045.6 432.2 L1047.6 430.3 L1049.6 428.4 L1051.6 426.5 L1053.6 424.5 L1055.6 422.5 L1057.6 420.3 L1059.6 418.0 L1061.6 415.3 L1063.6 412.5 L1065.6 409.4 L1067.6 406.2 L1069.6 403.0 L1071.6 399.9 L1073.6 396.9 L1075.6 394.1 L1077.6 391.7 L1079.6 389.5 L1081.6 387.4 L1083.6 385.4 L1085.6 383.3 L1087.6 380.8 L1089.6 377.9 L1091.6 374.3 L1093.6 370.3 L1095.6 366.2 L1097.6 362.4 L1099.6 359.3 L1101.6 356.7 L1103.6 354.4 L1105.6 352.5 L1107.6 351.0 L1109.6 349.8 L1111.6 348.9 L1113.6 348.1 L1115.6 347.4 L1117.6 346.9 L1119.6 346.5 L1121.6 346.2 L1123.6 346.0 L1125.6 345.8 L1127.6 345.7 L1129.6 345.6 L1131.6 345.6 L1133.6 345.5 L1135.6 345.4 L1137.6 345.3 L1139.6 345.2 L1141.6 345.1 L1143.6 344.9 L1145.6 344.6 L1147.6 344.2 L1149.6 343.7 L1151.6 343.3 L1153.6 342.9 L1155.6 342.5 L1157.6 342.2 L1159.6 341.9 L1161.6 341.9 L1163.6 342.0 L1165.6 342.4 L1167.6 343.0 L1169.6 343.7 L1171.6 344.5 L1173.6 345.4 L1175.6 346.3 L1177.6 347.1 L1179.6 347.8 L1181.6 348.3 L1183.6 348.8 L1185.6 349.1 L1187.6 349.5 L1189.6 349.8 L1191.6 350.0 L1193.6 350.3 L1195.6 350.6 L1197.6 351.0 L1199.6 351.3 L1201.6 351.8 L1203.6 352.2 L1205.6 352.8 L1207.6 353.3 L1209.6 354.0 L1211.6 354.7 L1213.6 355.5 L1215.6 356.4 L1217.6 357.6 L1219.6 359.0 L1221.6 360.8 L1223.6 362.7 L1225.6 364.7 L1227.6 366.7 L1229.6 368.5 L1231.6 370.1 L1233.6 371.7 L1235.6 373.2 L1237.6 374.6 L1239.6 375.8 L1241.6 376.9 L1243.6 377.8 L1245.6 378.4 L1247.6 379.0 L1249.6 379.4 L1251.6 379.8 L1253.6 380.1 L1255.6 380.3 L1257.6 380.3 L1259.6 379.9 L1261.6 379.2 L1263.6 378.4 L1265.6 377.5 L1267.6 376.9 L1269.6 376.7 L1271.6 377.0 L1273.6 377.5 L1275.6 378.3 L1277.6 379.2 L1279.6 380.1 L1281.6 380.8 L1283.6 381.3 L1285.6 381.5 L1287.6 381.7 L1289.6 381.8 L1291.6 381.9 L1293.6 382.0 L1295.6 382.1 L1297.6 382.2 L1299.6 382.4 L1301.6 382.6 L1303.6 383.0 L1305.6 383.4 L1307.6 384.0 L1309.6 384.7 L1311.6 385.5 L1313.6 386.4 L1315.6 387.5 L1317.6 388.9 L1319.6 390.6 L1321.6 392.4 L1323.6 394.4 L1325.6 396.5 L1327.6 398.7 L1329.6 401.0 L1331.6 403.5 L1333.6 406.2 L1335.6 409.0 L1337.6 411.7 L1339.6 414.5 L1341.6 417.0 L1343.6 419.4 L1345.6 421.6 L1347.6 423.7 L1349.6 425.7 L1351.6 427.7 L1353.6 429.6 L1355.6 431.5 L1357.6 433.5 L1359.6 435.6 L1361.6 437.8 L1363.6 440.1 L1365.6 442.5 L1367.6 444.9 L1369.6 447.2 L1371.6 449.2 L1373.6 451.0 L1375.6 452.6 L1377.6 454.0 L1379.6 455.4 L1381.6 456.6 L1383.6 457.7 L1385.6 458.7 L1387.6 459.5 L1389.6 460.3 L1391.6 461.1 L1393.6 461.8 L1395.6 462.5 L1397.6 463.0 L1399.6 463.5 L1401.6 463.8 L1403.6 464.1 L1405.6 464.3 L1407.6 464.4 L1409.6 464.5 L1411.6 464.6 L1413.6 464.7 L1415.6 464.8 L1417.6 464.9 L1419.6 465.1 L1421.6 465.2 L1423.6 465.4 L1425.6 465.5 L1427.6 465.7 L1429.6 465.9 L1431.6 466.1 L1433.6 466.2 L1435.6 466.3 L1437.6 466.5 L1439.6 466.5 L1441.6 466.6 L1443.6 466.7 L1445.6 466.8 L1447.6 467.0 L1449.6 467.2 L1451.6 467.7 L1453.6 468.3 L1455.6 469.0 L1457.6 469.8 L1459.6 470.6 L1461.6 471.4 L1463.6 472.2 L1465.6 473.0 L1467.6 473.7 L1469.6 474.2 L1471.6 474.5 L1473.6 474.4 L1475.6 474.1 L1477.6 473.5 L1479.6 472.8 L1481.6 472.0 L1483.6 471.1 L1485.6 470.2 L1487.6 469.1 L1489.6 467.9 L1491.6 466.6 L1493.6 465.2 L1495.6 463.9 L1497.6 462.7 L1499.6 461.5 L1501.6 460.4 L1503.6 459.4 L1505.6 458.4 L1507.6 457.7 L1509.6 457.3 L1511.6 457.2 L1513.6 457.4 L1515.6 457.6 L1517.6 457.9 L1519.6 458.3 L1521.6 458.9 L1523.6 459.6 L1525.6 460.7 L1527.6 462.2 L1529.6 463.8 L1531.6 465.6 L1533.6 467.5 L1535.6 469.3 L1537.6 471.2 L1539.6 473.2 L1541.6 475.3 L1543.6 477.4 L1545.6 479.4 L1547.6 481.4 L1549.6 483.2 L1551.6 484.9 L1553.6 486.1 L1555.6 486.5 L1557.6 486.4 L1559.6 485.8 L1561.6 485.1 L1563.6 484.1 L1565.6 482.7 L1567.6 480.8 L1569.6 478.5 L1571.6 476.0 L1573.6 473.3 L1575.6 470.5 L1577.6 467.4 L1579.6 464.0 L1581.6 460.5 L1583.6 457.1 L1585.6 453.8 L1587.6 450.6 L1589.6 447.4 L1591.6 444.5 L1593.6 441.8 L1595.6 439.5 L1597.6 437.4 L1599.6 435.5 L1601.6 433.8 L1603.6 432.1 L1605.6 430.6 L1607.6 429.1 L1609.6 427.8 L1611.6 426.5 L1613.6 425.3 L1615.6 424.1 L1617.6 422.9 L1619.6 421.6 L1621.6 420.2 L1623.6 418.7 L1625.6 417.0 L1627.6 415.3 L1629.6 413.5 L1631.6 411.6 L1633.6 409.7 L1635.6 407.6 L1637.6 405.3 L1639.6 403.0 L1641.6 400.6 L1643.6 398.3 L1645.6 396.1 L1647.6 394.1 L1649.6 392.2 L1651.6 390.4 L1653.6 388.8 L1655.6 387.6 L1657.6 386.8 L1659.6 386.3 L1661.6 385.9 L1663.6 385.7 L1665.6 385.5 L1667.6 385.5 L1669.6 385.7 L1671.6 386.1 L1673.6 386.7 L1675.6 387.5 L1677.6 388.2 L1679.6 389.1 L1681.6 390.0 L1683.6 391.1 L1685.6 392.4 L1687.6 393.7 L1689.6 394.9 L1691.6 395.9 L1693.6 396.5 L1695.6 396.9 L1697.6 397.2 L1699.6 397.4 L1701.6 397.5 L1703.6 397.5 L1705.6 397.1 L1707.6 396.4 L1709.6 395.4 L1711.6 394.3 L1713.6 393.3 L1715.6 392.2 L1717.6 391.0 L1719.6 389.8 L1721.6 388.7 L1723.6 387.6 L1725.6 386.6 L1727.6 385.8 L1729.6 385.1 L1731.6 384.5 L1733.6 384.0 L1735.6 383.5 L1737.6 382.8 L1739.6 382.1 L1741.6 381.3 L1743.6 380.3 L1745.6 379.3 L1747.6 378.1 L1749.6 376.8 L1751.6 375.5 L1753.6 374.1 L1755.6 372.6 L1757.6 370.9 L1759.6 369.2 L1761.6 367.4 L1763.6 365.5 L1765.6 363.6 L1767.6 361.6 L1769.6 359.6 L1771.6 357.5 L1773.6 355.3 L1775.6 353.3 L1777.6 351.4 L1779.6 349.8 L1781.6 348.4 L1783.6 347.2 L1785.6 346.1 L1787.6 344.9 L1789.6 343.7 L1791.6 342.4 L1793.6 341.1 L1795.6 339.7 L1797.6 338.2 L1799.6 336.7 L1801.6 335.2 L1803.6 333.7 L1805.6 332.0 L1807.6 330.0 L1809.6 327.7 L1811.6 324.9 L1813.6 321.8 L1815.6 318.6 L1817.6 315.5 L1819.6 312.3 L1821.6 309.3 L1823.6 306.5 L1825.6 303.9 L1827.6 301.6 L1829.6 299.5 L1831.6 297.8 L1833.6 296.4 L1835.6 295.3 L1837.6 294.3 L1839.6 293.5 L1841.6 292.7 L1843.6 292.1 L1845.6 291.6 L1847.6 291.1 L1849.6 290.7 L1851.6 290.4 L1853.6 290.0 L1855.6 289.7 L1857.6 289.5 L1859.6 289.3 L1861.6 289.0 L1863.6 288.8 L1865.6 288.4 L1867.6 287.8 L1869.6 286.9 L1871.6 286.0 L1873.6 285.1 L1875.6 284.3 L1877.6 283.7 L1879.6 283.3 L1881.6 283.2 L1883.6 283.4 L1885.6 283.9 L1887.6 284.4 L1889.6 285.0 L1891.6 285.5 L1893.6 285.9 L1895.6 286.3 L1897.6 286.4 L1899.6 286.2 L1901.6 285.7 L1903.6 285.2 L1905.6 284.7 L1907.6 284.3 L1909.6 283.9 L1911.6 283.6 L1913.6 283.3 L1915.6 283.1 L1917.6 283.0 L1919.6 283.0 L1921.6 283.1 L1923.6 283.2 L1925.6 283.4 L1927.6 283.7 L1929.6 284.2 L1931.6 285.0 L1933.6 286.2 L1935.6 287.3 L1937.6 288.0 L1939.6 288.3 L1941.6 288.3 L1943.6 288.1 L1945.6 288.0 L1947.6 287.8 L1949.6 287.7 L1951.6 287.7 L1953.6 287.8 L1955.6 287.9 L1957.6 288.2 L1959.6 288.5 L1961.6 288.8 L1963.6 289.1 L1965.6 289.4 L1967.6 289.8 L1969.6 290.1 L1971.6 290.5 L1973.6 290.9 L1975.6 291.3 L1977.6 291.9 L1979.6 292.5 L1981.6 293.2 L1983.6 294.0 L1985.6 294.9 L1987.6 295.9 L1989.6 296.9 L1991.6 298.0 L1993.6 299.1 L1995.6 300.3 L1997.6 301.5 L1999.6 302.6 L2001.6 303.6 L2003.6 304.5 L2005.6 305.4 L2007.6 306.2 L2009.6 307.0 L2011.6 307.7 L2013.6 308.4 L2015.6 309.0 L2017.6 309.7 L2019.6 310.7 L2021.6 312.0 L2023.6 313.7 L2025.6 315.4 L2027.6 317.1 L2029.6 318.6 L2031.6 319.8 L2033.6 320.8 L2033.9 321.2" fill="none" stroke="#e03a55" stroke-width="1.75" stroke-linejoin="round"/>
<path d="M21.6 453.7 V484.1M21.6 470.9 h-2.8M21.6 470.9 h2.8M30.5 483.4 V523.8M30.5 483.4 h-2.8M30.5 516.5 h2.8M46.3 523.1 V551.9M46.3 533.7 h-2.8M46.3 551.9 h2.8M55.3 533.7 V559.5M55.3 533.7 h-2.8M55.3 559.5 h2.8M62.5 523.8 V546.2M62.5 541.0 h-2.8M62.5 533.7 h2.8M70.5 533.7 V551.9M70.5 537.6 h-2.8M70.5 546.9 h2.8M77.7 546.2 V604.7M77.7 546.2 h-2.8M77.7 587.2 h2.8M86.7 558.5 V593.8M86.7 581.6 h-2.8M86.7 586.6 h2.8M93.9 546.2 V569.4M93.9 547.6 h-2.8M93.9 558.5 h2.8M102.2 569.4 V604.7M102.2 586.6 h-2.8M102.2 603.8 h2.8M109.8 588.2 V617.0M109.8 599.1 h-2.8M109.8 616.3 h2.8M118.1 580.9 V604.7M118.1 593.2 h-2.8M118.1 587.2 h2.8M126.3 551.9 V570.0M126.3 568.4 h-2.8M126.3 558.5 h2.8M133.9 534.3 V581.6M133.9 576.6 h-2.8M133.9 538.6 h2.8M142.2 546.2 V564.1M142.2 560.1 h-2.8M142.2 546.9 h2.8M150.1 500.6 V551.9M150.1 550.2 h-2.8M150.1 505.6 h2.8M158.4 516.5 V558.5M158.4 527.1 h-2.8M158.4 537.0 h2.8M165.7 516.5 V564.1M165.7 540.3 h-2.8M165.7 558.5 h2.8M174.3 569.4 V586.6M174.3 580.6 h-2.8M174.3 570.0 h2.8M182.5 569.4 V599.1M182.5 576.0 h-2.8M182.5 587.2 h2.8M190.1 593.2 V621.3M190.1 598.1 h-2.8M190.1 608.0 h2.8M198.4 633.5 V674.2M198.4 634.5 h-2.8M198.4 661.9 h2.8M206.3 679.1 V761.7M206.3 685.7 h-2.8M206.3 761.7 h2.8M214.3 748.5 V826.2M214.3 803.1 h-2.8M214.3 779.9 h2.8M221.9 708.9 V766.7M221.9 755.1 h-2.8M221.9 719.4 h2.8M229.8 661.9 V697.3M229.8 686.4 h-2.8M229.8 669.2 h2.8M237.1 638.8 V686.4M237.1 679.1 h-2.8M237.1 656.0 h2.8M245.7 686.4 V703.9M245.7 687.4 h-2.8M245.7 691.7 h2.8M254.2 679.1 V714.8M254.2 691.7 h-2.8M254.2 708.9 h2.8M261.8 703.9 V732.0M261.8 708.9 h-2.8M261.8 727.0 h2.8M270.8 727.0 V761.7M270.8 737.0 h-2.8M270.8 761.7 h2.8M277.4 691.7 V743.6M277.4 743.6 h-2.8M277.4 714.8 h2.8M286.0 719.4 V737.9M286.0 720.4 h-2.8M286.0 737.0 h2.8M293.2 732.0 V761.7M293.2 755.1 h-2.8M293.2 755.1 h2.8M301.5 749.2 V785.5M301.5 750.2 h-2.8M301.5 780.9 h2.8M309.1 766.7 V798.1M309.1 779.9 h-2.8M309.1 791.5 h2.8M317.7 732.0 V767.7M317.7 763.4 h-2.8M317.7 743.6 h2.8M326.3 749.2 V780.9M326.3 750.2 h-2.8M326.3 761.7 h2.8M333.9 755.1 V779.9M333.9 761.7 h-2.8M333.9 761.7 h2.8M342.2 727.0 V755.1M342.2 737.0 h-2.8M342.2 748.5 h2.8M349.4 743.6 V755.1M349.4 754.5 h-2.8M349.4 745.2 h2.8M357.7 719.4 V749.2M357.7 748.5 h-2.8M357.7 720.4 h2.8M365.0 703.9 V749.2M365.0 743.6 h-2.8M365.0 708.9 h2.8M373.3 703.9 V755.1M373.3 708.9 h-2.8M373.3 744.6 h2.8M382.2 743.6 V785.5M382.2 755.1 h-2.8M382.2 784.9 h2.8M389.5 779.9 V815.3M389.5 780.9 h-2.8M389.5 798.1 h2.8M398.1 797.4 V849.3M398.1 826.2 h-2.8M398.1 809.7 h2.8M405.4 790.8 V826.2M405.4 791.5 h-2.8M405.4 825.2 h2.8M413.6 814.6 V855.9M413.6 815.3 h-2.8M413.6 849.3 h2.8M421.2 831.2 V860.9M421.2 843.7 h-2.8M421.2 860.2 h2.8M429.5 808.0 V843.7M429.5 837.8 h-2.8M429.5 826.2 h2.8M437.1 814.6 V837.8M437.1 815.3 h-2.8M437.1 831.2 h2.8M445.7 831.2 V860.9M445.7 842.7 h-2.8M445.7 860.2 h2.8M453.9 843.7 V879.1M453.9 849.3 h-2.8M453.9 877.4 h2.8M461.5 820.6 V838.4M461.5 826.2 h-2.8M461.5 820.6 h2.8M469.5 766.7 V798.1M469.5 791.5 h-2.8M469.5 779.9 h2.8M476.7 766.7 V798.1M476.7 781.6 h-2.8M476.7 779.9 h2.8M485.3 743.6 V779.9M485.3 761.7 h-2.8M485.3 773.3 h2.8M492.6 732.0 V773.3M492.6 737.0 h-2.8M492.6 773.3 h2.8M501.2 743.6 V761.7M501.2 748.5 h-2.8M501.2 745.2 h2.8M510.1 726.0 V755.1M510.1 754.5 h-2.8M510.1 750.2 h2.8M517.1 749.2 V773.3M517.1 750.2 h-2.8M517.1 766.7 h2.8M525.3 743.6 V767.7M525.3 744.6 h-2.8M525.3 745.2 h2.8M532.9 773.3 V803.1M532.9 779.9 h-2.8M532.9 774.3 h2.8M540.9 726.0 V749.2M540.9 728.7 h-2.8M540.9 748.5 h2.8M548.8 713.8 V744.6M548.8 732.0 h-2.8M548.8 715.5 h2.8M556.7 661.9 V708.9M556.7 708.9 h-2.8M556.7 662.6 h2.8M564.0 644.4 V661.9M564.0 659.3 h-2.8M564.0 644.7 h2.8M572.9 621.3 V644.4M572.9 634.5 h-2.8M572.9 632.8 h2.8M581.5 615.7 V638.8M581.5 632.8 h-2.8M581.5 626.2 h2.8M588.8 586.6 V626.9M588.8 625.6 h-2.8M588.8 598.1 h2.8M597.1 576.0 V604.7M597.1 598.1 h-2.8M597.1 587.2 h2.8M613.6 603.8 V634.5M613.6 609.7 h-2.8M613.6 633.5 h2.8M620.2 638.8 V662.6M620.2 651.0 h-2.8M620.2 651.0 h2.8M629.1 593.2 V638.8M629.1 638.8 h-2.8M629.1 594.8 h2.8M636.1 580.9 V610.4M636.1 583.3 h-2.8M636.1 599.1 h2.8M644.7 533.7 V569.4M644.7 563.4 h-2.8M644.7 541.0 h2.8M653.2 523.8 V551.9M653.2 541.0 h-2.8M653.2 533.7 h2.8M660.5 511.2 V534.3M660.5 523.8 h-2.8M660.5 523.8 h2.8M669.1 523.8 V558.5M669.1 546.2 h-2.8M669.1 551.9 h2.8M676.4 528.7 V564.1M676.4 546.9 h-2.8M676.4 533.7 h2.8M684.6 500.6 V534.3M684.6 523.8 h-2.8M684.6 512.2 h2.8M692.2 483.4 V523.8M692.2 500.6 h-2.8M692.2 523.1 h2.8M700.5 528.7 V569.4M700.5 541.0 h-2.8M700.5 541.9 h2.8M708.8 523.8 V558.5M708.8 541.9 h-2.8M708.8 543.6 h2.8M716.7 494.0 V569.4M716.7 541.9 h-2.8M716.7 500.0 h2.8M725.3 516.5 V551.9M725.3 546.9 h-2.8M725.3 533.7 h2.8M732.3 516.3 V563.6M732.3 528.9 h-2.8M732.3 558.6 h2.8M740.9 435.7 V482.6M740.9 458.8 h-2.8M740.9 471.0 h2.8M748.2 458.8 V505.7M748.2 474.3 h-2.8M748.2 505.7 h2.8M756.4 516.3 V558.6M756.4 522.2 h-2.8M756.4 546.0 h2.8M772.6 482.6 V528.9M772.6 517.3 h-2.8M772.6 489.2 h2.8M780.9 446.9 V523.9M780.9 494.2 h-2.8M780.9 452.8 h2.8M788.5 446.9 V500.8M788.5 466.1 h-2.8M788.5 482.6 h2.8M796.8 441.3 V482.6M796.8 476.0 h-2.8M796.8 471.0 h2.8M804.4 430.4 V482.6M804.4 430.4 h-2.8M804.4 471.0 h2.8M812.3 482.6 V511.7M812.3 500.8 h-2.8M812.3 494.2 h2.8M819.9 458.8 V488.5M819.9 466.1 h-2.8M819.9 476.0 h2.8M828.8 458.8 V494.2M828.8 476.0 h-2.8M828.8 459.4 h2.8M836.7 464.4 V494.2M836.7 489.2 h-2.8M836.7 476.0 h2.8M844.0 516.3 V563.6M844.0 522.2 h-2.8M844.0 558.6 h2.8M852.6 522.9 V546.0M852.6 540.4 h-2.8M852.6 540.4 h2.8M859.9 557.9 V586.7M859.9 563.6 h-2.8M859.9 575.1 h2.8M868.5 586.7 V609.8M868.5 587.7 h-2.8M868.5 608.8 h2.8M875.8 581.1 V621.4M875.8 608.8 h-2.8M875.8 593.3 h2.8M883.7 593.3 V621.4M883.7 599.9 h-2.8M883.7 598.3 h2.8M891.3 557.9 V621.4M891.3 563.6 h-2.8M891.3 621.4 h2.8M900.2 604.2 V627.4M900.2 609.8 h-2.8M900.2 626.4 h2.8M908.5 615.8 V644.5M908.5 627.4 h-2.8M908.5 627.4 h2.8M916.1 593.3 V615.8M916.1 609.8 h-2.8M916.1 594.3 h2.8M924.7 568.5 V586.7M924.7 570.2 h-2.8M924.7 586.7 h2.8M931.6 540.4 V586.7M931.6 575.1 h-2.8M931.6 546.0 h2.8M940.5 500.8 V534.8M940.5 522.9 h-2.8M940.5 505.7 h2.8M947.1 465.4 V500.8M947.1 494.2 h-2.8M947.1 466.1 h2.8M955.7 458.8 V488.5M955.7 482.6 h-2.8M955.7 471.0 h2.8M964.3 452.8 V494.2M964.3 459.4 h-2.8M964.3 489.2 h2.8M972.3 435.7 V484.2M972.3 466.1 h-2.8M972.3 441.3 h2.8M980.2 372.9 V413.2M980.2 413.2 h-2.8M980.2 390.7 h2.8M987.8 390.7 V424.7M987.8 396.0 h-2.8M987.8 406.6 h2.8M996.1 366.2 V401.6M996.1 390.0 h-2.8M996.1 366.9 h2.8M1003.3 348.7 V384.1M1003.3 355.3 h-2.8M1003.3 378.5 h2.8M1012.3 348.7 V384.1M1012.3 349.7 h-2.8M1012.3 380.1 h2.8M1019.9 348.7 V378.5M1019.9 361.0 h-2.8M1019.9 350.4 h2.8M1028.5 366.2 V384.1M1028.5 367.6 h-2.8M1028.5 378.5 h2.8M1036.4 355.3 V396.0M1036.4 390.7 h-2.8M1036.4 361.0 h2.8M1043.7 348.7 V396.0M1043.7 396.0 h-2.8M1043.7 361.0 h2.8M1051.6 348.7 V384.1M1051.6 378.5 h-2.8M1051.6 349.7 h2.8M1059.5 320.6 V361.0M1059.5 355.3 h-2.8M1059.5 337.2 h2.8M1067.8 285.3 V331.2M1067.8 325.6 h-2.8M1067.8 290.9 h2.8M1075.1 262.1 V296.8M1075.1 267.7 h-2.8M1075.1 280.3 h2.8M1091.3 238.3 V285.6M1091.3 284.6 h-2.8M1091.3 262.5 h2.8M1099.6 245.3 V274.0M1099.6 273.4 h-2.8M1099.6 250.9 h2.8M1108.2 238.3 V268.1M1108.2 250.9 h-2.8M1108.2 250.9 h2.8M1115.4 256.8 V326.2M1115.4 256.8 h-2.8M1115.4 313.7 h2.8M1123.7 291.2 V344.1M1123.7 303.8 h-2.8M1123.7 331.9 h2.8M1131.3 326.2 V356.0M1131.3 331.9 h-2.8M1131.3 331.9 h2.8M1139.2 349.4 V373.2M1139.2 356.0 h-2.8M1139.2 356.0 h2.8M1146.8 338.5 V366.6M1146.8 365.9 h-2.8M1146.8 349.4 h2.8M1155.1 303.1 V338.5M1155.1 326.2 h-2.8M1155.1 321.0 h2.8M1164.4 303.1 V331.9M1164.4 313.7 h-2.8M1164.4 331.9 h2.8M1171.6 356.0 V379.1M1171.6 373.2 h-2.8M1171.6 373.2 h2.8M1179.9 349.4 V366.6M1179.9 356.0 h-2.8M1179.9 360.0 h2.8M1187.2 343.4 V384.7M1187.2 378.1 h-2.8M1187.2 361.6 h2.8M1195.4 366.6 V396.3M1195.4 384.7 h-2.8M1195.4 395.7 h2.8M1203.0 349.4 V384.7M1203.0 373.2 h-2.8M1203.0 350.0 h2.8M1211.3 366.6 V418.8M1211.3 396.3 h-2.8M1211.3 373.2 h2.8M1218.9 338.5 V391.4M1218.9 350.0 h-2.8M1218.9 390.4 h2.8M1227.2 413.5 V459.1M1227.2 414.5 h-2.8M1227.2 448.5 h2.8M1235.4 431.0 V459.1M1235.4 436.0 h-2.8M1235.4 441.9 h2.8M1243.4 406.9 V454.2M1243.4 449.2 h-2.8M1243.4 418.8 h2.8M1251.6 406.9 V431.0M1251.6 412.8 h-2.8M1251.6 412.8 h2.8M1258.9 383.8 V396.3M1258.9 389.7 h-2.8M1258.9 384.7 h2.8M1267.5 320.3 V390.4M1267.5 389.7 h-2.8M1267.5 338.5 h2.8M1274.8 343.4 V401.3M1274.8 355.0 h-2.8M1274.8 395.7 h2.8M1283.0 383.8 V436.0M1283.0 384.7 h-2.8M1283.0 418.8 h2.8M1291.3 378.1 V401.3M1291.3 395.7 h-2.8M1291.3 379.1 h2.8M1299.2 360.9 V384.7M1299.2 361.6 h-2.8M1299.2 383.1 h2.8M1307.8 383.8 V401.3M1307.8 384.7 h-2.8M1307.8 395.7 h2.8M1315.1 396.3 V441.9M1315.1 406.2 h-2.8M1315.1 436.0 h2.8M1323.7 413.5 V448.5M1323.7 424.4 h-2.8M1323.7 447.5 h2.8M1331.3 477.3 V500.4M1331.3 477.3 h-2.8M1331.3 499.4 h2.8M1339.5 493.8 V529.2M1339.5 512.0 h-2.8M1339.5 528.5 h2.8M1346.8 493.8 V517.0M1346.8 507.0 h-2.8M1346.8 500.4 h2.8M1355.1 482.9 V529.2M1355.1 512.0 h-2.8M1355.1 523.6 h2.8M1363.3 512.0 V558.3M1363.3 512.0 h-2.8M1363.3 552.3 h2.8M1370.9 517.0 V569.8M1370.9 564.2 h-2.8M1370.9 523.6 h2.8M1379.2 488.9 V529.2M1379.2 507.0 h-2.8M1379.2 500.4 h2.8M1386.5 454.2 V493.8M1386.5 483.9 h-2.8M1386.5 483.9 h2.8M1395.1 459.1 V512.0M1395.1 465.7 h-2.8M1395.1 500.4 h2.8M1403.0 500.4 V523.6M1403.0 510.3 h-2.8M1403.0 510.3 h2.8M1410.9 465.7 V517.0M1410.9 500.4 h-2.8M1410.9 467.4 h2.8M1419.5 449.2 V488.9M1419.5 465.7 h-2.8M1419.5 459.1 h2.8M1426.8 431.0 V482.9M1426.8 442.6 h-2.8M1426.8 477.3 h2.8M1435.1 448.5 V471.7M1435.1 454.2 h-2.8M1435.1 465.7 h2.8M1442.7 459.1 V500.4M1442.7 477.3 h-2.8M1442.7 467.4 h2.8M1450.0 448.2 V493.5M1450.0 459.4 h-2.8M1450.0 488.5 h2.8M1457.9 448.2 V493.5M1457.9 483.6 h-2.8M1457.9 460.4 h2.8M1466.2 493.5 V534.8M1466.2 529.8 h-2.8M1466.2 501.1 h2.8M1474.1 477.0 V517.6M1474.1 511.7 h-2.8M1474.1 477.0 h2.8M1482.1 436.3 V459.4M1482.1 453.8 h-2.8M1482.1 442.2 h2.8M1491.0 413.2 V453.8M1491.0 419.1 h-2.8M1491.0 442.2 h2.8M1498.6 413.2 V431.7M1498.6 420.8 h-2.8M1498.6 422.4 h2.8M1506.8 391.0 V407.5M1506.8 391.0 h-2.8M1506.8 401.9 h2.8M1514.1 400.9 V459.4M1514.1 430.7 h-2.8M1514.1 453.8 h2.8M1522.4 459.4 V495.1M1522.4 483.6 h-2.8M1522.4 465.4 h2.8M1530.0 505.0 V529.8M1530.0 516.6 h-2.8M1530.0 523.2 h2.8M1538.2 483.6 V553.0M1538.2 529.8 h-2.8M1538.2 501.7 h2.8M1545.5 534.8 V569.5M1545.5 546.4 h-2.8M1545.5 541.4 h2.8M1554.1 581.1 V622.4M1554.1 617.4 h-2.8M1554.1 599.2 h2.8M1562.4 453.8 V569.5M1562.4 569.5 h-2.8M1562.4 477.0 h2.8M1570.3 391.0 V465.4M1570.3 448.9 h-2.8M1570.3 405.9 h2.8M1578.6 280.3 V391.0M1578.6 290.2 h-2.8M1578.6 361.3 h2.8M1586.2 326.6 V384.4M1586.2 377.8 h-2.8M1586.2 333.2 h2.8M1594.4 245.6 V349.7M1594.4 308.4 h-2.8M1594.4 310.0 h2.8M1601.7 320.9 V361.3M1601.7 329.9 h-2.8M1601.7 360.3 h2.8M1610.0 330.5 V384.4M1610.0 343.1 h-2.8M1610.0 372.8 h2.8M1618.9 355.7 V396.0M1618.9 372.8 h-2.8M1618.9 391.0 h2.8M1626.5 343.8 V391.0M1626.5 377.8 h-2.8M1626.5 355.7 h2.8M1634.1 348.0 V349.4M1634.1 348.7 h-2.8M1634.1 348.7 h2.8M1641.7 290.9 V332.2M1641.7 308.4 h-2.8M1641.7 291.9 h2.8M1650.3 303.4 V332.2M1650.3 304.1 h-2.8M1650.3 313.3 h2.8M1657.6 330.5 V407.5M1657.6 396.0 h-2.8M1657.6 338.1 h2.8M1666.2 355.7 V378.8M1666.2 361.3 h-2.8M1666.2 377.8 h2.8M1673.8 391.0 V407.5M1673.8 396.0 h-2.8M1673.8 396.0 h2.8M1682.0 384.4 V419.1M1682.0 391.0 h-2.8M1682.0 418.5 h2.8M1691.3 407.5 V448.9M1691.3 414.2 h-2.8M1691.3 448.2 h2.8M1697.9 401.9 V471.3M1697.9 424.1 h-2.8M1697.9 470.3 h2.8M1706.1 391.0 V442.2M1706.1 437.3 h-2.8M1706.1 396.0 h2.8M1713.4 355.7 V401.9M1713.4 400.9 h-2.8M1713.4 361.3 h2.8M1722.3 326.6 V361.3M1722.3 360.3 h-2.8M1722.3 338.1 h2.8M1729.9 320.9 V349.7M1729.9 338.1 h-2.8M1729.9 349.0 h2.8M1738.2 355.7 V384.4M1738.2 356.3 h-2.8M1738.2 372.8 h2.8M1746.5 330.5 V372.8M1746.5 361.3 h-2.8M1746.5 338.1 h2.8M1753.7 313.3 V349.7M1753.7 320.0 h-2.8M1753.7 338.1 h2.8M1762.3 303.4 V320.9M1762.3 304.1 h-2.8M1762.3 310.0 h2.8M1768.9 263.1 V309.4M1768.9 296.8 h-2.8M1768.9 273.7 h2.8M1777.9 256.5 V291.9M1777.9 290.9 h-2.8M1777.9 262.1 h2.8M1785.5 238.3 V296.8M1785.5 268.7 h-2.8M1785.5 290.9 h2.8M1793.1 295.8 V326.0M1793.1 325.5 h-2.8M1793.1 303.5 h2.8M1800.5 220.7 V281.0M1800.5 233.6 h-2.8M1800.5 273.4 h2.8M1809.3 245.4 V273.4M1809.3 273.4 h-2.8M1809.3 263.2 h2.8M1818.3 185.6 V239.1M1818.3 221.2 h-2.8M1818.3 186.1 h2.8M1825.2 152.7 V210.3M1825.2 157.6 h-2.8M1825.2 203.4 h2.8M1834.3 209.7 V239.1M1834.3 238.3 h-2.8M1834.3 221.2 h2.8M1841.1 245.4 V281.0M1841.1 255.5 h-2.8M1841.1 273.4 h2.8M1849.9 238.3 V273.4M1849.9 255.5 h-2.8M1849.9 272.8 h2.8M1856.7 245.4 V292.0M1856.7 245.9 h-2.8M1856.7 286.5 h2.8M1865.5 267.9 V296.7M1865.5 280.2 h-2.8M1865.5 285.7 h2.8M1872.6 238.3 V268.4M1872.6 255.5 h-2.8M1872.6 245.9 h2.8M1881.4 245.4 V281.0M1881.4 280.2 h-2.8M1881.4 250.0 h2.8M1890.2 267.9 V321.4M1890.2 268.4 h-2.8M1890.2 308.5 h2.8M1897.3 303.5 V339.2M1897.3 308.5 h-2.8M1897.3 332.3 h2.8M1906.1 262.4 V309.0M1906.1 308.5 h-2.8M1906.1 263.2 h2.8M1913.0 245.4 V273.4M1913.0 255.5 h-2.8M1913.0 268.4 h2.8M1921.7 267.9 V296.7M1921.7 291.2 h-2.8M1921.7 274.7 h2.8M1928.9 262.4 V303.5M1928.9 262.9 h-2.8M1928.9 295.8 h2.8M1937.6 308.5 V339.2M1937.6 325.5 h-2.8M1937.6 331.0 h2.8M1945.9 273.4 V344.1M1945.9 343.3 h-2.8M1945.9 291.2 h2.8M1953.3 267.9 V303.5M1953.3 280.2 h-2.8M1953.3 268.4 h2.8M1961.8 273.4 V309.0M1961.8 291.2 h-2.8M1961.8 303.5 h2.8M1968.9 303.0 V326.8M1968.9 321.4 h-2.8M1968.9 303.5 h2.8M1977.4 273.4 V314.5M1977.4 280.2 h-2.8M1977.4 308.5 h2.8M1984.3 308.5 V339.2M1984.3 309.0 h-2.8M1984.3 326.0 h2.8M1993.3 285.7 V344.1M1993.3 302.2 h-2.8M1993.3 343.3 h2.8M2000.2 308.5 V332.3M2000.2 331.0 h-2.8M2000.2 331.5 h2.8M2009.0 326.0 V349.6M2009.0 337.8 h-2.8M2009.0 348.8 h2.8M2018.0 326.0 V361.7M2018.0 343.3 h-2.8M2018.0 331.0 h2.8M2024.9 343.3 V373.5M2024.9 355.6 h-2.8M2024.9 372.9 h2.8M2033.6 348.2 V384.4M2033.6 384.4 h-2.8M2033.6 366.6 h2.8M35.4 516.5 h6M602.0 587.2 h6M761.4 546.0 h6M1080.3 280.3 h6" stroke="#101014" stroke-width="1.75" fill="none"/>
</g>
<clipPath id="c2"><rect x="19.5" y="883.5" width="2070.0" height="263.0"/></clipPath>
<g clip-path="url(#c2)">
<g fill="#2bff3e"><rect x="19.0" y="1009.1" width="5" height="23.3"/><rect x="27.9" y="1011.3" width="5" height="21.1"/><rect x="35.8" y="1014.0" width="5" height="18.4"/><rect x="43.7" y="1019.2" width="5" height="13.2"/><rect x="52.7" y="1024.2" width="5" height="8.2"/><rect x="59.9" y="1025.3" width="5" height="7.1"/><rect x="67.9" y="1027.2" width="5" height="5.2"/><rect x="75.1" y="1031.5" width="5" height="0.9"/><rect x="84.1" y="1032.4" width="5" height="3.9"/><rect x="91.3" y="1032.4" width="5" height="2.4"/><rect x="99.6" y="1032.4" width="5" height="5.9"/><rect x="107.2" y="1032.4" width="5" height="8.4"/><rect x="115.5" y="1032.4" width="5" height="6.6"/><rect x="123.7" y="1032.4" width="5" height="1.7"/><rect x="131.3" y="1031.2" width="5" height="1.2"/><rect x="139.6" y="1027.8" width="5" height="4.6"/><rect x="147.5" y="1022.9" width="5" height="9.5"/><rect x="155.8" y="1022.5" width="5" height="9.9"/><rect x="163.1" y="1025.0" width="5" height="7.4"/><rect x="171.7" y="1028.0" width="5" height="4.4"/><rect x="179.9" y="1032.4" width="5" height="0.6"/><rect x="187.5" y="1032.4" width="5" height="4.6"/><rect x="195.8" y="1032.4" width="5" height="11.1"/><rect x="203.7" y="1032.4" width="5" height="25.6"/><rect x="211.7" y="1032.4" width="5" height="32.7"/><rect x="219.3" y="1032.4" width="5" height="32.0"/><rect x="227.2" y="1032.4" width="5" height="23.4"/><rect x="234.5" y="1032.4" width="5" height="15.5"/><rect x="243.1" y="1032.4" width="5" height="11.6"/><rect x="251.6" y="1032.4" width="5" height="9.9"/><rect x="259.2" y="1032.4" width="5" height="10.2"/><rect x="268.2" y="1032.4" width="5" height="12.8"/><rect x="274.8" y="1032.4" width="5" height="8.4"/><rect x="283.4" y="1032.4" width="5" height="6.6"/><rect x="290.6" y="1032.4" width="5" height="6.8"/><rect x="298.9" y="1032.4" width="5" height="7.9"/><rect x="306.5" y="1032.4" width="5" height="9.8"/><rect x="315.1" y="1032.4" width="5" height="4.5"/><rect x="323.7" y="1032.4" width="5" height="1.3"/><rect x="331.3" y="1032.0" width="5" height="0.6"/><rect x="339.6" y="1029.0" width="5" height="3.4"/><rect x="346.8" y="1026.7" width="5" height="5.7"/><rect x="355.1" y="1023.3" width="5" height="9.1"/><rect x="362.4" y="1019.2" width="5" height="13.2"/><rect x="370.7" y="1019.1" width="5" height="13.3"/><rect x="379.6" y="1024.2" width="5" height="8.2"/><rect x="386.9" y="1028.9" width="5" height="3.5"/><rect x="395.5" y="1032.0" width="5" height="0.6"/><rect x="402.8" y="1032.4" width="5" height="3.1"/><rect x="411.0" y="1032.4" width="5" height="6.6"/><rect x="418.6" y="1032.4" width="5" height="7.4"/><rect x="426.9" y="1032.4" width="5" height="4.8"/><rect x="434.5" y="1032.4" width="5" height="3.9"/><rect x="443.1" y="1032.4" width="5" height="5.4"/><rect x="451.3" y="1032.4" width="5" height="3.3"/><rect x="458.9" y="1029.4" width="5" height="3.0"/><rect x="466.9" y="1021.6" width="5" height="10.8"/><rect x="474.1" y="1017.6" width="5" height="14.8"/><rect x="482.7" y="1016.8" width="5" height="15.6"/><rect x="490.0" y="1014.4" width="5" height="18.0"/><rect x="498.6" y="1009.6" width="5" height="22.8"/><rect x="507.5" y="1009.2" width="5" height="23.2"/><rect x="514.5" y="1011.1" width="5" height="21.3"/><rect x="522.7" y="1010.8" width="5" height="21.6"/><rect x="530.3" y="1015.1" width="5" height="17.3"/><rect x="538.3" y="1014.8" width="5" height="17.6"/><rect x="546.2" y="1012.7" width="5" height="19.7"/><rect x="554.1" y="1007.0" width="5" height="25.4"/><rect x="561.4" y="1003.1" width="5" height="29.3"/><rect x="570.3" y="999.7" width="5" height="32.7"/><rect x="578.9" y="1000.2" width="5" height="32.2"/><rect x="586.2" y="999.5" width="5" height="32.9"/><rect x="594.5" y="1001.6" width="5" height="30.8"/><rect x="602.4" y="1003.2" width="5" height="29.2"/><rect x="611.0" y="1011.1" width="5" height="21.3"/><rect x="617.6" y="1017.9" width="5" height="14.5"/><rect x="626.5" y="1018.9" width="5" height="13.5"/><rect x="633.5" y="1021.1" width="5" height="11.3"/><rect x="642.1" y="1017.7" width="5" height="14.7"/><rect x="650.6" y="1016.1" width="5" height="16.3"/><rect x="657.9" y="1015.9" width="5" height="16.5"/><rect x="666.5" y="1020.3" width="5" height="12.1"/><rect x="673.8" y="1022.6" width="5" height="9.8"/><rect x="682.0" y="1022.9" width="5" height="9.5"/><rect x="689.6" y="1025.1" width="5" height="7.3"/><rect x="697.9" y="1029.4" width="5" height="3.0"/><rect x="706.2" y="1032.4" width="5" height="1.0"/><rect x="714.1" y="1032.4" width="5" height="0.6"/><rect x="722.7" y="1032.4" width="5" height="4.4"/><rect x="729.7" y="1032.4" width="5" height="9.0"/><rect x="738.3" y="1032.4" width="5" height="3.8"/><rect x="745.6" y="1032.4" width="5" height="4.5"/><rect x="753.8" y="1032.4" width="5" height="9.0"/><rect x="761.8" y="1032.4" width="5" height="12.1"/><rect x="770.0" y="1032.4" width="5" height="8.5"/><rect x="778.3" y="1032.4" width="5" height="2.7"/><rect x="785.9" y="1032.4" width="5" height="2.8"/><rect x="794.2" y="1032.4" width="5" height="2.4"/><rect x="801.8" y="1032.4" width="5" height="2.5"/><rect x="809.7" y="1032.4" width="5" height="4.5"/><rect x="817.3" y="1032.4" width="5" height="5.0"/><rect x="826.2" y="1032.4" width="5" height="4.4"/><rect x="834.1" y="1032.4" width="5" height="5.2"/><rect x="841.4" y="1032.4" width="5" height="12.0"/><rect x="850.0" y="1032.4" width="5" height="17.2"/><rect x="857.3" y="1032.4" width="5" height="20.6"/><rect x="865.9" y="1032.4" width="5" height="25.8"/><rect x="873.2" y="1032.4" width="5" height="27.7"/><rect x="881.1" y="1032.4" width="5" height="27.2"/><rect x="888.7" y="1032.4" width="5" height="27.5"/><rect x="897.6" y="1032.4" width="5" height="28.4"/><rect x="905.9" y="1032.4" width="5" height="26.7"/><rect x="913.5" y="1032.4" width="5" height="20.9"/><rect x="922.1" y="1032.4" width="5" height="14.4"/><rect x="929.0" y="1032.4" width="5" height="7.5"/><rect x="937.9" y="1029.9" width="5" height="2.5"/><rect x="944.5" y="1021.7" width="5" height="10.7"/><rect x="953.1" y="1016.0" width="5" height="16.4"/><rect x="961.7" y="1014.8" width="5" height="17.6"/><rect x="969.7" y="1010.7" width="5" height="21.7"/><rect x="977.6" y="1005.9" width="5" height="26.5"/><rect x="985.2" y="1003.8" width="5" height="28.6"/><rect x="993.5" y="1002.8" width="5" height="29.6"/><rect x="1000.7" y="1004.9" width="5" height="27.5"/><rect x="1009.7" y="1008.2" width="5" height="24.2"/><rect x="1017.3" y="1010.3" width="5" height="22.1"/><rect x="1025.9" y="1014.8" width="5" height="17.6"/><rect x="1033.8" y="1018.2" width="5" height="14.2"/><rect x="1041.1" y="1020.7" width="5" height="11.7"/><rect x="1049.0" y="1022.5" width="5" height="9.9"/><rect x="1056.9" y="1023.7" width="5" height="8.7"/><rect x="1065.2" y="1021.4" width="5" height="11.0"/><rect x="1072.5" y="1019.9" width="5" height="12.5"/><rect x="1080.7" y="1019.9" width="5" height="12.5"/><rect x="1088.7" y="1020.3" width="5" height="12.1"/><rect x="1097.0" y="1020.8" width="5" height="11.6"/><rect x="1105.6" y="1022.7" width="5" height="9.7"/><rect x="1112.8" y="1030.6" width="5" height="1.8"/><rect x="1121.1" y="1032.4" width="5" height="5.7"/><rect x="1128.7" y="1032.4" width="5" height="10.7"/><rect x="1136.6" y="1032.4" width="5" height="15.2"/><rect x="1144.2" y="1032.4" width="5" height="16.9"/><rect x="1152.5" y="1032.4" width="5" height="15.3"/><rect x="1161.8" y="1032.4" width="5" height="15.3"/><rect x="1169.0" y="1032.4" width="5" height="17.5"/><rect x="1177.3" y="1032.4" width="5" height="17.7"/><rect x="1184.6" y="1032.4" width="5" height="17.1"/><rect x="1192.8" y="1032.4" width="5" height="18.3"/><rect x="1200.4" y="1032.4" width="5" height="15.8"/><rect x="1208.7" y="1032.4" width="5" height="14.8"/><rect x="1216.3" y="1032.4" width="5" height="16.3"/><rect x="1224.6" y="1032.4" width="5" height="19.9"/><rect x="1232.8" y="1032.4" width="5" height="21.6"/><rect x="1240.8" y="1032.4" width="5" height="20.5"/><rect x="1249.0" y="1032.4" width="5" height="17.6"/><rect x="1256.3" y="1032.4" width="5" height="13.9"/><rect x="1264.9" y="1032.4" width="5" height="5.4"/><rect x="1272.2" y="1032.4" width="5" height="4.9"/><rect x="1280.4" y="1032.4" width="5" height="6.9"/><rect x="1288.7" y="1032.4" width="5" height="3.8"/><rect x="1296.6" y="1032.4" width="5" height="1.5"/><rect x="1305.2" y="1032.4" width="5" height="1.7"/><rect x="1312.5" y="1032.4" width="5" height="5.0"/><rect x="1321.1" y="1032.4" width="5" height="8.1"/><rect x="1328.7" y="1032.4" width="5" height="13.3"/><rect x="1336.9" y="1032.4" width="5" height="17.6"/><rect x="1344.2" y="1032.4" width="5" height="17.8"/><rect x="1352.5" y="1032.4" width="5" height="19.6"/><rect x="1360.7" y="1032.4" width="5" height="22.0"/><rect x="1368.3" y="1032.4" width="5" height="18.6"/><rect x="1376.6" y="1032.4" width="5" height="13.0"/><rect x="1383.9" y="1032.4" width="5" height="7.8"/><rect x="1392.5" y="1032.4" width="5" height="1.8"/><rect x="1400.4" y="1032.4" width="5" height="1.3"/><rect x="1408.3" y="1029.1" width="5" height="3.3"/><rect x="1416.9" y="1024.7" width="5" height="7.7"/><rect x="1424.2" y="1024.3" width="5" height="8.1"/><rect x="1432.5" y="1023.3" width="5" height="9.1"/><rect x="1440.1" y="1023.3" width="5" height="9.1"/><rect x="1447.4" y="1024.4" width="5" height="8.0"/><rect x="1455.3" y="1026.0" width="5" height="6.4"/><rect x="1463.6" y="1028.1" width="5" height="4.3"/><rect x="1471.5" y="1026.9" width="5" height="5.5"/><rect x="1479.5" y="1023.5" width="5" height="8.9"/><rect x="1488.4" y="1021.5" width="5" height="10.9"/><rect x="1496.0" y="1019.3" width="5" height="13.1"/><rect x="1504.2" y="1016.0" width="5" height="16.4"/><rect x="1511.5" y="1018.5" width="5" height="13.9"/><rect x="1519.8" y="1022.5" width="5" height="9.9"/><rect x="1527.4" y="1030.3" width="5" height="2.1"/><rect x="1535.6" y="1032.4" width="5" height="1.9"/><rect x="1542.9" y="1032.4" width="5" height="6.3"/><rect x="1551.5" y="1032.4" width="5" height="14.9"/><rect x="1559.8" y="1032.4" width="5" height="9.0"/><rect x="1567.7" y="1030.1" width="5" height="2.3"/><rect x="1576.0" y="1018.3" width="5" height="14.1"/><rect x="1583.6" y="1008.2" width="5" height="24.2"/><rect x="1591.8" y="1003.8" width="5" height="28.6"/><rect x="1599.1" y="1006.2" width="5" height="26.2"/><rect x="1607.4" y="1009.3" width="5" height="23.1"/><rect x="1616.3" y="1015.3" width="5" height="17.1"/><rect x="1623.9" y="1017.1" width="5" height="15.3"/><rect x="1631.5" y="1018.4" width="5" height="14.0"/><rect x="1639.1" y="1015.6" width="5" height="16.8"/><rect x="1647.7" y="1015.9" width="5" height="16.5"/><rect x="1655.0" y="1019.4" width="5" height="13.0"/><rect x="1663.6" y="1026.0" width="5" height="6.4"/><rect x="1671.2" y="1032.4" width="5" height="0.7"/><rect x="1679.4" y="1032.4" width="5" height="7.0"/><rect x="1688.7" y="1032.4" width="5" height="13.8"/><rect x="1695.3" y="1032.4" width="5" height="15.1"/><rect x="1703.5" y="1032.4" width="5" height="13.6"/><rect x="1710.8" y="1032.4" width="5" height="10.1"/><rect x="1719.7" y="1032.4" width="5" height="3.8"/><rect x="1727.3" y="1032.4" width="5" height="1.2"/><rect x="1735.6" y="1032.4" width="5" height="1.8"/><rect x="1743.9" y="1031.8" width="5" height="0.6"/><rect x="1751.1" y="1030.8" width="5" height="1.6"/><rect x="1759.7" y="1027.5" width="5" height="4.9"/><rect x="1766.3" y="1023.9" width="5" height="8.5"/><rect x="1775.3" y="1020.0" width="5" height="12.4"/><rect x="1782.9" y="1021.3" width="5" height="11.1"/><rect x="1790.5" y="1024.5" width="5" height="7.9"/><rect x="1797.9" y="1024.7" width="5" height="7.7"/><rect x="1806.7" y="1024.1" width="5" height="8.3"/><rect x="1815.7" y="1018.1" width="5" height="14.3"/><rect x="1822.6" y="1017.0" width="5" height="15.4"/><rect x="1831.7" y="1019.9" width="5" height="12.5"/><rect x="1838.5" y="1025.4" width="5" height="7.0"/><rect x="1847.3" y="1029.8" width="5" height="2.6"/><rect x="1854.1" y="1032.4" width="5" height="2.0"/><rect x="1862.9" y="1032.4" width="5" height="6.2"/><rect x="1870.0" y="1032.4" width="5" height="5.4"/><rect x="1878.8" y="1032.4" width="5" height="6.3"/><rect x="1887.6" y="1032.4" width="5" height="10.7"/><rect x="1894.7" y="1032.4" width="5" height="12.3"/><rect x="1903.5" y="1032.4" width="5" height="10.1"/><rect x="1910.4" y="1032.4" width="5" height="8.7"/><rect x="1919.1" y="1032.4" width="5" height="8.3"/><rect x="1926.3" y="1032.4" width="5" height="10.2"/><rect x="1935.0" y="1032.4" width="5" height="13.5"/><rect x="1943.3" y="1032.4" width="5" height="11.3"/><rect x="1950.7" y="1032.4" width="5" height="8.2"/><rect x="1959.2" y="1032.4" width="5" height="8.7"/><rect x="1966.3" y="1032.4" width="5" height="8.6"/><rect x="1974.8" y="1032.4" width="5" height="8.8"/><rect x="1981.7" y="1032.4" width="5" height="9.9"/><rect x="1990.7" y="1032.4" width="5" height="11.2"/><rect x="1997.6" y="1032.4" width="5" height="10.8"/><rect x="2006.4" y="1032.4" width="5" height="11.8"/><rect x="2015.4" y="1032.4" width="5" height="10.1"/><rect x="2022.3" y="1032.4" width="5" height="12.3"/><rect x="2031.0" y="1032.4" width="5" height="13.3"/></g>
<path d="M21.8 1062.9 L22.8 1062.5 L23.8 1062.0 L24.8 1061.5 L25.8 1060.9 L26.8 1060.2 L27.8 1059.6 L28.8 1058.9 L29.8 1058.3 L30.8 1057.6 L31.8 1057.0 L32.8 1056.4 L33.8 1055.9 L34.8 1055.3 L35.8 1054.7 L36.8 1054.2 L37.8 1053.7 L38.8 1053.2 L39.8 1052.8 L40.8 1052.3 L41.8 1051.9 L42.8 1051.5 L43.8 1051.1 L44.8 1050.7 L45.8 1050.3 L46.8 1050.0 L47.8 1049.6 L48.8 1049.3 L49.8 1049.0 L50.8 1048.7 L51.8 1048.4 L52.8 1048.1 L53.8 1047.9 L54.8 1047.6 L55.8 1047.4 L56.8 1047.1 L57.8 1046.9 L58.8 1046.6 L59.8 1046.4 L60.8 1046.2 L61.8 1045.9 L62.8 1045.7 L63.8 1045.5 L64.8 1045.3 L65.8 1045.2 L66.8 1045.0 L67.8 1044.9 L68.8 1044.7 L69.8 1044.6 L70.8 1044.5 L71.8 1044.5 L72.8 1044.4 L73.8 1044.4 L74.8 1044.3 L75.8 1044.3 L76.8 1044.3 L77.8 1044.3 L78.8 1044.2 L79.8 1044.2 L80.8 1044.2 L81.8 1044.1 L82.8 1044.1 L83.8 1044.1 L84.8 1044.0 L85.8 1044.0 L86.8 1044.0 L87.8 1044.0 L88.8 1044.1 L89.8 1044.1 L90.8 1044.2 L91.8 1044.3 L92.8 1044.4 L93.8 1044.6 L94.8 1044.7 L95.8 1044.9 L96.8 1045.1 L97.8 1045.3 L98.8 1045.6 L99.8 1045.8 L100.8 1046.1 L101.8 1046.4 L102.8 1046.7 L103.8 1047.0 L104.8 1047.3 L105.8 1047.6 L106.8 1047.9 L107.8 1048.2 L108.8 1048.5 L109.8 1048.7 L110.8 1049.0 L111.8 1049.3 L112.8 1049.5 L113.8 1049.7 L114.8 1049.9 L115.8 1050.1 L116.8 1050.3 L117.8 1050.5 L118.8 1050.7 L119.8 1050.9 L120.8 1051.0 L121.8 1051.2 L122.8 1051.3 L123.8 1051.3 L124.8 1051.4 L125.8 1051.4 L126.8 1051.4 L127.8 1051.4 L128.8 1051.3 L129.8 1051.2 L130.8 1051.1 L131.8 1051.0 L132.8 1050.9 L133.8 1050.7 L134.8 1050.6 L135.8 1050.5 L136.8 1050.4 L137.8 1050.2 L138.8 1050.1 L139.8 1050.0 L140.8 1049.8 L141.8 1049.6 L142.8 1049.5 L143.8 1049.2 L144.8 1049.0 L145.8 1048.7 L146.8 1048.4 L147.8 1048.1 L148.8 1047.8 L149.8 1047.5 L150.8 1047.2 L151.8 1046.8 L152.8 1046.5 L153.8 1046.2 L154.8 1045.9 L155.8 1045.6 L156.8 1045.3 L157.8 1045.0 L158.8 1044.7 L159.8 1044.4 L160.8 1044.2 L161.8 1043.9 L162.8 1043.7 L163.8 1043.5 L164.8 1043.3 L165.8 1043.1 L166.8 1042.9 L167.8 1042.7 L168.8 1042.6 L169.8 1042.4 L170.8 1042.3 L171.8 1042.2 L172.8 1042.1 L173.8 1041.9 L174.8 1041.9 L175.8 1041.8 L176.8 1041.7 L177.8 1041.6 L178.8 1041.6 L179.8 1041.6 L180.8 1041.6 L181.8 1041.6 L182.8 1041.6 L183.8 1041.7 L184.8 1041.7 L185.8 1041.8 L186.8 1042.0 L187.8 1042.1 L188.8 1042.3 L189.8 1042.5 L190.8 1042.7 L191.8 1043.0 L192.8 1043.2 L193.8 1043.5 L194.8 1043.9 L195.8 1044.2 L196.8 1044.7 L197.8 1045.1 L198.8 1045.7 L199.8 1046.3 L200.8 1046.9 L201.8 1047.6 L202.8 1048.4 L203.8 1049.2 L204.8 1050.0 L205.8 1050.9 L206.8 1051.8 L207.8 1052.7 L208.8 1053.7 L209.8 1054.6 L210.8 1055.6 L211.8 1056.6 L212.8 1057.6 L213.8 1058.7 L214.8 1059.7 L215.8 1060.8 L216.8 1061.8 L217.8 1062.9 L218.8 1063.9 L219.8 1064.9 L220.8 1065.8 L221.8 1066.8 L222.8 1067.6 L223.8 1068.5 L224.8 1069.2 L225.8 1070.0 L226.8 1070.7 L227.8 1071.4 L228.8 1072.0 L229.8 1072.7 L230.8 1073.3 L231.8 1073.9 L232.8 1074.4 L233.8 1075.0 L234.8 1075.5 L235.8 1076.0 L236.8 1076.5 L237.8 1077.0 L238.8 1077.4 L239.8 1077.9 L240.8 1078.4 L241.8 1078.8 L242.8 1079.3 L243.8 1079.7 L244.8 1080.1 L245.8 1080.5 L246.8 1081.0 L247.8 1081.4 L248.8 1081.8 L249.8 1082.2 L250.8 1082.6 L251.8 1083.1 L252.8 1083.5 L253.8 1083.9 L254.8 1084.3 L255.8 1084.7 L256.8 1085.1 L257.8 1085.5 L258.8 1086.0 L259.8 1086.4 L260.8 1086.8 L261.8 1087.2 L262.8 1087.5 L263.8 1087.9 L264.8 1088.3 L265.8 1088.7 L266.8 1089.0 L267.8 1089.4 L268.8 1089.7 L269.8 1090.1 L270.8 1090.4 L271.8 1090.7 L272.8 1091.0 L273.8 1091.3 L274.8 1091.6 L275.8 1091.9 L276.8 1092.2 L277.8 1092.5 L278.8 1092.7 L279.8 1093.0 L280.8 1093.3 L281.8 1093.6 L282.8 1093.9 L283.8 1094.2 L284.8 1094.5 L285.8 1094.8 L286.8 1095.1 L287.8 1095.4 L288.8 1095.8 L289.8 1096.1 L290.8 1096.4 L291.8 1096.7 L292.8 1097.0 L293.8 1097.4 L294.8 1097.7 L295.8 1098.0 L296.8 1098.3 L297.8 1098.5 L298.8 1098.8 L299.8 1099.1 L300.8 1099.4 L301.8 1099.7 L302.8 1099.9 L303.8 1100.2 L304.8 1100.4 L305.8 1100.7 L306.8 1100.9 L307.8 1101.1 L308.8 1101.3 L309.8 1101.5 L310.8 1101.7 L311.8 1101.9 L312.8 1102.0 L313.8 1102.2 L314.8 1102.3 L315.8 1102.4 L316.8 1102.5 L317.8 1102.6 L318.8 1102.7 L319.8 1102.8 L320.8 1102.9 L321.8 1102.9 L322.8 1103.0 L323.8 1103.0 L324.8 1103.1 L325.8 1103.1 L326.8 1103.1 L327.8 1103.1 L328.8 1103.1 L329.8 1103.1 L330.8 1103.1 L331.8 1103.1 L332.8 1103.1 L333.8 1103.0 L334.8 1102.9 L335.8 1102.8 L336.8 1102.7 L337.8 1102.6 L338.8 1102.5 L339.8 1102.3 L340.8 1102.1 L341.8 1101.9 L342.8 1101.7 L343.8 1101.5 L344.8 1101.2 L345.8 1101.0 L346.8 1100.7 L347.8 1100.5 L348.8 1100.2 L349.8 1099.9 L350.8 1099.5 L351.8 1099.2 L352.8 1098.8 L353.8 1098.5 L354.8 1098.1 L355.8 1097.7 L356.8 1097.2 L357.8 1096.8 L358.8 1096.4 L359.8 1095.9 L360.8 1095.4 L361.8 1095.0 L362.8 1094.5 L363.8 1094.0 L364.8 1093.6 L365.8 1093.2 L366.8 1092.7 L367.8 1092.3 L368.8 1092.0 L369.8 1091.6 L370.8 1091.2 L371.8 1090.9 L372.8 1090.6 L373.8 1090.3 L374.8 1090.1 L375.8 1089.8 L376.8 1089.6 L377.8 1089.4 L378.8 1089.2 L379.8 1089.0 L380.8 1088.8 L381.8 1088.7 L382.8 1088.6 L383.8 1088.5 L384.8 1088.4 L385.8 1088.3 L386.8 1088.2 L387.8 1088.2 L388.8 1088.1 L389.8 1088.1 L390.8 1088.1 L391.8 1088.1 L392.8 1088.1 L393.8 1088.1 L394.8 1088.1 L395.8 1088.1 L396.8 1088.1 L397.8 1088.2 L398.8 1088.3 L399.8 1088.4 L400.8 1088.5 L401.8 1088.6 L402.8 1088.7 L403.8 1088.9 L404.8 1089.1 L405.8 1089.3 L406.8 1089.5 L407.8 1089.7 L408.8 1089.9 L409.8 1090.1 L410.8 1090.4 L411.8 1090.6 L412.8 1090.8 L413.8 1091.1 L414.8 1091.3 L415.8 1091.6 L416.8 1091.8 L417.8 1092.0 L418.8 1092.2 L419.8 1092.5 L420.8 1092.6 L421.8 1092.8 L422.8 1093.0 L423.8 1093.2 L424.8 1093.4 L425.8 1093.5 L426.8 1093.7 L427.8 1093.9 L428.8 1094.0 L429.8 1094.2 L430.8 1094.4 L431.8 1094.6 L432.8 1094.9 L433.8 1095.1 L434.8 1095.3 L435.8 1095.5 L436.8 1095.7 L437.8 1095.9 L438.8 1096.1 L439.8 1096.3 L440.8 1096.5 L441.8 1096.7 L442.8 1096.8 L443.8 1097.0 L444.8 1097.1 L445.8 1097.3 L446.8 1097.4 L447.8 1097.5 L448.8 1097.7 L449.8 1097.8 L450.8 1097.9 L451.8 1097.9 L452.8 1098.0 L453.8 1098.0 L454.8 1098.0 L455.8 1098.0 L456.8 1097.9 L457.8 1097.9 L458.8 1097.8 L459.8 1097.6 L460.8 1097.5 L461.8 1097.3 L462.8 1097.1 L463.8 1096.9 L464.8 1096.6 L465.8 1096.3 L466.8 1096.0 L467.8 1095.6 L468.8 1095.3 L469.8 1094.8 L470.8 1094.4 L471.8 1093.9 L472.8 1093.4 L473.8 1092.9 L474.8 1092.4 L475.8 1091.9 L476.8 1091.3 L477.8 1090.8 L478.8 1090.2 L479.8 1089.6 L480.8 1089.0 L481.8 1088.4 L482.8 1087.8 L483.8 1087.2 L484.8 1086.5 L485.8 1085.9 L486.8 1085.2 L487.8 1084.5 L488.8 1083.8 L489.8 1083.1 L490.8 1082.4 L491.8 1081.8 L492.8 1081.1 L493.8 1080.5 L494.8 1079.9 L495.8 1079.3 L496.8 1078.7 L497.8 1078.1 L498.8 1077.5 L499.8 1076.9 L500.8 1076.3 L501.8 1075.6 L502.8 1075.0 L503.8 1074.3 L504.8 1073.6 L505.8 1073.0 L506.8 1072.3 L507.8 1071.6 L508.8 1070.9 L509.8 1070.3 L510.8 1069.6 L511.8 1069.0 L512.8 1068.3 L513.8 1067.7 L514.8 1067.0 L515.8 1066.4 L516.8 1065.8 L517.8 1065.1 L518.8 1064.5 L519.8 1063.9 L520.8 1063.3 L521.8 1062.7 L522.8 1062.1 L523.8 1061.5 L524.8 1060.9 L525.8 1060.3 L526.8 1059.7 L527.8 1059.1 L528.8 1058.5 L529.8 1057.9 L530.8 1057.4 L531.8 1056.8 L532.8 1056.2 L533.8 1055.7 L534.8 1055.1 L535.8 1054.6 L536.8 1054.1 L537.8 1053.5 L538.8 1053.0 L539.8 1052.4 L540.8 1051.9 L541.8 1051.3 L542.8 1050.7 L543.8 1050.1 L544.8 1049.5 L545.8 1048.9 L546.8 1048.3 L547.8 1047.6 L548.8 1047.0 L549.8 1046.3 L550.8 1045.6 L551.8 1044.9 L552.8 1044.1 L553.8 1043.3 L554.8 1042.5 L555.8 1041.7 L556.8 1040.8 L557.8 1039.9 L558.8 1039.0 L559.8 1038.0 L560.8 1037.1 L561.8 1036.1 L562.8 1035.0 L563.8 1034.0 L564.8 1033.0 L565.8 1031.9 L566.8 1030.9 L567.8 1029.8 L568.8 1028.7 L569.8 1027.7 L570.8 1026.6 L571.8 1025.6 L572.8 1024.5 L573.8 1023.5 L574.8 1022.4 L575.8 1021.4 L576.8 1020.4 L577.8 1019.5 L578.8 1018.5 L579.8 1017.6 L580.8 1016.7 L581.8 1015.8 L582.8 1014.9 L583.8 1014.0 L584.8 1013.2 L585.8 1012.3 L586.8 1011.3 L587.8 1010.4 L588.8 1009.4 L589.8 1008.4 L590.8 1007.3 L591.8 1006.3 L592.8 1005.2 L593.8 1004.1 L594.8 1003.0 L595.8 1001.9 L596.8 1000.8 L597.8 999.7 L598.8 998.6 L599.8 997.6 L600.8 996.6 L601.8 995.6 L602.8 994.6 L603.8 993.7 L604.8 992.9 L605.8 992.1 L606.8 991.3 L607.8 990.6 L608.8 989.9 L609.8 989.2 L610.8 988.6 L611.8 988.1 L612.8 987.5 L613.8 987.0 L614.8 986.6 L615.8 986.1 L616.8 985.7 L617.8 985.3 L618.8 984.9 L619.8 984.5 L620.8 984.1 L621.8 983.8 L622.8 983.4 L623.8 983.0 L624.8 982.7 L625.8 982.3 L626.8 981.9 L627.8 981.5 L628.8 981.1 L629.8 980.7 L630.8 980.3 L631.8 979.9 L632.8 979.5 L633.8 979.0 L634.8 978.6 L635.8 978.1 L636.8 977.7 L637.8 977.2 L638.8 976.8 L639.8 976.3 L640.8 975.9 L641.8 975.4 L642.8 975.0 L643.8 974.5 L644.8 974.1 L645.8 973.6 L646.8 973.1 L647.8 972.6 L648.8 972.1 L649.8 971.5 L650.8 971.0 L651.8 970.4 L652.8 969.9 L653.8 969.3 L654.8 968.8 L655.8 968.3 L656.8 967.8 L657.8 967.3 L658.8 966.8 L659.8 966.3 L660.8 965.9 L661.8 965.4 L662.8 965.0 L663.8 964.6 L664.8 964.2 L665.8 963.8 L666.8 963.4 L667.8 963.1 L668.8 962.7 L669.8 962.4 L670.8 962.0 L671.8 961.7 L672.8 961.3 L673.8 961.0 L674.8 960.7 L675.8 960.3 L676.8 960.0 L677.8 959.7 L678.8 959.4 L679.8 959.1 L680.8 958.8 L681.8 958.5 L682.8 958.3 L683.8 958.0 L684.8 957.8 L685.8 957.5 L686.8 957.3 L687.8 957.1 L688.8 956.9 L689.8 956.8 L690.8 956.6 L691.8 956.5 L692.8 956.3 L693.8 956.2 L694.8 956.1 L695.8 956.0 L696.8 955.9 L697.8 955.9 L698.8 955.8 L699.8 955.8 L700.8 955.7 L701.8 955.7 L702.8 955.7 L703.8 955.7 L704.8 955.7 L705.8 955.7 L706.8 955.7 L707.8 955.7 L708.8 955.7 L709.8 955.7 L710.8 955.7 L711.8 955.7 L712.8 955.8 L713.8 955.8 L714.8 955.9 L715.8 955.9 L716.8 956.0 L717.8 956.1 L718.8 956.2 L719.8 956.3 L720.8 956.5 L721.8 956.6 L722.8 956.7 L723.8 956.9 L724.8 957.0 L725.8 957.2 L726.8 957.4 L727.8 957.5 L728.8 957.7 L729.8 957.8 L730.8 958.0 L731.8 958.1 L732.8 958.3 L733.8 958.5 L734.8 958.7 L735.8 958.8 L736.8 959.0 L737.8 959.2 L738.8 959.3 L739.8 959.5 L740.8 959.7 L741.8 959.8 L742.8 960.0 L743.8 960.1 L744.8 960.3 L745.8 960.5 L746.8 960.7 L747.8 960.9 L748.8 961.1 L749.8 961.3 L750.8 961.6 L751.8 961.8 L752.8 962.1 L753.8 962.4 L754.8 962.7 L755.8 963.1 L756.8 963.4 L757.8 963.7 L758.8 964.1 L759.8 964.4 L760.8 964.8 L761.8 965.1 L762.8 965.4 L763.8 965.7 L764.8 965.9 L765.8 966.2 L766.8 966.4 L767.8 966.7 L768.8 966.9 L769.8 967.1 L770.8 967.3 L771.8 967.4 L772.8 967.6 L773.8 967.8 L774.8 967.9 L775.8 968.1 L776.8 968.2 L777.8 968.4 L778.8 968.5 L779.8 968.6 L780.8 968.7 L781.8 968.8 L782.8 968.9 L783.8 969.0 L784.8 969.0 L785.8 969.1 L786.8 969.2 L787.8 969.2 L788.8 969.3 L789.8 969.3 L790.8 969.4 L791.8 969.4 L792.8 969.4 L793.8 969.5 L794.8 969.5 L795.8 969.6 L796.8 969.7 L797.8 969.7 L798.8 969.8 L799.8 969.9 L800.8 970.0 L801.8 970.2 L802.8 970.3 L803.8 970.5 L804.8 970.6 L805.8 970.8 L806.8 970.9 L807.8 971.1 L808.8 971.2 L809.8 971.4 L810.8 971.6 L811.8 971.7 L812.8 971.9 L813.8 972.0 L814.8 972.2 L815.8 972.3 L816.8 972.5 L817.8 972.6 L818.8 972.7 L819.8 972.9 L820.8 973.0 L821.8 973.1 L822.8 973.2 L823.8 973.3 L824.8 973.4 L825.8 973.5 L826.8 973.6 L827.8 973.8 L828.8 973.9 L829.8 974.0 L830.8 974.1 L831.8 974.3 L832.8 974.5 L833.8 974.7 L834.8 974.9 L835.8 975.1 L836.8 975.4 L837.8 975.8 L838.8 976.1 L839.8 976.5 L840.8 977.0 L841.8 977.5 L842.8 978.0 L843.8 978.5 L844.8 979.0 L845.8 979.6 L846.8 980.1 L847.8 980.7 L848.8 981.3 L849.8 981.9 L850.8 982.5 L851.8 983.1 L852.8 983.7 L853.8 984.3 L854.8 984.9 L855.8 985.6 L856.8 986.3 L857.8 987.0 L858.8 987.7 L859.8 988.5 L860.8 989.2 L861.8 990.0 L862.8 990.9 L863.8 991.7 L864.8 992.6 L865.8 993.5 L866.8 994.3 L867.8 995.2 L868.8 996.1 L869.8 997.0 L870.8 997.9 L871.8 998.8 L872.8 999.7 L873.8 1000.5 L874.8 1001.4 L875.8 1002.3 L876.8 1003.2 L877.8 1004.1 L878.8 1005.0 L879.8 1005.9 L880.8 1006.8 L881.8 1007.8 L882.8 1008.7 L883.8 1009.7 L884.8 1010.6 L885.8 1011.6 L886.8 1012.6 L887.8 1013.5 L888.8 1014.5 L889.8 1015.4 L890.8 1016.4 L891.8 1017.3 L892.8 1018.2 L893.8 1019.1 L894.8 1020.0 L895.8 1020.9 L896.8 1021.8 L897.8 1022.7 L898.8 1023.6 L899.8 1024.5 L900.8 1025.4 L901.8 1026.3 L902.8 1027.2 L903.8 1028.1 L904.8 1028.9 L905.8 1029.8 L906.8 1030.7 L907.8 1031.5 L908.8 1032.3 L909.8 1033.0 L910.8 1033.8 L911.8 1034.5 L912.8 1035.2 L913.8 1035.9 L914.8 1036.5 L915.8 1037.2 L916.8 1037.8 L917.8 1038.3 L918.8 1038.9 L919.8 1039.4 L920.8 1039.9 L921.8 1040.4 L922.8 1040.8 L923.8 1041.2 L924.8 1041.6 L925.8 1041.9 L926.8 1042.2 L927.8 1042.4 L928.8 1042.6 L929.8 1042.8 L930.8 1042.9 L931.8 1042.9 L932.8 1042.9 L933.8 1042.9 L934.8 1042.8 L935.8 1042.7 L936.8 1042.6 L937.8 1042.5 L938.8 1042.3 L939.8 1042.0 L940.8 1041.8 L941.8 1041.5 L942.8 1041.2 L943.8 1040.8 L944.8 1040.5 L945.8 1040.1 L946.8 1039.7 L947.8 1039.2 L948.8 1038.8 L949.8 1038.3 L950.8 1037.8 L951.8 1037.4 L952.8 1036.9 L953.8 1036.4 L954.8 1035.9 L955.8 1035.4 L956.8 1034.9 L957.8 1034.4 L958.8 1033.9 L959.8 1033.4 L960.8 1032.9 L961.8 1032.4 L962.8 1031.9 L963.8 1031.3 L964.8 1030.8 L965.8 1030.2 L966.8 1029.6 L967.8 1029.0 L968.8 1028.4 L969.8 1027.7 L970.8 1027.1 L971.8 1026.4 L972.8 1025.6 L973.8 1024.9 L974.8 1024.1 L975.8 1023.4 L976.8 1022.6 L977.8 1021.7 L978.8 1020.9 L979.8 1020.0 L980.8 1019.2 L981.8 1018.3 L982.8 1017.4 L983.8 1016.5 L984.8 1015.6 L985.8 1014.6 L986.8 1013.7 L987.8 1012.7 L988.8 1011.8 L989.8 1010.8 L990.8 1009.8 L991.8 1008.8 L992.8 1007.8 L993.8 1006.8 L994.8 1005.7 L995.8 1004.7 L996.8 1003.6 L997.8 1002.6 L998.8 1001.6 L999.8 1000.5 L1000.8 999.5 L1001.8 998.5 L1002.8 997.5 L1003.8 996.6 L1004.8 995.6 L1005.8 994.7 L1006.8 993.8 L1007.8 992.9 L1008.8 992.0 L1009.8 991.2 L1010.8 990.3 L1011.8 989.4 L1012.8 988.6 L1013.8 987.7 L1014.8 986.9 L1015.8 986.1 L1016.8 985.3 L1017.8 984.5 L1018.8 983.7 L1019.8 983.0 L1020.8 982.4 L1021.8 981.7 L1022.8 981.1 L1023.8 980.5 L1024.8 980.0 L1025.8 979.5 L1026.8 978.9 L1027.8 978.5 L1028.8 978.0 L1029.8 977.5 L1030.8 977.1 L1031.8 976.6 L1032.8 976.2 L1033.8 975.8 L1034.8 975.4 L1035.8 975.0 L1036.8 974.6 L1037.8 974.2 L1038.8 973.9 L1039.8 973.5 L1040.8 973.2 L1041.8 972.9 L1042.8 972.5 L1043.8 972.2 L1044.8 971.9 L1045.8 971.6 L1046.8 971.4 L1047.8 971.1 L1048.8 970.8 L1049.8 970.5 L1050.8 970.2 L1051.8 969.9 L1052.8 969.6 L1053.8 969.3 L1054.8 969.0 L1055.8 968.6 L1056.8 968.3 L1057.8 967.9 L1058.8 967.6 L1059.8 967.2 L1060.8 966.9 L1061.8 966.5 L1062.8 966.2 L1063.8 965.9 L1064.8 965.6 L1065.8 965.4 L1066.8 965.1 L1067.8 964.9 L1068.8 964.7 L1069.8 964.5 L1070.8 964.3 L1071.8 964.1 L1072.8 963.8 L1073.8 963.5 L1074.8 963.1 L1075.8 962.8 L1076.8 962.4 L1077.8 962.0 L1078.8 961.6 L1079.8 961.3 L1080.8 960.9 L1081.8 960.5 L1082.8 960.1 L1083.8 959.7 L1084.8 959.3 L1085.8 958.9 L1086.8 958.5 L1087.8 958.2 L1088.8 957.8 L1089.8 957.4 L1090.8 957.0 L1091.8 956.6 L1092.8 956.2 L1093.8 955.9 L1094.8 955.5 L1095.8 955.1 L1096.8 954.7 L1097.8 954.3 L1098.8 954.0 L1099.8 953.6 L1100.8 953.3 L1101.8 953.0 L1102.8 952.7 L1103.8 952.4 L1104.8 952.2 L1105.8 952.0 L1106.8 951.8 L1107.8 951.6 L1108.8 951.5 L1109.8 951.4 L1110.8 951.3 L1111.8 951.2 L1112.8 951.2 L1113.8 951.2 L1114.8 951.2 L1115.8 951.3 L1116.8 951.3 L1117.8 951.5 L1118.8 951.6 L1119.8 951.8 L1120.8 952.0 L1121.8 952.2 L1122.8 952.5 L1123.8 952.8 L1124.8 953.2 L1125.8 953.5 L1126.8 953.9 L1127.8 954.3 L1128.8 954.8 L1129.8 955.2 L1130.8 955.7 L1131.8 956.2 L1132.8 956.8 L1133.8 957.3 L1134.8 957.9 L1135.8 958.5 L1136.8 959.1 L1137.8 959.7 L1138.8 960.3 L1139.8 960.9 L1140.8 961.6 L1141.8 962.2 L1142.8 962.8 L1143.8 963.4 L1144.8 964.0 L1145.8 964.6 L1146.8 965.2 L1147.8 965.8 L1148.8 966.3 L1149.8 966.9 L1150.8 967.5 L1151.8 968.0 L1152.8 968.6 L1153.8 969.1 L1154.8 969.7 L1155.8 970.2 L1156.8 970.8 L1157.8 971.4 L1158.8 971.9 L1159.8 972.5 L1160.8 973.1 L1161.8 973.7 L1162.8 974.3 L1163.8 974.9 L1164.8 975.6 L1165.8 976.2 L1166.8 976.9 L1167.8 977.5 L1168.8 978.2 L1169.8 978.8 L1170.8 979.5 L1171.8 980.2 L1172.8 980.8 L1173.8 981.5 L1174.8 982.2 L1175.8 982.8 L1176.8 983.5 L1177.8 984.2 L1178.8 984.9 L1179.8 985.6 L1180.8 986.2 L1181.8 986.9 L1182.8 987.6 L1183.8 988.3 L1184.8 988.9 L1185.8 989.6 L1186.8 990.2 L1187.8 990.9 L1188.8 991.5 L1189.8 992.1 L1190.8 992.7 L1191.8 993.4 L1192.8 994.0 L1193.8 994.6 L1194.8 995.2 L1195.8 995.8 L1196.8 996.4 L1197.8 996.9 L1198.8 997.5 L1199.8 998.1 L1200.8 998.6 L1201.8 999.2 L1202.8 999.7 L1203.8 1000.3 L1204.8 1000.8 L1205.8 1001.3 L1206.8 1001.8 L1207.8 1002.3 L1208.8 1002.8 L1209.8 1003.3 L1210.8 1003.8 L1211.8 1004.4 L1212.8 1004.9 L1213.8 1005.5 L1214.8 1006.0 L1215.8 1006.6 L1216.8 1007.3 L1217.8 1007.9 L1218.8 1008.6 L1219.8 1009.2 L1220.8 1009.9 L1221.8 1010.6 L1222.8 1011.4 L1223.8 1012.1 L1224.8 1012.9 L1225.8 1013.7 L1226.8 1014.4 L1227.8 1015.2 L1228.8 1016.0 L1229.8 1016.8 L1230.8 1017.5 L1231.8 1018.3 L1232.8 1019.0 L1233.8 1019.7 L1234.8 1020.4 L1235.8 1021.1 L1236.8 1021.7 L1237.8 1022.3 L1238.8 1022.9 L1239.8 1023.5 L1240.8 1024.0 L1241.8 1024.5 L1242.8 1025.0 L1243.8 1025.5 L1244.8 1026.0 L1245.8 1026.5 L1246.8 1026.9 L1247.8 1027.3 L1248.8 1027.7 L1249.8 1028.2 L1250.8 1028.5 L1251.8 1028.9 L1252.8 1029.3 L1253.8 1029.6 L1254.8 1030.0 L1255.8 1030.3 L1256.8 1030.6 L1257.8 1030.9 L1258.8 1031.2 L1259.8 1031.4 L1260.8 1031.7 L1261.8 1031.9 L1262.8 1032.1 L1263.8 1032.3 L1264.8 1032.5 L1265.8 1032.7 L1266.8 1032.9 L1267.8 1033.0 L1268.8 1033.2 L1269.8 1033.3 L1270.8 1033.5 L1271.8 1033.7 L1272.8 1033.8 L1273.8 1034.0 L1274.8 1034.2 L1275.8 1034.3 L1276.8 1034.5 L1277.8 1034.7 L1278.8 1034.9 L1279.8 1035.1 L1280.8 1035.3 L1281.8 1035.5 L1282.8 1035.7 L1283.8 1035.9 L1284.8 1036.1 L1285.8 1036.3 L1286.8 1036.4 L1287.8 1036.6 L1288.8 1036.7 L1289.8 1036.8 L1290.8 1037.0 L1291.8 1037.1 L1292.8 1037.2 L1293.8 1037.2 L1294.8 1037.3 L1295.8 1037.4 L1296.8 1037.4 L1297.8 1037.5 L1298.8 1037.5 L1299.8 1037.6 L1300.8 1037.6 L1301.8 1037.7 L1302.8 1037.7 L1303.8 1037.8 L1304.8 1037.8 L1305.8 1037.9 L1306.8 1038.0 L1307.8 1038.0 L1308.8 1038.2 L1309.8 1038.3 L1310.8 1038.4 L1311.8 1038.6 L1312.8 1038.8 L1313.8 1038.9 L1314.8 1039.1 L1315.8 1039.4 L1316.8 1039.6 L1317.8 1039.8 L1318.8 1040.1 L1319.8 1040.4 L1320.8 1040.7 L1321.8 1041.0 L1322.8 1041.3 L1323.8 1041.7 L1324.8 1042.1 L1325.8 1042.5 L1326.8 1043.0 L1327.8 1043.5 L1328.8 1044.0 L1329.8 1044.5 L1330.8 1045.1 L1331.8 1045.6 L1332.8 1046.2 L1333.8 1046.8 L1334.8 1047.4 L1335.8 1047.9 L1336.8 1048.5 L1337.8 1049.1 L1338.8 1049.7 L1339.8 1050.3 L1340.8 1050.9 L1341.8 1051.4 L1342.8 1052.0 L1343.8 1052.6 L1344.8 1053.2 L1345.8 1053.8 L1346.8 1054.4 L1347.8 1055.0 L1348.8 1055.7 L1349.8 1056.3 L1350.8 1057.0 L1351.8 1057.6 L1352.8 1058.3 L1353.8 1058.9 L1354.8 1059.6 L1355.8 1060.3 L1356.8 1060.9 L1357.8 1061.6 L1358.8 1062.3 L1359.8 1062.9 L1360.8 1063.6 L1361.8 1064.2 L1362.8 1064.9 L1363.8 1065.5 L1364.8 1066.2 L1365.8 1066.8 L1366.8 1067.4 L1367.8 1068.0 L1368.8 1068.6 L1369.8 1069.2 L1370.8 1069.7 L1371.8 1070.3 L1372.8 1070.8 L1373.8 1071.2 L1374.8 1071.7 L1375.8 1072.1 L1376.8 1072.5 L1377.8 1072.8 L1378.8 1073.1 L1379.8 1073.4 L1380.8 1073.7 L1381.8 1073.9 L1382.8 1074.1 L1383.8 1074.3 L1384.8 1074.5 L1385.8 1074.6 L1386.8 1074.8 L1387.8 1074.9 L1388.8 1075.0 L1389.8 1075.1 L1390.8 1075.2 L1391.8 1075.3 L1392.8 1075.4 L1393.8 1075.5 L1394.8 1075.6 L1395.8 1075.7 L1396.8 1075.7 L1397.8 1075.8 L1398.8 1075.9 L1399.8 1075.9 L1400.8 1075.9 L1401.8 1075.9 L1402.8 1075.9 L1403.8 1075.9 L1404.8 1075.9 L1405.8 1075.8 L1406.8 1075.7 L1407.8 1075.7 L1408.8 1075.5 L1409.8 1075.4 L1410.8 1075.3 L1411.8 1075.1 L1412.8 1074.9 L1413.8 1074.7 L1414.8 1074.4 L1415.8 1074.2 L1416.8 1073.9 L1417.8 1073.6 L1418.8 1073.4 L1419.8 1073.1 L1420.8 1072.8 L1421.8 1072.6 L1422.8 1072.3 L1423.8 1072.0 L1424.8 1071.7 L1425.8 1071.5 L1426.8 1071.2 L1427.8 1070.9 L1428.8 1070.6 L1429.8 1070.2 L1430.8 1069.9 L1431.8 1069.6 L1432.8 1069.3 L1433.8 1069.1 L1434.8 1068.8 L1435.8 1068.5 L1436.8 1068.3 L1437.8 1068.0 L1438.8 1067.8 L1439.8 1067.5 L1440.8 1067.3 L1441.8 1067.0 L1442.8 1066.8 L1443.8 1066.5 L1444.8 1066.3 L1445.8 1066.0 L1446.8 1065.8 L1447.8 1065.5 L1448.8 1065.3 L1449.8 1065.0 L1450.8 1064.8 L1451.8 1064.6 L1452.8 1064.4 L1453.8 1064.2 L1454.8 1064.0 L1455.8 1063.8 L1456.8 1063.6 L1457.8 1063.4 L1458.8 1063.2 L1459.8 1063.0 L1460.8 1062.8 L1461.8 1062.7 L1462.8 1062.5 L1463.8 1062.3 L1464.8 1062.2 L1465.8 1062.0 L1466.8 1061.8 L1467.8 1061.7 L1468.8 1061.5 L1469.8 1061.4 L1470.8 1061.2 L1471.8 1061.0 L1472.8 1060.8 L1473.8 1060.6 L1474.8 1060.4 L1475.8 1060.1 L1476.8 1059.9 L1477.8 1059.6 L1478.8 1059.3 L1479.8 1059.0 L1480.8 1058.6 L1481.8 1058.3 L1482.8 1057.9 L1483.8 1057.6 L1484.8 1057.2 L1485.8 1056.8 L1486.8 1056.4 L1487.8 1056.0 L1488.8 1055.6 L1489.8 1055.2 L1490.8 1054.8 L1491.8 1054.4 L1492.8 1054.0 L1493.8 1053.5 L1494.8 1053.1 L1495.8 1052.6 L1496.8 1052.2 L1497.8 1051.7 L1498.8 1051.2 L1499.8 1050.7 L1500.8 1050.2 L1501.8 1049.7 L1502.8 1049.2 L1503.8 1048.7 L1504.8 1048.2 L1505.8 1047.8 L1506.8 1047.3 L1507.8 1046.8 L1508.8 1046.4 L1509.8 1046.0 L1510.8 1045.6 L1511.8 1045.2 L1512.8 1044.8 L1513.8 1044.4 L1514.8 1044.0 L1515.8 1043.7 L1516.8 1043.3 L1517.8 1043.0 L1518.8 1042.7 L1519.8 1042.4 L1520.8 1042.1 L1521.8 1041.9 L1522.8 1041.7 L1523.8 1041.5 L1524.8 1041.4 L1525.8 1041.2 L1526.8 1041.1 L1527.8 1041.1 L1528.8 1041.0 L1529.8 1041.0 L1530.8 1041.0 L1531.8 1041.0 L1532.8 1041.0 L1533.8 1041.1 L1534.8 1041.1 L1535.8 1041.2 L1536.8 1041.3 L1537.8 1041.4 L1538.8 1041.5 L1539.8 1041.7 L1540.8 1041.9 L1541.8 1042.1 L1542.8 1042.3 L1543.8 1042.6 L1544.8 1042.9 L1545.8 1043.2 L1546.8 1043.6 L1547.8 1043.9 L1548.8 1044.4 L1549.8 1044.8 L1550.8 1045.2 L1551.8 1045.7 L1552.8 1046.1 L1553.8 1046.5 L1554.8 1046.9 L1555.8 1047.3 L1556.8 1047.6 L1557.8 1047.9 L1558.8 1048.1 L1559.8 1048.3 L1560.8 1048.5 L1561.8 1048.6 L1562.8 1048.6 L1563.8 1048.6 L1564.8 1048.6 L1565.8 1048.5 L1566.8 1048.4 L1567.8 1048.2 L1568.8 1048.0 L1569.8 1047.8 L1570.8 1047.5 L1571.8 1047.2 L1572.8 1046.8 L1573.8 1046.4 L1574.8 1045.9 L1575.8 1045.4 L1576.8 1044.8 L1577.8 1044.2 L1578.8 1043.6 L1579.8 1042.9 L1580.8 1042.1 L1581.8 1041.3 L1582.8 1040.5 L1583.8 1039.7 L1584.8 1038.8 L1585.8 1038.0 L1586.8 1037.1 L1587.8 1036.2 L1588.8 1035.3 L1589.8 1034.4 L1590.8 1033.5 L1591.8 1032.6 L1592.8 1031.7 L1593.8 1030.9 L1594.8 1030.0 L1595.8 1029.1 L1596.8 1028.2 L1597.8 1027.4 L1598.8 1026.5 L1599.8 1025.6 L1600.8 1024.8 L1601.8 1024.0 L1602.8 1023.2 L1603.8 1022.4 L1604.8 1021.7 L1605.8 1021.0 L1606.8 1020.4 L1607.8 1019.8 L1608.8 1019.2 L1609.8 1018.6 L1610.8 1018.1 L1611.8 1017.5 L1612.8 1016.9 L1613.8 1016.3 L1614.8 1015.7 L1615.8 1015.0 L1616.8 1014.3 L1617.8 1013.7 L1618.8 1013.0 L1619.8 1012.4 L1620.8 1011.8 L1621.8 1011.2 L1622.8 1010.6 L1623.8 1010.0 L1624.8 1009.4 L1625.8 1008.9 L1626.8 1008.3 L1627.8 1007.7 L1628.8 1007.2 L1629.8 1006.6 L1630.8 1006.0 L1631.8 1005.4 L1632.8 1004.8 L1633.8 1004.2 L1634.8 1003.7 L1635.8 1003.1 L1636.8 1002.5 L1637.8 1001.9 L1638.8 1001.4 L1639.8 1000.8 L1640.8 1000.3 L1641.8 999.7 L1642.8 999.2 L1643.8 998.8 L1644.8 998.3 L1645.8 997.9 L1646.8 997.4 L1647.8 997.0 L1648.8 996.6 L1649.8 996.2 L1650.8 995.9 L1651.8 995.5 L1652.8 995.2 L1653.8 994.8 L1654.8 994.5 L1655.8 994.2 L1656.8 994.0 L1657.8 993.7 L1658.8 993.5 L1659.8 993.3 L1660.8 993.1 L1661.8 993.0 L1662.8 992.9 L1663.8 992.8 L1664.8 992.7 L1665.8 992.6 L1666.8 992.6 L1667.8 992.6 L1668.8 992.6 L1669.8 992.7 L1670.8 992.8 L1671.8 992.8 L1672.8 993.0 L1673.8 993.1 L1674.8 993.2 L1675.8 993.4 L1676.8 993.6 L1677.8 993.8 L1678.8 994.1 L1679.8 994.4 L1680.8 994.7 L1681.8 995.0 L1682.8 995.4 L1683.8 995.8 L1684.8 996.2 L1685.8 996.7 L1686.8 997.2 L1687.8 997.6 L1688.8 998.1 L1689.8 998.6 L1690.8 999.1 L1691.8 999.6 L1692.8 1000.1 L1693.8 1000.6 L1694.8 1001.1 L1695.8 1001.6 L1696.8 1002.0 L1697.8 1002.4 L1698.8 1002.8 L1699.8 1003.2 L1700.8 1003.6 L1701.8 1004.0 L1702.8 1004.3 L1703.8 1004.6 L1704.8 1004.9 L1705.8 1005.2 L1706.8 1005.5 L1707.8 1005.8 L1708.8 1006.0 L1709.8 1006.3 L1710.8 1006.5 L1711.8 1006.7 L1712.8 1006.9 L1713.8 1007.1 L1714.8 1007.3 L1715.8 1007.5 L1716.8 1007.7 L1717.8 1007.9 L1718.8 1008.0 L1719.8 1008.1 L1720.8 1008.2 L1721.8 1008.3 L1722.8 1008.4 L1723.8 1008.4 L1724.8 1008.5 L1725.8 1008.5 L1726.8 1008.5 L1727.8 1008.6 L1728.8 1008.6 L1729.8 1008.6 L1730.8 1008.7 L1731.8 1008.7 L1732.8 1008.8 L1733.8 1008.9 L1734.8 1008.9 L1735.8 1009.0 L1736.8 1009.1 L1737.8 1009.1 L1738.8 1009.2 L1739.8 1009.2 L1740.8 1009.2 L1741.8 1009.2 L1742.8 1009.3 L1743.8 1009.3 L1744.8 1009.3 L1745.8 1009.2 L1746.8 1009.2 L1747.8 1009.2 L1748.8 1009.2 L1749.8 1009.2 L1750.8 1009.1 L1751.8 1009.1 L1752.8 1009.0 L1753.8 1008.9 L1754.8 1008.8 L1755.8 1008.7 L1756.8 1008.6 L1757.8 1008.4 L1758.8 1008.2 L1759.8 1008.1 L1760.8 1007.8 L1761.8 1007.6 L1762.8 1007.4 L1763.8 1007.1 L1764.8 1006.8 L1765.8 1006.5 L1766.8 1006.2 L1767.8 1005.9 L1768.8 1005.6 L1769.8 1005.2 L1770.8 1004.9 L1771.8 1004.5 L1772.8 1004.2 L1773.8 1003.8 L1774.8 1003.5 L1775.8 1003.1 L1776.8 1002.7 L1777.8 1002.4 L1778.8 1002.0 L1779.8 1001.7 L1780.8 1001.3 L1781.8 1001.0 L1782.8 1000.7 L1783.8 1000.4 L1784.8 1000.1 L1785.8 999.8 L1786.8 999.5 L1787.8 999.2 L1788.8 998.9 L1789.8 998.6 L1790.8 998.4 L1791.8 998.1 L1792.8 997.8 L1793.8 997.6 L1794.8 997.3 L1795.8 997.1 L1796.8 996.8 L1797.8 996.5 L1798.8 996.3 L1799.8 996.0 L1800.8 995.8 L1801.8 995.5 L1802.8 995.2 L1803.8 995.0 L1804.8 994.7 L1805.8 994.4 L1806.8 994.1 L1807.8 993.8 L1808.8 993.5 L1809.8 993.2 L1810.8 992.9 L1811.8 992.5 L1812.8 992.2 L1813.8 991.8 L1814.8 991.4 L1815.8 991.0 L1816.8 990.6 L1817.8 990.1 L1818.8 989.7 L1819.8 989.2 L1820.8 988.8 L1821.8 988.3 L1822.8 987.8 L1823.8 987.3 L1824.8 986.9 L1825.8 986.4 L1826.8 986.0 L1827.8 985.5 L1828.8 985.1 L1829.8 984.7 L1830.8 984.4 L1831.8 984.0 L1832.8 983.7 L1833.8 983.4 L1834.8 983.1 L1835.8 982.8 L1836.8 982.6 L1837.8 982.4 L1838.8 982.2 L1839.8 982.1 L1840.8 981.9 L1841.8 981.8 L1842.8 981.7 L1843.8 981.6 L1844.8 981.5 L1845.8 981.5 L1846.8 981.4 L1847.8 981.4 L1848.8 981.4 L1849.8 981.4 L1850.8 981.4 L1851.8 981.5 L1852.8 981.6 L1853.8 981.6 L1854.8 981.8 L1855.8 981.9 L1856.8 982.0 L1857.8 982.2 L1858.8 982.4 L1859.8 982.6 L1860.8 982.8 L1861.8 983.0 L1862.8 983.2 L1863.8 983.4 L1864.8 983.6 L1865.8 983.8 L1866.8 984.0 L1867.8 984.2 L1868.8 984.3 L1869.8 984.5 L1870.8 984.7 L1871.8 984.8 L1872.8 985.0 L1873.8 985.2 L1874.8 985.4 L1875.8 985.6 L1876.8 985.8 L1877.8 986.1 L1878.8 986.3 L1879.8 986.6 L1880.8 986.8 L1881.8 987.1 L1882.8 987.5 L1883.8 987.8 L1884.8 988.1 L1885.8 988.5 L1886.8 988.9 L1887.8 989.2 L1888.8 989.6 L1889.8 990.0 L1890.8 990.4 L1891.8 990.8 L1892.8 991.2 L1893.8 991.6 L1894.8 992.0 L1895.8 992.4 L1896.8 992.8 L1897.8 993.2 L1898.8 993.5 L1899.8 993.9 L1900.8 994.3 L1901.8 994.6 L1902.8 995.0 L1903.8 995.4 L1904.8 995.7 L1905.8 996.1 L1906.8 996.4 L1907.8 996.8 L1908.8 997.1 L1909.8 997.5 L1910.8 997.8 L1911.8 998.1 L1912.8 998.5 L1913.8 998.8 L1914.8 999.1 L1915.8 999.5 L1916.8 999.8 L1917.8 1000.2 L1918.8 1000.5 L1919.8 1000.8 L1920.8 1001.1 L1921.8 1001.5 L1922.8 1001.8 L1923.8 1002.2 L1924.8 1002.5 L1925.8 1002.9 L1926.8 1003.2 L1927.8 1003.6 L1928.8 1004.0 L1929.8 1004.4 L1930.8 1004.8 L1931.8 1005.2 L1932.8 1005.6 L1933.8 1006.0 L1934.8 1006.4 L1935.8 1006.9 L1936.8 1007.3 L1937.8 1007.7 L1938.8 1008.1 L1939.8 1008.5 L1940.8 1008.9 L1941.8 1009.3 L1942.8 1009.7 L1943.8 1010.0 L1944.8 1010.3 L1945.8 1010.7 L1946.8 1011.0 L1947.8 1011.3 L1948.8 1011.6 L1949.8 1011.9 L1950.8 1012.2 L1951.8 1012.4 L1952.8 1012.7 L1953.8 1013.0 L1954.8 1013.3 L1955.8 1013.5 L1956.8 1013.8 L1957.8 1014.1 L1958.8 1014.3 L1959.8 1014.6 L1960.8 1014.9 L1961.8 1015.2 L1962.8 1015.4 L1963.8 1015.7 L1964.8 1016.0 L1965.8 1016.3 L1966.8 1016.6 L1967.8 1016.9 L1968.8 1017.2 L1969.8 1017.5 L1970.8 1017.8 L1971.8 1018.2 L1972.8 1018.5 L1973.8 1018.8 L1974.8 1019.1 L1975.8 1019.5 L1976.8 1019.8 L1977.8 1020.1 L1978.8 1020.5 L1979.8 1020.8 L1980.8 1021.2 L1981.8 1021.5 L1982.8 1021.9 L1983.8 1022.3 L1984.8 1022.7 L1985.8 1023.0 L1986.8 1023.4 L1987.8 1023.9 L1988.8 1024.3 L1989.8 1024.7 L1990.8 1025.1 L1991.8 1025.5 L1992.8 1026.0 L1993.8 1026.4 L1994.8 1026.8 L1995.8 1027.2 L1996.8 1027.6 L1997.8 1028.0 L1998.8 1028.4 L1999.8 1028.8 L2000.8 1029.2 L2001.8 1029.5 L2002.8 1029.9 L2003.8 1030.3 L2004.8 1030.7 L2005.8 1031.0 L2006.8 1031.4 L2007.8 1031.8 L2008.8 1032.1 L2009.8 1032.5 L2010.8 1032.8 L2011.8 1033.1 L2012.8 1033.5 L2013.8 1033.8 L2014.8 1034.1 L2015.8 1034.4 L2016.8 1034.7 L2017.8 1035.0 L2018.8 1035.3 L2019.8 1035.6 L2020.8 1035.9 L2021.8 1036.2 L2022.8 1036.5 L2023.8 1036.8 L2024.8 1037.1 L2025.8 1037.4 L2026.8 1037.8 L2027.8 1038.1 L2028.8 1038.4 L2029.8 1038.7 L2030.8 1039.0 L2031.8 1039.2 L2032.8 1039.5 L2033.8 1039.7 L2034.1 1039.9" fill="none" stroke="#3a3af0" stroke-width="1.65" stroke-linejoin="round"/>
<path d="M21.8 1039.7 L22.8 1039.4 L23.8 1039.1 L24.8 1038.7 L25.8 1038.3 L26.8 1037.9 L27.8 1037.6 L28.8 1037.3 L29.8 1036.9 L30.8 1036.6 L31.8 1036.3 L32.8 1035.9 L33.8 1035.6 L34.8 1035.3 L35.8 1035.1 L36.8 1035.0 L37.8 1035.0 L38.8 1035.0 L39.8 1035.2 L40.8 1035.4 L41.8 1035.6 L42.8 1035.9 L43.8 1036.2 L44.8 1036.5 L45.8 1036.8 L46.8 1037.1 L47.8 1037.4 L48.8 1037.8 L49.8 1038.1 L50.8 1038.5 L51.8 1038.8 L52.8 1039.1 L53.8 1039.2 L54.8 1039.3 L55.8 1039.3 L56.8 1039.2 L57.8 1039.1 L58.8 1039.0 L59.8 1038.8 L60.8 1038.7 L61.8 1038.7 L62.8 1038.6 L63.8 1038.7 L64.8 1038.7 L65.8 1038.8 L66.8 1038.9 L67.8 1039.0 L68.8 1039.1 L69.8 1039.2 L70.8 1039.4 L71.8 1039.7 L72.8 1040.1 L73.8 1040.7 L74.8 1041.3 L75.8 1042.0 L76.8 1042.7 L77.8 1043.4 L78.8 1044.1 L79.8 1044.7 L80.8 1045.4 L81.8 1046.1 L82.8 1046.7 L83.8 1047.2 L84.8 1047.6 L85.8 1047.9 L86.8 1047.9 L87.8 1047.9 L88.8 1047.7 L89.8 1047.4 L90.8 1047.2 L91.8 1047.0 L92.8 1046.9 L93.8 1047.0 L94.8 1047.3 L95.8 1047.7 L96.8 1048.3 L97.8 1049.0 L98.8 1049.8 L99.8 1050.6 L100.8 1051.4 L101.8 1052.1 L102.8 1052.9 L103.8 1053.7 L104.8 1054.5 L105.8 1055.4 L106.8 1056.1 L107.8 1056.6 L108.8 1057.0 L109.8 1057.2 L110.8 1057.2 L111.8 1057.2 L112.8 1057.2 L113.8 1057.2 L114.8 1057.2 L115.8 1057.2 L116.8 1057.2 L117.8 1057.2 L118.8 1057.0 L119.8 1056.7 L120.8 1056.3 L121.8 1055.7 L122.8 1055.1 L123.8 1054.5 L124.8 1053.9 L125.8 1053.3 L126.8 1052.8 L127.8 1052.3 L128.8 1051.9 L129.8 1051.4 L130.8 1051.0 L131.8 1050.5 L132.8 1050.0 L133.8 1049.5 L134.8 1049.0 L135.8 1048.5 L136.8 1048.0 L137.8 1047.5 L138.8 1047.0 L139.8 1046.5 L140.8 1045.9 L141.8 1045.2 L142.8 1044.5 L143.8 1043.6 L144.8 1042.7 L145.8 1041.7 L146.8 1040.6 L147.8 1039.7 L148.8 1038.8 L149.8 1038.1 L150.8 1037.5 L151.8 1037.0 L152.8 1036.4 L153.8 1036.0 L154.8 1035.6 L155.8 1035.3 L156.8 1035.1 L157.8 1035.0 L158.8 1035.0 L159.8 1035.0 L160.8 1035.1 L161.8 1035.2 L162.8 1035.3 L163.8 1035.4 L164.8 1035.6 L165.8 1035.7 L166.8 1035.9 L167.8 1036.0 L168.8 1036.2 L169.8 1036.4 L170.8 1036.6 L171.8 1036.8 L172.8 1037.1 L173.8 1037.4 L174.8 1037.7 L175.8 1038.1 L176.8 1038.5 L177.8 1039.0 L178.8 1039.5 L179.8 1040.1 L180.8 1040.7 L181.8 1041.3 L182.8 1041.9 L183.8 1042.5 L184.8 1043.2 L185.8 1043.9 L186.8 1044.6 L187.8 1045.3 L188.8 1046.1 L189.8 1047.0 L190.8 1047.8 L191.8 1048.7 L192.8 1049.6 L193.8 1050.6 L194.8 1051.7 L195.8 1052.8 L196.8 1054.1 L197.8 1055.6 L198.8 1057.4 L199.8 1059.5 L200.8 1062.0 L201.8 1064.9 L202.8 1067.8 L203.8 1070.7 L204.8 1073.3 L205.8 1075.8 L206.8 1078.1 L207.8 1080.3 L208.8 1082.3 L209.8 1084.4 L210.8 1086.3 L211.8 1088.1 L212.8 1089.7 L213.8 1091.2 L214.8 1092.6 L215.8 1094.0 L216.8 1095.3 L217.8 1096.5 L218.8 1097.5 L219.8 1098.3 L220.8 1098.7 L221.8 1098.8 L222.8 1098.7 L223.8 1098.5 L224.8 1098.2 L225.8 1097.8 L226.8 1097.4 L227.8 1096.9 L228.8 1096.5 L229.8 1096.0 L230.8 1095.4 L231.8 1094.8 L232.8 1094.1 L233.8 1093.4 L234.8 1092.8 L235.8 1092.4 L236.8 1092.1 L237.8 1092.0 L238.8 1092.0 L239.8 1092.0 L240.8 1092.0 L241.8 1092.0 L242.8 1092.0 L243.8 1092.0 L244.8 1092.0 L245.8 1092.1 L246.8 1092.1 L247.8 1092.3 L248.8 1092.5 L249.8 1092.7 L250.8 1093.0 L251.8 1093.3 L252.8 1093.6 L253.8 1093.9 L254.8 1094.2 L255.8 1094.5 L256.8 1094.9 L257.8 1095.3 L258.8 1095.7 L259.8 1096.2 L260.8 1096.7 L261.8 1097.3 L262.8 1098.0 L263.8 1098.9 L264.8 1099.8 L265.8 1100.8 L266.8 1101.6 L267.8 1102.4 L268.8 1102.9 L269.8 1103.2 L270.8 1103.2 L271.8 1102.9 L272.8 1102.5 L273.8 1102.0 L274.8 1101.5 L275.8 1101.1 L276.8 1100.8 L277.8 1100.8 L278.8 1100.8 L279.8 1100.8 L280.8 1100.9 L281.8 1101.0 L282.8 1101.1 L283.8 1101.2 L284.8 1101.3 L285.8 1101.5 L286.8 1101.7 L287.8 1101.9 L288.8 1102.3 L289.8 1102.6 L290.8 1103.0 L291.8 1103.4 L292.8 1103.8 L293.8 1104.2 L294.8 1104.5 L295.8 1105.0 L296.8 1105.4 L297.8 1105.8 L298.8 1106.2 L299.8 1106.7 L300.8 1107.2 L301.8 1107.7 L302.8 1108.2 L303.8 1108.9 L304.8 1109.5 L305.8 1110.1 L306.8 1110.7 L307.8 1111.0 L308.8 1111.2 L309.8 1111.1 L310.8 1110.8 L311.8 1110.4 L312.8 1109.9 L313.8 1109.3 L314.8 1108.7 L315.8 1108.1 L316.8 1107.5 L317.8 1107.1 L318.8 1106.7 L319.8 1106.3 L320.8 1106.0 L321.8 1105.7 L322.8 1105.4 L323.8 1105.1 L324.8 1104.8 L325.8 1104.5 L326.8 1104.3 L327.8 1104.1 L328.8 1103.8 L329.8 1103.6 L330.8 1103.4 L331.8 1103.2 L332.8 1102.9 L333.8 1102.6 L334.8 1102.2 L335.8 1101.8 L336.8 1101.3 L337.8 1100.8 L338.8 1100.3 L339.8 1099.7 L340.8 1099.2 L341.8 1098.6 L342.8 1098.1 L343.8 1097.6 L344.8 1097.0 L345.8 1096.4 L346.8 1095.9 L347.8 1095.3 L348.8 1094.6 L349.8 1094.0 L350.8 1093.3 L351.8 1092.6 L352.8 1091.9 L353.8 1091.1 L354.8 1090.3 L355.8 1089.5 L356.8 1088.6 L357.8 1087.7 L358.8 1086.6 L359.8 1085.5 L360.8 1084.3 L361.8 1083.1 L362.8 1082.1 L363.8 1081.1 L364.8 1080.4 L365.8 1079.8 L366.8 1079.2 L367.8 1078.7 L368.8 1078.3 L369.8 1077.9 L370.8 1077.6 L371.8 1077.3 L372.8 1077.2 L373.8 1077.2 L374.8 1077.3 L375.8 1077.6 L376.8 1077.9 L377.8 1078.3 L378.8 1078.7 L379.8 1079.2 L380.8 1079.7 L381.8 1080.2 L382.8 1080.7 L383.8 1081.3 L384.8 1081.9 L385.8 1082.5 L386.8 1083.1 L387.8 1083.7 L388.8 1084.3 L389.8 1084.7 L390.8 1085.2 L391.8 1085.5 L392.8 1085.9 L393.8 1086.2 L394.8 1086.6 L395.8 1086.9 L396.8 1087.3 L397.8 1087.7 L398.8 1088.2 L399.8 1088.8 L400.8 1089.4 L401.8 1090.0 L402.8 1090.6 L403.8 1091.3 L404.8 1091.9 L405.8 1092.6 L406.8 1093.3 L407.8 1094.0 L408.8 1094.7 L409.8 1095.4 L410.8 1096.1 L411.8 1096.7 L412.8 1097.3 L413.8 1097.8 L414.8 1098.3 L415.8 1098.7 L416.8 1099.2 L417.8 1099.6 L418.8 1099.9 L419.8 1100.1 L420.8 1100.1 L421.8 1100.1 L422.8 1100.0 L423.8 1099.8 L424.8 1099.6 L425.8 1099.4 L426.8 1099.2 L427.8 1099.1 L428.8 1099.0 L429.8 1099.0 L430.8 1099.0 L431.8 1099.0 L432.8 1099.1 L433.8 1099.2 L434.8 1099.3 L435.8 1099.4 L436.8 1099.6 L437.8 1099.9 L438.8 1100.2 L439.8 1100.7 L440.8 1101.2 L441.8 1101.7 L442.8 1102.1 L443.8 1102.4 L444.8 1102.6 L445.8 1102.6 L446.8 1102.6 L447.8 1102.5 L448.8 1102.4 L449.8 1102.3 L450.8 1102.1 L451.8 1101.9 L452.8 1101.7 L453.8 1101.4 L454.8 1100.9 L455.8 1100.3 L456.8 1099.4 L457.8 1098.5 L458.8 1097.4 L459.8 1096.3 L460.8 1095.2 L461.8 1094.1 L462.8 1092.9 L463.8 1091.6 L464.8 1090.2 L465.8 1088.9 L466.8 1087.5 L467.8 1086.2 L468.8 1084.9 L469.8 1083.7 L470.8 1082.5 L471.8 1081.3 L472.8 1080.1 L473.8 1079.0 L474.8 1078.0 L475.8 1077.2 L476.8 1076.5 L477.8 1076.0 L478.8 1075.5 L479.8 1074.9 L480.8 1074.3 L481.8 1073.6 L482.8 1072.8 L483.8 1071.9 L484.8 1071.1 L485.8 1070.1 L486.8 1069.2 L487.8 1068.2 L488.8 1067.2 L489.8 1066.2 L490.8 1065.2 L491.8 1064.2 L492.8 1063.0 L493.8 1061.9 L494.8 1060.6 L495.8 1059.4 L496.8 1058.2 L497.8 1057.0 L498.8 1055.8 L499.8 1054.7 L500.8 1053.6 L501.8 1052.7 L502.8 1051.8 L503.8 1051.0 L504.8 1050.2 L505.8 1049.4 L506.8 1048.7 L507.8 1048.1 L508.8 1047.5 L509.8 1047.0 L510.8 1046.6 L511.8 1046.3 L512.8 1046.0 L513.8 1045.7 L514.8 1045.4 L515.8 1045.0 L516.8 1044.5 L517.8 1043.9 L518.8 1043.1 L519.8 1042.2 L520.8 1041.4 L521.8 1040.6 L522.8 1039.9 L523.8 1039.3 L524.8 1039.0 L525.8 1038.9 L526.8 1038.9 L527.8 1038.9 L528.8 1039.0 L529.8 1039.1 L530.8 1039.1 L531.8 1039.1 L532.8 1038.9 L533.8 1038.6 L534.8 1038.1 L535.8 1037.6 L536.8 1036.9 L537.8 1036.3 L538.8 1035.6 L539.8 1034.9 L540.8 1034.3 L541.8 1033.6 L542.8 1032.8 L543.8 1032.0 L544.8 1031.2 L545.8 1030.3 L546.8 1029.3 L547.8 1028.3 L548.8 1027.2 L549.8 1026.0 L550.8 1024.7 L551.8 1023.2 L552.8 1021.6 L553.8 1020.0 L554.8 1018.5 L555.8 1016.9 L556.8 1015.3 L557.8 1013.8 L558.8 1012.3 L559.8 1010.8 L560.8 1009.3 L561.8 1007.8 L562.8 1006.3 L563.8 1004.8 L564.8 1003.2 L565.8 1001.6 L566.8 1000.0 L567.8 998.4 L568.8 996.9 L569.8 995.4 L570.8 994.1 L571.8 992.9 L572.8 991.8 L573.8 990.8 L574.8 989.9 L575.8 989.0 L576.8 988.2 L577.8 987.3 L578.8 986.5 L579.8 985.5 L580.8 984.6 L581.8 983.6 L582.8 982.5 L583.8 981.5 L584.8 980.5 L585.8 979.4 L586.8 978.5 L587.8 977.5 L588.8 976.5 L589.8 975.6 L590.8 974.7 L591.8 973.7 L592.8 972.9 L593.8 972.0 L594.8 971.3 L595.8 970.6 L596.8 969.9 L597.8 969.2 L598.8 968.5 L599.8 967.7 L600.8 966.7 L601.8 965.7 L602.8 964.7 L603.8 964.0 L604.8 963.6 L605.8 963.5 L606.8 963.6 L607.8 963.8 L608.8 964.0 L609.8 964.3 L610.8 964.6 L611.8 965.0 L612.8 965.5 L613.8 966.1 L614.8 966.8 L615.8 967.5 L616.8 968.3 L617.8 969.0 L618.8 969.5 L619.8 969.8 L620.8 969.9 L621.8 969.8 L622.8 969.5 L623.8 969.1 L624.8 968.7 L625.8 968.3 L626.8 968.0 L627.8 967.7 L628.8 967.5 L629.8 967.4 L630.8 967.3 L631.8 967.2 L632.8 967.2 L633.8 967.1 L634.8 967.0 L635.8 966.8 L636.8 966.5 L637.8 966.0 L638.8 965.2 L639.8 964.3 L640.8 963.3 L641.8 962.2 L642.8 961.2 L643.8 960.2 L644.8 959.4 L645.8 958.6 L646.8 957.8 L647.8 957.0 L648.8 956.3 L649.8 955.6 L650.8 954.9 L651.8 954.3 L652.8 953.6 L653.8 952.9 L654.8 952.2 L655.8 951.5 L656.8 950.9 L657.8 950.3 L658.8 949.9 L659.8 949.6 L660.8 949.5 L661.8 949.5 L662.8 949.6 L663.8 949.8 L664.8 949.9 L665.8 950.1 L666.8 950.3 L667.8 950.4 L668.8 950.5 L669.8 950.6 L670.8 950.6 L671.8 950.6 L672.8 950.6 L673.8 950.5 L674.8 950.5 L675.8 950.4 L676.8 950.3 L677.8 950.1 L678.8 949.9 L679.8 949.7 L680.8 949.3 L681.8 949.0 L682.8 948.6 L683.8 948.4 L684.8 948.3 L685.8 948.3 L686.8 948.3 L687.8 948.4 L688.8 948.5 L689.8 948.7 L690.8 948.8 L691.8 949.0 L692.8 949.3 L693.8 949.6 L694.8 950.0 L695.8 950.4 L696.8 950.9 L697.8 951.4 L698.8 951.9 L699.8 952.4 L700.8 952.9 L701.8 953.4 L702.8 954.0 L703.8 954.5 L704.8 955.1 L705.8 955.5 L706.8 956.0 L707.8 956.4 L708.8 956.7 L709.8 957.0 L710.8 957.3 L711.8 957.5 L712.8 957.5 L713.8 957.3 L714.8 957.0 L715.8 956.7 L716.8 956.6 L717.8 956.7 L718.8 956.9 L719.8 957.4 L720.8 958.0 L721.8 958.8 L722.8 959.5 L723.8 960.3 L724.8 961.2 L725.8 962.0 L726.8 963.1 L727.8 964.1 L728.8 965.2 L729.8 966.2 L730.8 966.9 L731.8 967.2 L732.8 967.2 L733.8 966.9 L734.8 966.3 L735.8 965.6 L736.8 964.9 L737.8 964.3 L738.8 963.8 L739.8 963.5 L740.8 963.5 L741.8 963.5 L742.8 963.7 L743.8 963.9 L744.8 964.2 L745.8 964.5 L746.8 964.9 L747.8 965.3 L748.8 965.8 L749.8 966.5 L750.8 967.2 L751.8 968.1 L752.8 969.0 L753.8 969.9 L754.8 970.8 L755.8 971.7 L756.8 972.7 L757.8 973.6 L758.8 974.6 L759.8 975.6 L760.8 976.5 L761.8 977.2 L762.8 977.6 L763.8 977.9 L764.8 977.9 L765.8 977.8 L766.8 977.6 L767.8 977.4 L768.8 977.2 L769.8 977.0 L770.8 976.7 L771.8 976.4 L772.8 976.0 L773.8 975.4 L774.8 974.8 L775.8 974.1 L776.8 973.4 L777.8 972.7 L778.8 972.1 L779.8 971.7 L780.8 971.4 L781.8 971.4 L782.8 971.4 L783.8 971.5 L784.8 971.7 L785.8 971.8 L786.8 971.9 L787.8 972.0 L788.8 972.0 L789.8 972.0 L790.8 972.0 L791.8 972.0 L792.8 972.0 L793.8 972.0 L794.8 972.0 L795.8 972.0 L796.8 972.0 L797.8 972.1 L798.8 972.1 L799.8 972.2 L800.8 972.3 L801.8 972.5 L802.8 972.7 L803.8 972.9 L804.8 973.1 L805.8 973.5 L806.8 973.9 L807.8 974.3 L808.8 974.8 L809.8 975.3 L810.8 975.8 L811.8 976.1 L812.8 976.4 L813.8 976.7 L814.8 977.0 L815.8 977.2 L816.8 977.4 L817.8 977.6 L818.8 977.8 L819.8 977.9 L820.8 978.0 L821.8 978.0 L822.8 978.1 L823.8 978.1 L824.8 978.1 L825.8 978.1 L826.8 978.2 L827.8 978.2 L828.8 978.3 L829.8 978.4 L830.8 978.6 L831.8 978.8 L832.8 979.0 L833.8 979.3 L834.8 979.7 L835.8 980.1 L836.8 980.6 L837.8 981.4 L838.8 982.5 L839.8 983.9 L840.8 985.5 L841.8 987.1 L842.8 988.8 L843.8 990.3 L844.8 991.7 L845.8 993.0 L846.8 994.2 L847.8 995.3 L848.8 996.5 L849.8 997.6 L850.8 998.8 L851.8 999.9 L852.8 1001.0 L853.8 1002.1 L854.8 1003.2 L855.8 1004.3 L856.8 1005.4 L857.8 1006.6 L858.8 1007.8 L859.8 1009.0 L860.8 1010.3 L861.8 1011.7 L862.8 1013.2 L863.8 1014.8 L864.8 1016.3 L865.8 1017.9 L866.8 1019.4 L867.8 1020.8 L868.8 1022.1 L869.8 1023.3 L870.8 1024.6 L871.8 1025.8 L872.8 1026.9 L873.8 1028.0 L874.8 1029.1 L875.8 1030.1 L876.8 1031.0 L877.8 1031.9 L878.8 1032.7 L879.8 1033.6 L880.8 1034.4 L881.8 1035.2 L882.8 1036.0 L883.8 1036.9 L884.8 1037.8 L885.8 1038.8 L886.8 1039.8 L887.8 1040.8 L888.8 1041.8 L889.8 1042.8 L890.8 1043.8 L891.8 1044.9 L892.8 1045.9 L893.8 1046.9 L894.8 1048.0 L895.8 1049.0 L896.8 1050.0 L897.8 1051.0 L898.8 1052.0 L899.8 1052.9 L900.8 1053.8 L901.8 1054.7 L902.8 1055.7 L903.8 1056.6 L904.8 1057.4 L905.8 1058.0 L906.8 1058.4 L907.8 1058.6 L908.8 1058.6 L909.8 1058.6 L910.8 1058.6 L911.8 1058.5 L912.8 1058.5 L913.8 1058.4 L914.8 1058.3 L915.8 1058.2 L916.8 1058.1 L917.8 1058.0 L918.8 1057.8 L919.8 1057.6 L920.8 1057.4 L921.8 1057.1 L922.8 1056.8 L923.8 1056.4 L924.8 1055.9 L925.8 1055.3 L926.8 1054.6 L927.8 1053.8 L928.8 1053.0 L929.8 1052.0 L930.8 1051.1 L931.8 1050.1 L932.8 1049.1 L933.8 1048.0 L934.8 1046.9 L935.8 1045.7 L936.8 1044.5 L937.8 1043.2 L938.8 1041.8 L939.8 1040.4 L940.8 1038.8 L941.8 1037.2 L942.8 1035.6 L943.8 1033.9 L944.8 1032.3 L945.8 1030.7 L946.8 1029.2 L947.8 1027.8 L948.8 1026.5 L949.8 1025.2 L950.8 1024.0 L951.8 1022.8 L952.8 1021.7 L953.8 1020.7 L954.8 1019.8 L955.8 1019.0 L956.8 1018.3 L957.8 1017.7 L958.8 1017.1 L959.8 1016.6 L960.8 1016.0 L961.8 1015.4 L962.8 1014.7 L963.8 1013.9 L964.8 1013.0 L965.8 1012.0 L966.8 1011.0 L967.8 1009.8 L968.8 1008.7 L969.8 1007.4 L970.8 1006.2 L971.8 1004.9 L972.8 1003.5 L973.8 1002.1 L974.8 1000.7 L975.8 999.2 L976.8 997.8 L977.8 996.4 L978.8 995.0 L979.8 993.7 L980.8 992.5 L981.8 991.2 L982.8 990.0 L983.8 988.8 L984.8 987.6 L985.8 986.4 L986.8 985.3 L987.8 984.1 L988.8 982.9 L989.8 981.6 L990.8 980.4 L991.8 979.2 L992.8 978.1 L993.8 977.0 L994.8 976.0 L995.8 975.0 L996.8 974.2 L997.8 973.3 L998.8 972.6 L999.8 971.8 L1000.8 971.1 L1001.8 970.5 L1002.8 969.8 L1003.8 969.2 L1004.8 968.7 L1005.8 968.1 L1006.8 967.6 L1007.8 967.1 L1008.8 966.6 L1009.8 966.1 L1010.8 965.6 L1011.8 965.1 L1012.8 964.5 L1013.8 963.8 L1014.8 963.1 L1015.8 962.5 L1016.8 961.9 L1017.8 961.4 L1018.8 961.1 L1019.8 960.9 L1020.8 960.8 L1021.8 960.7 L1022.8 960.7 L1023.8 960.7 L1024.8 960.6 L1025.8 960.6 L1026.8 960.6 L1027.8 960.6 L1028.8 960.6 L1029.8 960.6 L1030.8 960.6 L1031.8 960.6 L1032.8 960.6 L1033.8 960.6 L1034.8 960.6 L1035.8 960.6 L1036.8 960.6 L1037.8 960.6 L1038.8 960.6 L1039.8 960.6 L1040.8 960.6 L1041.8 960.6 L1042.8 960.6 L1043.8 960.6 L1044.8 960.6 L1045.8 960.6 L1046.8 960.5 L1047.8 960.4 L1048.8 960.4 L1049.8 960.3 L1050.8 960.2 L1051.8 960.1 L1052.8 960.0 L1053.8 959.9 L1054.8 959.7 L1055.8 959.5 L1056.8 959.4 L1057.8 959.1 L1058.8 958.9 L1059.8 958.5 L1060.8 958.0 L1061.8 957.3 L1062.8 956.6 L1063.8 955.9 L1064.8 955.2 L1065.8 954.6 L1066.8 954.2 L1067.8 954.0 L1068.8 953.8 L1069.8 953.6 L1070.8 953.3 L1071.8 952.7 L1072.8 952.1 L1073.8 951.4 L1074.8 950.7 L1075.8 950.1 L1076.8 949.6 L1077.8 949.2 L1078.8 948.8 L1079.8 948.5 L1080.8 948.2 L1081.8 947.8 L1082.8 947.5 L1083.8 947.2 L1084.8 946.9 L1085.8 946.5 L1086.8 946.2 L1087.8 945.9 L1088.8 945.5 L1089.8 945.2 L1090.8 944.9 L1091.8 944.5 L1092.8 944.2 L1093.8 943.8 L1094.8 943.4 L1095.8 943.0 L1096.8 942.7 L1097.8 942.5 L1098.8 942.3 L1099.8 942.1 L1100.8 942.0 L1101.8 941.9 L1102.8 941.7 L1103.8 941.7 L1104.8 941.6 L1105.8 941.5 L1106.8 941.6 L1107.8 941.7 L1108.8 942.2 L1109.8 942.9 L1110.8 943.9 L1111.8 945.1 L1112.8 946.4 L1113.8 947.6 L1114.8 948.8 L1115.8 949.9 L1116.8 951.0 L1117.8 952.1 L1118.8 953.2 L1119.8 954.3 L1120.8 955.4 L1121.8 956.5 L1122.8 957.6 L1123.8 958.7 L1124.8 959.7 L1125.8 960.8 L1126.8 961.8 L1127.8 962.9 L1128.8 963.9 L1129.8 965.0 L1130.8 966.1 L1131.8 967.2 L1132.8 968.4 L1133.8 969.6 L1134.8 970.8 L1135.8 972.0 L1136.8 973.2 L1137.8 974.3 L1138.8 975.3 L1139.8 976.3 L1140.8 977.3 L1141.8 978.3 L1142.8 979.2 L1143.8 980.1 L1144.8 980.9 L1145.8 981.5 L1146.8 982.1 L1147.8 982.5 L1148.8 982.9 L1149.8 983.3 L1150.8 983.6 L1151.8 983.9 L1152.8 984.3 L1153.8 984.6 L1154.8 985.0 L1155.8 985.5 L1156.8 985.9 L1157.8 986.4 L1158.8 986.8 L1159.8 987.4 L1160.8 987.9 L1161.8 988.6 L1162.8 989.3 L1163.8 990.1 L1164.8 991.0 L1165.8 992.0 L1166.8 993.0 L1167.8 994.0 L1168.8 995.0 L1169.8 996.0 L1170.8 996.8 L1171.8 997.7 L1172.8 998.5 L1173.8 999.2 L1174.8 1000.0 L1175.8 1000.7 L1176.8 1001.4 L1177.8 1002.0 L1178.8 1002.7 L1179.8 1003.3 L1180.8 1003.8 L1181.8 1004.4 L1182.8 1004.9 L1183.8 1005.4 L1184.8 1006.0 L1185.8 1006.6 L1186.8 1007.3 L1187.8 1008.1 L1188.8 1008.9 L1189.8 1009.9 L1190.8 1010.8 L1191.8 1011.7 L1192.8 1012.5 L1193.8 1013.1 L1194.8 1013.6 L1195.8 1013.9 L1196.8 1014.2 L1197.8 1014.4 L1198.8 1014.6 L1199.8 1014.8 L1200.8 1015.0 L1201.8 1015.3 L1202.8 1015.5 L1203.8 1015.8 L1204.8 1016.2 L1205.8 1016.5 L1206.8 1016.9 L1207.8 1017.3 L1208.8 1017.7 L1209.8 1018.2 L1210.8 1018.7 L1211.8 1019.2 L1212.8 1019.9 L1213.8 1020.6 L1214.8 1021.3 L1215.8 1022.1 L1216.8 1023.0 L1217.8 1023.9 L1218.8 1024.8 L1219.8 1025.9 L1220.8 1027.0 L1221.8 1028.2 L1222.8 1029.5 L1223.8 1030.7 L1224.8 1031.9 L1225.8 1033.1 L1226.8 1034.3 L1227.8 1035.4 L1228.8 1036.5 L1229.8 1037.6 L1230.8 1038.6 L1231.8 1039.6 L1232.8 1040.5 L1233.8 1041.3 L1234.8 1042.0 L1235.8 1042.6 L1236.8 1043.3 L1237.8 1043.8 L1238.8 1044.4 L1239.8 1044.8 L1240.8 1045.2 L1241.8 1045.5 L1242.8 1045.7 L1243.8 1045.9 L1244.8 1046.1 L1245.8 1046.2 L1246.8 1046.3 L1247.8 1046.4 L1248.8 1046.5 L1249.8 1046.5 L1250.8 1046.5 L1251.8 1046.4 L1252.8 1046.4 L1253.8 1046.3 L1254.8 1046.1 L1255.8 1045.9 L1256.8 1045.7 L1257.8 1045.5 L1258.8 1045.1 L1259.8 1044.6 L1260.8 1043.7 L1261.8 1042.6 L1262.8 1041.4 L1263.8 1040.2 L1264.8 1039.3 L1265.8 1038.7 L1266.8 1038.5 L1267.8 1038.4 L1268.8 1038.4 L1269.8 1038.5 L1270.8 1038.6 L1271.8 1038.7 L1272.8 1038.8 L1273.8 1038.9 L1274.8 1039.1 L1275.8 1039.4 L1276.8 1039.8 L1277.8 1040.3 L1278.8 1040.9 L1279.8 1041.5 L1280.8 1042.1 L1281.8 1042.4 L1282.8 1042.6 L1283.8 1042.7 L1284.8 1042.6 L1285.8 1042.4 L1286.8 1042.1 L1287.8 1041.8 L1288.8 1041.5 L1289.8 1041.2 L1290.8 1040.9 L1291.8 1040.6 L1292.8 1040.4 L1293.8 1040.1 L1294.8 1039.8 L1295.8 1039.5 L1296.8 1039.3 L1297.8 1039.2 L1298.8 1039.1 L1299.8 1039.1 L1300.8 1039.1 L1301.8 1039.2 L1302.8 1039.2 L1303.8 1039.3 L1304.8 1039.3 L1305.8 1039.4 L1306.8 1039.6 L1307.8 1039.8 L1308.8 1040.1 L1309.8 1040.6 L1310.8 1041.2 L1311.8 1041.9 L1312.8 1042.6 L1313.8 1043.3 L1314.8 1044.0 L1315.8 1044.6 L1316.8 1045.2 L1317.8 1045.8 L1318.8 1046.4 L1319.8 1047.0 L1320.8 1047.6 L1321.8 1048.3 L1322.8 1049.0 L1323.8 1049.9 L1324.8 1050.8 L1325.8 1051.9 L1326.8 1053.1 L1327.8 1054.3 L1328.8 1055.6 L1329.8 1056.8 L1330.8 1058.0 L1331.8 1059.3 L1332.8 1060.5 L1333.8 1061.8 L1334.8 1063.0 L1335.8 1064.2 L1336.8 1065.3 L1337.8 1066.3 L1338.8 1067.1 L1339.8 1067.9 L1340.8 1068.6 L1341.8 1069.2 L1342.8 1069.8 L1343.8 1070.3 L1344.8 1070.9 L1345.8 1071.5 L1346.8 1072.2 L1347.8 1072.9 L1348.8 1073.7 L1349.8 1074.6 L1350.8 1075.4 L1351.8 1076.3 L1352.8 1077.2 L1353.8 1078.2 L1354.8 1079.1 L1355.8 1080.2 L1356.8 1081.3 L1357.8 1082.5 L1358.8 1083.6 L1359.8 1084.7 L1360.8 1085.6 L1361.8 1086.4 L1362.8 1087.0 L1363.8 1087.4 L1364.8 1087.6 L1365.8 1087.9 L1366.8 1088.1 L1367.8 1088.2 L1368.8 1088.4 L1369.8 1088.4 L1370.8 1088.4 L1371.8 1088.4 L1372.8 1088.2 L1373.8 1088.0 L1374.8 1087.8 L1375.8 1087.5 L1376.8 1087.1 L1377.8 1086.8 L1378.8 1086.4 L1379.8 1086.0 L1380.8 1085.6 L1381.8 1085.1 L1382.8 1084.6 L1383.8 1084.1 L1384.8 1083.5 L1385.8 1082.9 L1386.8 1082.2 L1387.8 1081.5 L1388.8 1080.7 L1389.8 1079.9 L1390.8 1079.1 L1391.8 1078.4 L1392.8 1077.8 L1393.8 1077.5 L1394.8 1077.4 L1395.8 1077.4 L1396.8 1077.4 L1397.8 1077.4 L1398.8 1077.5 L1399.8 1077.5 L1400.8 1077.5 L1401.8 1077.5 L1402.8 1077.3 L1403.8 1076.9 L1404.8 1076.4 L1405.8 1075.8 L1406.8 1075.1 L1407.8 1074.3 L1408.8 1073.6 L1409.8 1072.8 L1410.8 1072.0 L1411.8 1071.2 L1412.8 1070.3 L1413.8 1069.3 L1414.8 1068.4 L1415.8 1067.6 L1416.8 1066.9 L1417.8 1066.2 L1418.8 1065.7 L1419.8 1065.3 L1420.8 1065.0 L1421.8 1064.7 L1422.8 1064.3 L1423.8 1064.0 L1424.8 1063.7 L1425.8 1063.4 L1426.8 1063.0 L1427.8 1062.6 L1428.8 1062.2 L1429.8 1061.7 L1430.8 1061.2 L1431.8 1060.8 L1432.8 1060.4 L1433.8 1060.0 L1434.8 1059.7 L1435.8 1059.4 L1436.8 1059.1 L1437.8 1058.8 L1438.8 1058.5 L1439.8 1058.3 L1440.8 1058.0 L1441.8 1057.9 L1442.8 1057.7 L1443.8 1057.5 L1444.8 1057.4 L1445.8 1057.3 L1446.8 1057.2 L1447.8 1057.1 L1448.8 1057.0 L1449.8 1057.0 L1450.8 1057.0 L1451.8 1057.0 L1452.8 1057.0 L1453.8 1057.0 L1454.8 1057.0 L1455.8 1057.0 L1456.8 1057.0 L1457.8 1057.0 L1458.8 1057.0 L1459.8 1057.0 L1460.8 1057.1 L1461.8 1057.2 L1462.8 1057.4 L1463.8 1057.5 L1464.8 1057.6 L1465.8 1057.6 L1466.8 1057.6 L1467.8 1057.5 L1468.8 1057.2 L1469.8 1056.9 L1470.8 1056.5 L1471.8 1056.1 L1472.8 1055.6 L1473.8 1055.1 L1474.8 1054.6 L1475.8 1054.0 L1476.8 1053.3 L1477.8 1052.5 L1478.8 1051.8 L1479.8 1051.0 L1480.8 1050.2 L1481.8 1049.5 L1482.8 1048.8 L1483.8 1048.1 L1484.8 1047.5 L1485.8 1046.9 L1486.8 1046.4 L1487.8 1045.8 L1488.8 1045.2 L1489.8 1044.5 L1490.8 1043.9 L1491.8 1043.2 L1492.8 1042.6 L1493.8 1041.9 L1494.8 1041.2 L1495.8 1040.4 L1496.8 1039.7 L1497.8 1038.9 L1498.8 1038.0 L1499.8 1036.9 L1500.8 1035.8 L1501.8 1034.5 L1502.8 1033.4 L1503.8 1032.4 L1504.8 1031.6 L1505.8 1031.1 L1506.8 1030.8 L1507.8 1030.7 L1508.8 1030.6 L1509.8 1030.6 L1510.8 1030.5 L1511.8 1030.4 L1512.8 1030.4 L1513.8 1030.4 L1514.8 1030.4 L1515.8 1030.5 L1516.8 1030.5 L1517.8 1030.7 L1518.8 1030.8 L1519.8 1031.1 L1520.8 1031.3 L1521.8 1031.6 L1522.8 1032.1 L1523.8 1032.8 L1524.8 1033.6 L1525.8 1034.7 L1526.8 1035.8 L1527.8 1036.9 L1528.8 1037.9 L1529.8 1038.8 L1530.8 1039.5 L1531.8 1040.0 L1532.8 1040.6 L1533.8 1041.0 L1534.8 1041.5 L1535.8 1042.0 L1536.8 1042.5 L1537.8 1043.1 L1538.8 1043.7 L1539.8 1044.4 L1540.8 1045.1 L1541.8 1045.9 L1542.8 1046.8 L1543.8 1047.7 L1544.8 1048.7 L1545.8 1049.8 L1546.8 1051.1 L1547.8 1052.7 L1548.8 1054.5 L1549.8 1056.3 L1550.8 1058.0 L1551.8 1059.6 L1552.8 1060.7 L1553.8 1061.4 L1554.8 1061.7 L1555.8 1061.6 L1556.8 1061.3 L1557.8 1060.8 L1558.8 1060.3 L1559.8 1059.6 L1560.8 1058.9 L1561.8 1058.1 L1562.8 1057.1 L1563.8 1056.0 L1564.8 1054.6 L1565.8 1053.0 L1566.8 1051.3 L1567.8 1049.6 L1568.8 1047.9 L1569.8 1046.2 L1570.8 1044.4 L1571.8 1042.7 L1572.8 1040.9 L1573.8 1039.0 L1574.8 1037.1 L1575.8 1035.2 L1576.8 1033.2 L1577.8 1031.2 L1578.8 1029.1 L1579.8 1027.0 L1580.8 1024.7 L1581.8 1022.5 L1582.8 1020.2 L1583.8 1018.1 L1584.8 1016.0 L1585.8 1014.1 L1586.8 1012.2 L1587.8 1010.3 L1588.8 1008.6 L1589.8 1006.9 L1590.8 1005.4 L1591.8 1004.1 L1592.8 1003.0 L1593.8 1002.2 L1594.8 1001.4 L1595.8 1000.7 L1596.8 1000.1 L1597.8 999.6 L1598.8 999.1 L1599.8 998.6 L1600.8 998.2 L1601.8 997.8 L1602.8 997.4 L1603.8 997.1 L1604.8 996.8 L1605.8 996.5 L1606.8 996.2 L1607.8 995.9 L1608.8 995.6 L1609.8 995.5 L1610.8 995.5 L1611.8 995.6 L1612.8 995.7 L1613.8 995.8 L1614.8 995.9 L1615.8 996.0 L1616.8 996.1 L1617.8 996.0 L1618.8 995.9 L1619.8 995.7 L1620.8 995.4 L1621.8 995.0 L1622.8 994.6 L1623.8 994.2 L1624.8 993.8 L1625.8 993.4 L1626.8 993.1 L1627.8 992.8 L1628.8 992.4 L1629.8 992.1 L1630.8 991.7 L1631.8 991.3 L1632.8 990.8 L1633.8 990.3 L1634.8 989.6 L1635.8 988.7 L1636.8 987.6 L1637.8 986.5 L1638.8 985.5 L1639.8 984.5 L1640.8 983.6 L1641.8 982.9 L1642.8 982.3 L1643.8 981.7 L1644.8 981.1 L1645.8 980.6 L1646.8 980.2 L1647.8 979.9 L1648.8 979.7 L1649.8 979.6 L1650.8 979.6 L1651.8 979.6 L1652.8 979.7 L1653.8 979.9 L1654.8 980.1 L1655.8 980.3 L1656.8 980.6 L1657.8 980.9 L1658.8 981.3 L1659.8 981.8 L1660.8 982.3 L1661.8 983.0 L1662.8 983.7 L1663.8 984.4 L1664.8 985.2 L1665.8 986.0 L1666.8 986.8 L1667.8 987.7 L1668.8 988.7 L1669.8 989.7 L1670.8 990.8 L1671.8 991.8 L1672.8 992.9 L1673.8 993.9 L1674.8 994.9 L1675.8 995.9 L1676.8 996.8 L1677.8 997.8 L1678.8 998.8 L1679.8 999.8 L1680.8 1000.8 L1681.8 1001.9 L1682.8 1003.1 L1683.8 1004.4 L1684.8 1005.7 L1685.8 1007.1 L1686.8 1008.4 L1687.8 1009.7 L1688.8 1010.8 L1689.8 1011.8 L1690.8 1012.8 L1691.8 1013.6 L1692.8 1014.5 L1693.8 1015.2 L1694.8 1015.9 L1695.8 1016.6 L1696.8 1017.1 L1697.8 1017.5 L1698.8 1017.8 L1699.8 1018.0 L1700.8 1018.3 L1701.8 1018.5 L1702.8 1018.6 L1703.8 1018.8 L1704.8 1018.9 L1705.8 1018.9 L1706.8 1018.9 L1707.8 1018.8 L1708.8 1018.6 L1709.8 1018.4 L1710.8 1018.1 L1711.8 1017.8 L1712.8 1017.4 L1713.8 1017.0 L1714.8 1016.5 L1715.8 1016.0 L1716.8 1015.4 L1717.8 1014.8 L1718.8 1014.1 L1719.8 1013.5 L1720.8 1012.9 L1721.8 1012.4 L1722.8 1011.9 L1723.8 1011.5 L1724.8 1011.1 L1725.8 1010.8 L1726.8 1010.5 L1727.8 1010.2 L1728.8 1010.0 L1729.8 1009.9 L1730.8 1009.8 L1731.8 1009.9 L1732.8 1010.1 L1733.8 1010.3 L1734.8 1010.5 L1735.8 1010.7 L1736.8 1010.9 L1737.8 1010.9 L1738.8 1010.9 L1739.8 1010.7 L1740.8 1010.5 L1741.8 1010.2 L1742.8 1009.8 L1743.8 1009.5 L1744.8 1009.1 L1745.8 1008.8 L1746.8 1008.6 L1747.8 1008.4 L1748.8 1008.2 L1749.8 1008.0 L1750.8 1007.9 L1751.8 1007.8 L1752.8 1007.6 L1753.8 1007.3 L1754.8 1007.0 L1755.8 1006.7 L1756.8 1006.2 L1757.8 1005.6 L1758.8 1005.0 L1759.8 1004.3 L1760.8 1003.7 L1761.8 1002.9 L1762.8 1002.2 L1763.8 1001.4 L1764.8 1000.6 L1765.8 999.7 L1766.8 998.9 L1767.8 998.0 L1768.8 997.1 L1769.8 996.2 L1770.8 995.3 L1771.8 994.4 L1772.8 993.4 L1773.8 992.5 L1774.8 991.7 L1775.8 991.0 L1776.8 990.4 L1777.8 990.0 L1778.8 989.7 L1779.8 989.4 L1780.8 989.2 L1781.8 989.0 L1782.8 988.9 L1783.8 988.8 L1784.8 988.7 L1785.8 988.8 L1786.8 988.9 L1787.8 989.0 L1788.8 989.2 L1789.8 989.5 L1790.8 989.7 L1791.8 989.8 L1792.8 989.8 L1793.8 989.8 L1794.8 989.7 L1795.8 989.5 L1796.8 989.3 L1797.8 989.0 L1798.8 988.7 L1799.8 988.4 L1800.8 988.1 L1801.8 987.8 L1802.8 987.5 L1803.8 987.3 L1804.8 987.0 L1805.8 986.6 L1806.8 986.3 L1807.8 985.9 L1808.8 985.3 L1809.8 984.7 L1810.8 983.8 L1811.8 982.8 L1812.8 981.6 L1813.8 980.4 L1814.8 979.2 L1815.8 978.1 L1816.8 977.0 L1817.8 976.1 L1818.8 975.2 L1819.8 974.4 L1820.8 973.6 L1821.8 972.8 L1822.8 972.2 L1823.8 971.7 L1824.8 971.4 L1825.8 971.2 L1826.8 971.0 L1827.8 970.9 L1828.8 970.8 L1829.8 970.7 L1830.8 970.6 L1831.8 970.6 L1832.8 970.6 L1833.8 970.7 L1834.8 970.9 L1835.8 971.3 L1836.8 971.9 L1837.8 972.6 L1838.8 973.4 L1839.8 974.1 L1840.8 974.7 L1841.8 975.3 L1842.8 975.7 L1843.8 976.2 L1844.8 976.6 L1845.8 976.9 L1846.8 977.4 L1847.8 977.8 L1848.8 978.3 L1849.8 978.8 L1850.8 979.4 L1851.8 980.1 L1852.8 980.8 L1853.8 981.6 L1854.8 982.5 L1855.8 983.3 L1856.8 984.1 L1857.8 984.9 L1858.8 985.8 L1859.8 986.7 L1860.8 987.5 L1861.8 988.4 L1862.8 989.0 L1863.8 989.5 L1864.8 989.8 L1865.8 990.0 L1866.8 990.1 L1867.8 990.1 L1868.8 990.2 L1869.8 990.2 L1870.8 990.3 L1871.8 990.3 L1872.8 990.5 L1873.8 990.6 L1874.8 990.8 L1875.8 991.0 L1876.8 991.3 L1877.8 991.7 L1878.8 992.0 L1879.8 992.5 L1880.8 992.9 L1881.8 993.5 L1882.8 994.3 L1883.8 995.1 L1884.8 996.1 L1885.8 997.0 L1886.8 998.0 L1887.8 998.9 L1888.8 999.7 L1889.8 1000.6 L1890.8 1001.4 L1891.8 1002.2 L1892.8 1003.0 L1893.8 1003.8 L1894.8 1004.4 L1895.8 1004.8 L1896.8 1005.2 L1897.8 1005.4 L1898.8 1005.5 L1899.8 1005.6 L1900.8 1005.7 L1901.8 1005.8 L1902.8 1005.9 L1903.8 1006.0 L1904.8 1006.1 L1905.8 1006.2 L1906.8 1006.3 L1907.8 1006.5 L1908.8 1006.6 L1909.8 1006.7 L1910.8 1006.9 L1911.8 1007.1 L1912.8 1007.2 L1913.8 1007.4 L1914.8 1007.6 L1915.8 1007.9 L1916.8 1008.1 L1917.8 1008.4 L1918.8 1008.7 L1919.8 1009.0 L1920.8 1009.4 L1921.8 1009.8 L1922.8 1010.3 L1923.8 1010.8 L1924.8 1011.4 L1925.8 1012.0 L1926.8 1012.7 L1927.8 1013.4 L1928.8 1014.2 L1929.8 1015.1 L1930.8 1016.0 L1931.8 1017.0 L1932.8 1018.0 L1933.8 1019.0 L1934.8 1019.8 L1935.8 1020.4 L1936.8 1020.9 L1937.8 1021.2 L1938.8 1021.5 L1939.8 1021.7 L1940.8 1021.9 L1941.8 1022.0 L1942.8 1022.1 L1943.8 1022.1 L1944.8 1022.1 L1945.8 1022.0 L1946.8 1021.9 L1947.8 1021.7 L1948.8 1021.5 L1949.8 1021.3 L1950.8 1021.2 L1951.8 1021.1 L1952.8 1021.0 L1953.8 1021.1 L1954.8 1021.3 L1955.8 1021.6 L1956.8 1022.0 L1957.8 1022.4 L1958.8 1022.8 L1959.8 1023.2 L1960.8 1023.6 L1961.8 1023.9 L1962.8 1024.2 L1963.8 1024.4 L1964.8 1024.7 L1965.8 1025.0 L1966.8 1025.3 L1967.8 1025.6 L1968.8 1025.9 L1969.8 1026.2 L1970.8 1026.5 L1971.8 1026.8 L1972.8 1027.1 L1973.8 1027.4 L1974.8 1027.8 L1975.8 1028.2 L1976.8 1028.6 L1977.8 1029.0 L1978.8 1029.5 L1979.8 1030.0 L1980.8 1030.5 L1981.8 1031.0 L1982.8 1031.5 L1983.8 1032.1 L1984.8 1032.6 L1985.8 1033.2 L1986.8 1033.8 L1987.8 1034.4 L1988.8 1035.1 L1989.8 1035.6 L1990.8 1036.2 L1991.8 1036.7 L1992.8 1037.1 L1993.8 1037.5 L1994.8 1037.9 L1995.8 1038.2 L1996.8 1038.5 L1997.8 1038.8 L1998.8 1039.1 L1999.8 1039.5 L2000.8 1040.0 L2001.8 1040.5 L2002.8 1041.1 L2003.8 1041.7 L2004.8 1042.3 L2005.8 1042.9 L2006.8 1043.4 L2007.8 1043.7 L2008.8 1044.0 L2009.8 1044.1 L2010.8 1044.2 L2011.8 1044.3 L2012.8 1044.3 L2013.8 1044.4 L2014.8 1044.4 L2015.8 1044.6 L2016.8 1044.8 L2017.8 1045.1 L2018.8 1045.6 L2019.8 1046.2 L2020.8 1046.8 L2021.8 1047.5 L2022.8 1048.2 L2023.8 1048.9 L2024.8 1049.4 L2025.8 1049.9 L2026.8 1050.4 L2027.8 1050.8 L2028.8 1051.3 L2029.8 1051.7 L2030.8 1052.1 L2031.8 1052.4 L2032.8 1052.8 L2033.8 1053.0 L2034.1 1053.2" fill="none" stroke="#2a2a2e" stroke-width="1.65" stroke-linejoin="round"/>
</g>
<rect x="19.5" y="36.5" width="2070.0" height="841.0" fill="none" stroke="#8a8a8a" stroke-width="2"/>
<rect x="19.5" y="883.5" width="2070.0" height="263.0" fill="none" stroke="#8a8a8a" stroke-width="2"/>
<path d="M2079.5 123.4 H2089.0M2079.5 180.8 H2089.0M2079.5 238.5 H2089.0M2079.5 296.4 H2089.0M2079.5 355.4 H2089.0M2079.5 413.0 H2089.0M2079.5 471.2 H2089.0M2079.5 528.6 H2089.0M2079.5 586.5 H2089.0M2079.5 645.0 H2089.0M2079.5 704.0 H2089.0M2079.5 761.7 H2089.0M2079.5 820.4 H2089.0M2079.5 877.5 H2089.0M2081.8 918.6 H2089.0M2081.8 957.0 H2089.0M2081.8 993.7 H2089.0M2081.8 1032.4 H2089.0M2081.8 1070.4 H2089.0M2081.8 1107.0 H2089.0M2081.8 1146.0 H2089.0M21.5 1146.5 V1150.5M198.5 1146.5 V1150.5M373.3 1146.5 V1150.5M532.8 1146.5 V1150.5M716.6 1146.5 V1150.5M875.4 1146.5 V1150.5M1043.6 1146.5 V1150.5M1211.3 1146.5 V1150.5M1363.4 1146.5 V1150.5M1530.0 1146.5 V1150.5M1706.7 1146.5 V1150.5M1872.7 1146.5 V1150.5M2034.0 1146.5 V1150.5" stroke="#1a1a1e" stroke-width="2" fill="none"/>
<g font-family="Liberation Sans, sans-serif" stroke="#26262c" stroke-width="0.3" stroke-opacity="0.8" font-size="18.7" fill="#1e1e24"><text x="2093.4" y="130.0" textLength="37.4" lengthAdjust="spacingAndGlyphs">5.20</text><text x="2093.4" y="187.4" textLength="37.4" lengthAdjust="spacingAndGlyphs">5.10</text><text x="2093.4" y="245.1" textLength="37.4" lengthAdjust="spacingAndGlyphs">5.00</text><text x="2093.4" y="303.0" textLength="37.4" lengthAdjust="spacingAndGlyphs">4.90</text><text x="2093.4" y="419.6" textLength="37.4" lengthAdjust="spacingAndGlyphs">4.70</text><text x="2093.4" y="477.8" textLength="37.4" lengthAdjust="spacingAndGlyphs">4.60</text><text x="2093.4" y="535.2" textLength="37.4" lengthAdjust="spacingAndGlyphs">4.50</text><text x="2093.4" y="593.1" textLength="37.4" lengthAdjust="spacingAndGlyphs">4.40</text><text x="2093.4" y="651.6" textLength="37.4" lengthAdjust="spacingAndGlyphs">4.30</text><text x="2093.4" y="710.6" textLength="37.4" lengthAdjust="spacingAndGlyphs">4.20</text><text x="2093.4" y="768.3" textLength="37.4" lengthAdjust="spacingAndGlyphs">4.10</text><text x="2093.4" y="827.0" textLength="37.4" lengthAdjust="spacingAndGlyphs">4.00</text><text x="2093.4" y="884.1" textLength="37.4" lengthAdjust="spacingAndGlyphs">3.90</text><text x="2093.8" y="924.8">3</text><text x="2093.8" y="963.2">2</text><text x="2093.8" y="999.9">1</text><text x="2093.8" y="1038.6">0</text><text x="2093.8" y="1076.6">-1</text><text x="2093.8" y="1113.2">-2</text><text x="2093.8" y="1152.2">-3</text></g>
<rect x="2093.8" y="355.6" width="36.8" height="22" fill="#000"/>
<text x="2093.8" y="373.2" font-family="Liberation Sans, sans-serif" font-size="18.7" fill="#fff" stroke="#fff" stroke-width="0.3" textLength="36.6" lengthAdjust="spacingAndGlyphs">4.78</text>
<g font-family="Liberation Sans, sans-serif" stroke="#26262c" stroke-width="0.3" stroke-opacity="0.8" font-size="18.8" font-weight="bold" fill="#1a1a20"><text x="-5.9" y="1169.5" textLength="54.9" lengthAdjust="spacingAndGlyphs">Jul 24</text><text x="179.7" y="1169.5" textLength="37.6" lengthAdjust="spacingAndGlyphs">Aug</text><text x="355.5" y="1169.5" textLength="35.5" lengthAdjust="spacingAndGlyphs">Sep</text><text x="516.7" y="1169.5" textLength="32.3" lengthAdjust="spacingAndGlyphs">Oct</text><text x="698.3" y="1169.5" textLength="36.6" lengthAdjust="spacingAndGlyphs">Nov</text><text x="857.6" y="1169.5" textLength="35.5" lengthAdjust="spacingAndGlyphs">Dec</text><text x="1013.5" y="1169.5" textLength="60.3" lengthAdjust="spacingAndGlyphs">Jan 25</text><text x="1194.1" y="1169.5" textLength="34.4" lengthAdjust="spacingAndGlyphs">Feb</text><text x="1346.2" y="1169.5" textLength="34.4" lengthAdjust="spacingAndGlyphs">Mar</text><text x="1513.3" y="1169.5" textLength="33.3" lengthAdjust="spacingAndGlyphs">Apr</text><text x="1687.9" y="1169.5" textLength="37.7" lengthAdjust="spacingAndGlyphs">May</text><text x="1855.5" y="1169.5" textLength="34.4" lengthAdjust="spacingAndGlyphs">Jun</text><text x="2020.0" y="1169.5" textLength="28.0" lengthAdjust="spacingAndGlyphs">Jul</text></g>
<text x="16.0" y="22.3" font-family="Liberation Sans, sans-serif" stroke="#26262c" stroke-width="0.3" stroke-opacity="0.8" font-size="22.6" font-weight="bold" fill="#1a1a20" textLength="537" lengthAdjust="spacingAndGlyphs">$TYX - 30-Year Treasury Bond - Daily OHLC Chart</text>
<g font-family="Liberation Sans, sans-serif" stroke="#26262c" stroke-width="0.3" stroke-opacity="0.8" font-size="19" fill="#26262c"><rect x="26.7" y="42.6" width="12.7" height="12.7" fill="#000" stroke="#1c1c22" stroke-width="1.2"/><text x="47.3" y="55.9" textLength="286.0" lengthAdjust="spacingAndGlyphs">Op:4.75, Hi:4.81, Lo:4.75, Cl:4.78</text><rect x="376.8" y="42.6" width="12.7" height="12.7" fill="#a0a0ff" stroke="#1c1c22" stroke-width="1.2"/><text x="397.4" y="55.9" textLength="241.6" lengthAdjust="spacingAndGlyphs">BBANDS (20, 2): 4.76 - 4.99</text><rect x="682.9" y="42.6" width="12.7" height="12.7" fill="#ee1111" stroke="#1c1c22" stroke-width="1.2"/><text x="703.6" y="55.9" textLength="154.2" lengthAdjust="spacingAndGlyphs">EXPMA (20): 4.86</text><rect x="901.6" y="42.6" width="12.7" height="12.7" fill="#22c233" stroke="#1c1c22" stroke-width="1.2"/><text x="922.0" y="55.9" textLength="154.3" lengthAdjust="spacingAndGlyphs">EXPMA (50): 4.85</text><rect x="1120.4" y="42.6" width="12.7" height="12.7" fill="#0000f0" stroke="#1c1c22" stroke-width="1.2"/><text x="1141.0" y="55.9" textLength="164.8" lengthAdjust="spacingAndGlyphs">EXPMA (100): 4.79</text><rect x="1349.6" y="42.6" width="12.7" height="12.7" fill="#9a1fe8" stroke="#1c1c22" stroke-width="1.2"/><text x="1370.0" y="55.9" textLength="164.6" lengthAdjust="spacingAndGlyphs">EXPMA (200): 4.69</text></g>
<g font-family="Liberation Sans, sans-serif" stroke="#26262c" stroke-width="0.3" stroke-opacity="0.8" font-size="19" fill="#26262c"><rect x="26.8" y="890.0" width="12.7" height="12.7" fill="#000" stroke="#1c1c22" stroke-width="1.2"/><text x="47.6" y="903.3" textLength="165.0" lengthAdjust="spacingAndGlyphs">PPO (12, 26): -0.54</text><rect x="256.4" y="890.0" width="12.7" height="12.7" fill="#0000f0" stroke="#1c1c22" stroke-width="1.2"/><text x="276.2" y="903.3" textLength="149.0" lengthAdjust="spacingAndGlyphs">EXPMA (9): -0.21</text><rect x="470.0" y="890.0" width="12.7" height="12.7" fill="#2aee3a" stroke="#1c1c22" stroke-width="1.2"/><text x="490.7" y="903.3" textLength="150.0" lengthAdjust="spacingAndGlyphs">Divergence: -0.33</text></g>
<text x="38.0" y="861.5" font-family="Liberation Sans, sans-serif" stroke="#26262c" stroke-width="0.3" stroke-opacity="0.8" font-size="18.2" fill="#333" textLength="133" lengthAdjust="spacingAndGlyphs">© Barchart.com</text>
</svg>
</div>
<div class="foot"></div>
</body>
</html>
